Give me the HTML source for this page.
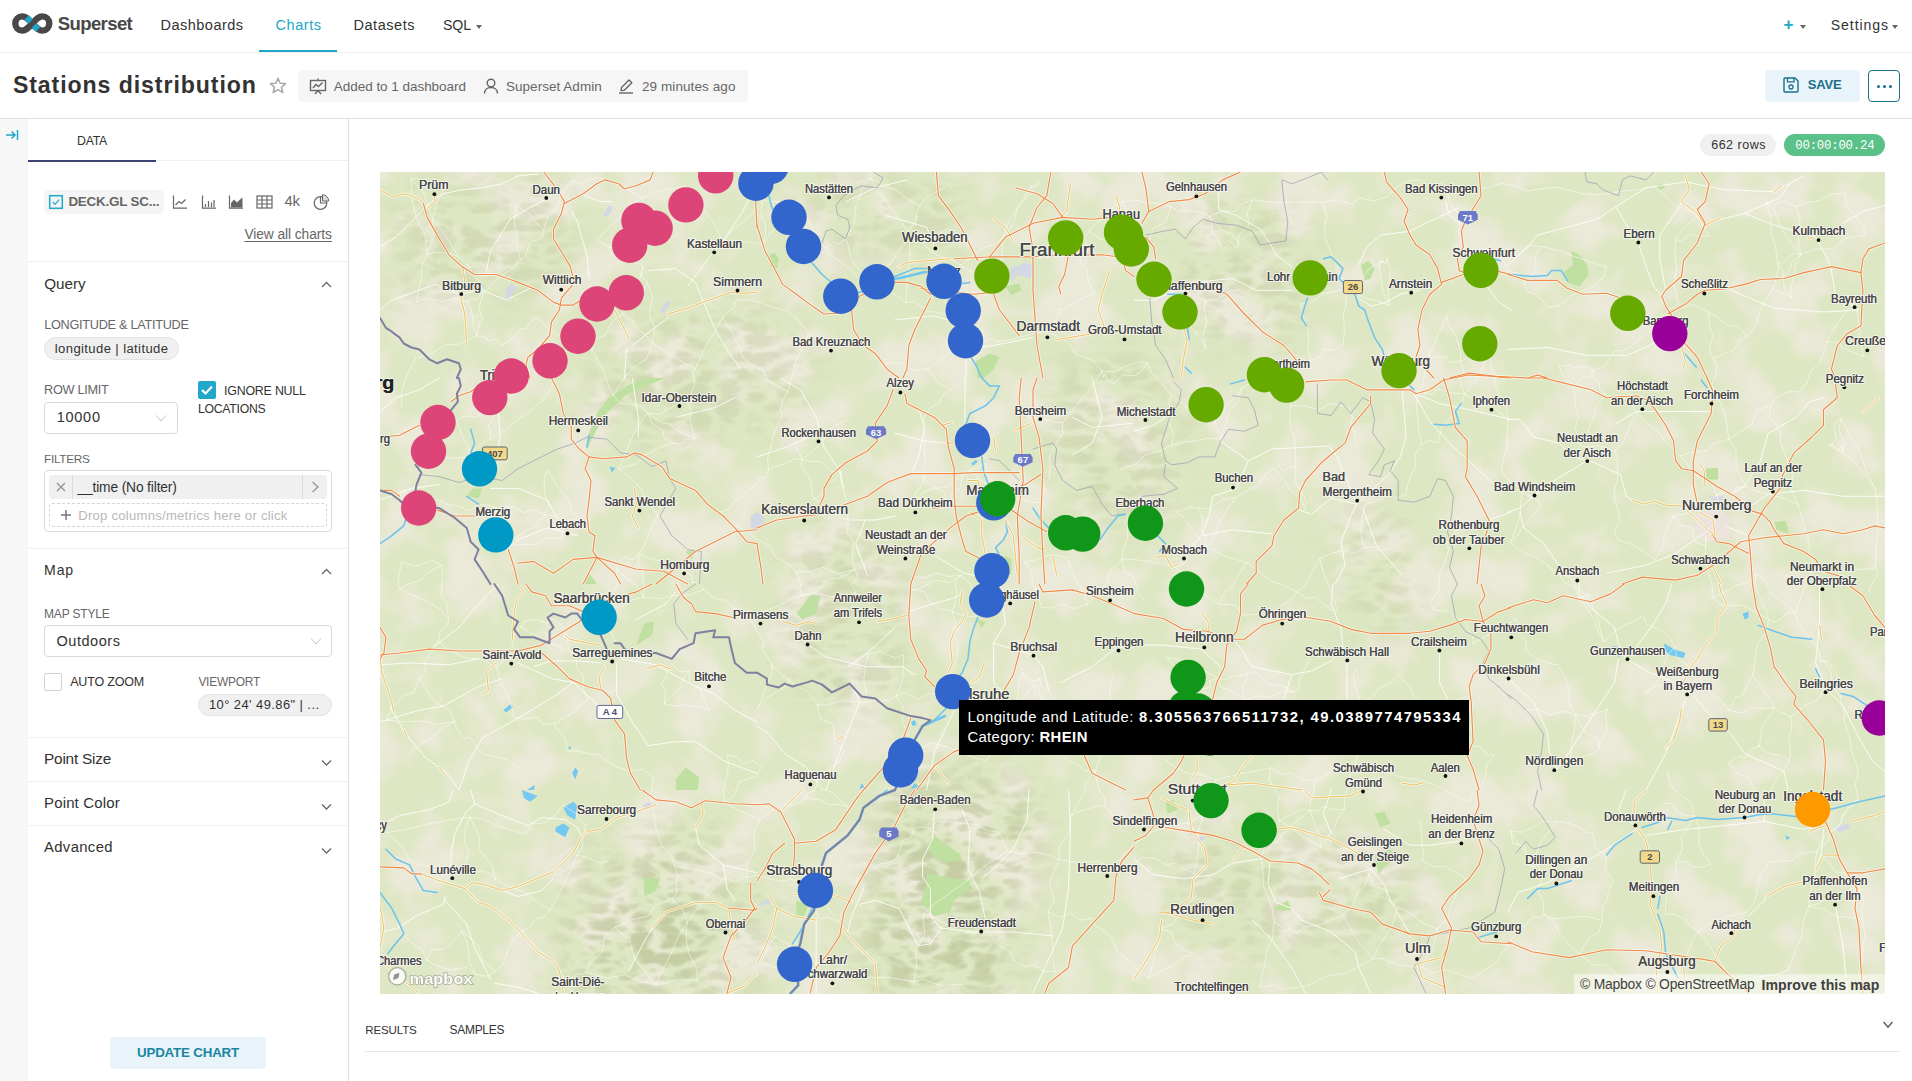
<!DOCTYPE html><html><head><meta charset="utf-8"><title>Stations distribution</title><style>
html,body{margin:0;padding:0;width:1912px;height:1081px;overflow:hidden;background:#fff;font-family:"Liberation Sans",sans-serif;}
.b{position:absolute;}
.t{position:absolute;white-space:pre;}
.caret{width:0;height:0;border-left:3.5px solid transparent;border-right:3.5px solid transparent;border-top:4px solid #666;margin-top:2px}
</style></head><body><svg class="b" style="left:0px;top:0px" width="60" height="45" viewBox="0 0 60 45">
<path d="M22.3 16.4 C18.3 16.4 15.3 19.6 15.3 23.5 C15.3 27.4 18.3 30.6 22.3 30.6 C25.5 30.6 27.9 28.4 32.3 23.5 C36.7 18.6 39.1 16.4 42.3 16.4 C46.3 16.4 49.3 19.6 49.3 23.5 C49.3 27.4 46.3 30.6 42.3 30.6 C39.1 30.6 36.7 28.4 32.3 23.5 C27.9 18.6 25.5 16.4 22.3 16.4 Z" fill="none" stroke="#484848" stroke-width="6.4"/>
<path d="M26.6 17.6 L30.6 21.6" stroke="#20a7c9" stroke-width="6.4"/>
<path d="M34 25.4 L38 29.4" stroke="#20a7c9" stroke-width="6.4"/>
</svg>
<div class="t " style="left:57.70px;top:15.00px;font-size:18.55px;line-height:18.55px;font-weight:700;color:#484848;letter-spacing:-0.155px;font-family:'Liberation Sans', sans-serif;letter-spacing:-0.6px;">Superset</div>
<div class="t " style="left:160.60px;top:17.70px;font-size:14.53px;line-height:14.53px;font-weight:400;color:#323232;letter-spacing:0.461px;font-family:'Liberation Sans', sans-serif;">Dashboards</div>
<div class="t " style="left:275.60px;top:17.70px;font-size:14.53px;line-height:14.53px;font-weight:400;color:#20a7c9;letter-spacing:0.521px;font-family:'Liberation Sans', sans-serif;">Charts</div>
<div class="t " style="left:353.50px;top:17.70px;font-size:14.53px;line-height:14.53px;font-weight:400;color:#323232;letter-spacing:0.523px;font-family:'Liberation Sans', sans-serif;">Datasets</div>
<div class="t " style="left:443.00px;top:18.06px;font-size:14.1px;line-height:14.1px;font-weight:400;color:#323232;letter-spacing:-0.107px;font-family:'Liberation Sans', sans-serif;">SQL</div>
<div class="b caret" style="left:476px;top:23px"></div>
<div class="b" style="left:259px;top:50px;width:78px;height:3px;background:#20a7c9;"></div>
<div class="b" style="left:0px;top:52px;width:1912px;height:1px;background:#f0f0f0;"></div>
<div class="t " style="left:1783.50px;top:16.11px;font-size:17px;line-height:17px;font-weight:700;color:#20a7c9;font-family:'Liberation Sans', sans-serif;">+</div>
<div class="b caret" style="left:1800px;top:23px"></div>
<div class="t " style="left:1830.80px;top:18.26px;font-size:14.1px;line-height:14.1px;font-weight:400;color:#323232;letter-spacing:0.893px;font-family:'Liberation Sans', sans-serif;">Settings</div>
<div class="b caret" style="left:1892px;top:23px"></div>
<div class="t " style="left:12.90px;top:74.24px;font-size:23.11px;line-height:23.11px;font-weight:700;color:#323232;letter-spacing:0.917px;font-family:'Liberation Sans', sans-serif;">Stations distribution</div>
<svg class="b" style="left:269px;top:77px" width="18" height="17" viewBox="0 0 18 17"><path d="M9 1.2 L11.2 6.2 L16.6 6.6 L12.5 10.2 L13.8 15.5 L9 12.7 L4.2 15.5 L5.5 10.2 L1.4 6.6 L6.8 6.2 Z" fill="none" stroke="#a8a8a8" stroke-width="1.5" stroke-linejoin="round"/></svg>
<div class="b" style="left:298px;top:70px;width:450px;height:32px;background:#f6f6f6;border-radius:4px;"></div>
<svg class="b" style="left:309px;top:78px" width="18" height="17" viewBox="0 0 18 17"><rect x="1.5" y="2.5" width="15" height="10" fill="none" stroke="#666" stroke-width="1.4"/><path d="M9 0.5 V2.5 M4 10 L7 6.5 L9.5 8.5 L13.5 4.5 M6 16 L9 12.5 L12 16" fill="none" stroke="#666" stroke-width="1.4"/></svg>
<div class="t " style="left:333.80px;top:80.07px;font-size:13.5px;line-height:13.5px;font-weight:400;color:#666666;letter-spacing:-0.034px;font-family:'Liberation Sans', sans-serif;">Added to 1 dashboard</div>
<svg class="b" style="left:483px;top:78px" width="16" height="16" viewBox="0 0 16 16"><circle cx="8" cy="5" r="3.8" fill="none" stroke="#666" stroke-width="1.4"/><path d="M1.5 15.5 C1.5 11.5 4.5 9.5 8 9.5 C11.5 9.5 14.5 11.5 14.5 15.5" fill="none" stroke="#666" stroke-width="1.4"/></svg>
<div class="t " style="left:506.00px;top:80.07px;font-size:13.5px;line-height:13.5px;font-weight:400;color:#666666;letter-spacing:0.031px;font-family:'Liberation Sans', sans-serif;">Superset Admin</div>
<svg class="b" style="left:618px;top:78px" width="17" height="16" viewBox="0 0 17 16"><path d="M3 12.5 L3.5 9.5 L11 2 L13.8 4.8 L6.3 12.3 Z" fill="none" stroke="#666" stroke-width="1.4" stroke-linejoin="round"/><path d="M1 15 H15" stroke="#666" stroke-width="1.4"/></svg>
<div class="t " style="left:642.00px;top:80.07px;font-size:13.5px;line-height:13.5px;font-weight:400;color:#666666;letter-spacing:0.084px;font-family:'Liberation Sans', sans-serif;">29 minutes ago</div>
<div class="b" style="left:1765px;top:70px;width:95px;height:32px;background:#e8f4f9;border-radius:4px;"></div>
<svg class="b" style="left:1783px;top:77px" width="16" height="16" viewBox="0 0 16 16"><path d="M1 2 Q1 1 2 1 H12 L15 4 V14 Q15 15 14 15 H2 Q1 15 1 14 Z" fill="none" stroke="#1b6f8a" stroke-width="1.4" stroke-linejoin="round"/><path d="M4.5 1 V4.8 H11 V1" fill="none" stroke="#1b6f8a" stroke-width="1.3"/><circle cx="8" cy="10" r="2" fill="none" stroke="#1b6f8a" stroke-width="1.3"/></svg>
<div class="t " style="left:1807.80px;top:79.02px;font-size:12.97px;line-height:12.97px;font-weight:700;color:#1b6f8a;letter-spacing:-0.184px;font-family:'Liberation Sans', sans-serif;">SAVE</div>
<div class="b" style="left:1868px;top:70px;width:32px;height:32px;border:1px solid #1b6f8a;border-radius:4px;box-sizing:border-box;"></div>
<div class="b" style="left:1877px;top:85px;width:3px;height:3px;background:#1b6f8a;border-radius:50%;box-shadow:6px 0 0 #1b6f8a,12px 0 0 #1b6f8a"></div>
<div class="b" style="left:0px;top:118px;width:1912px;height:1px;background:#e0e0e0;"></div>
<div class="b" style="left:0px;top:119px;width:28px;height:962px;background:#f7f7f7;"></div>
<svg class="b" style="left:5px;top:129px" width="14" height="12" viewBox="0 0 14 12"><path d="M1 6 H9.5 M6.5 2.5 L10 6 L6.5 9.5" fill="none" stroke="#20a7c9" stroke-width="1.5"/><path d="M12.5 1 V11" stroke="#20a7c9" stroke-width="1.5"/></svg>
<div class="b" style="left:348px;top:119px;width:1px;height:962px;background:#e0e0e0;"></div>
<div class="t " style="left:77.00px;top:134.78px;font-size:12.31px;line-height:12.31px;font-weight:400;color:#323232;letter-spacing:-0.234px;font-family:'Liberation Sans', sans-serif;">DATA</div>
<div class="b" style="left:28px;top:160px;width:320px;height:1px;background:#f0f0f0;"></div>
<div class="b" style="left:28px;top:160px;width:128px;height:2px;background:#3b4372;"></div>
<div class="b" style="left:44px;top:190px;width:120px;height:24px;background:#f5f5f5;border-radius:5px;"></div>
<svg class="b" style="left:48px;top:194px" width="16" height="16" viewBox="0 0 16 16"><rect x="1.7" y="1.7" width="12.6" height="12.6" fill="none" stroke="#20a7c9" stroke-width="1.5"/><path d="M4.8 8 L7 10.3 L11.2 5.6" fill="none" stroke="#20a7c9" stroke-width="1.2"/></svg>
<div class="t " style="left:68.40px;top:194.88px;font-size:13.37px;line-height:13.37px;font-weight:700;color:#666666;letter-spacing:-0.179px;font-family:'Liberation Sans', sans-serif;">DECK.GL SC...</div>
<svg class="b" style="left:172px;top:194px" width="160" height="18" viewBox="0 0 160 18">
<g fill="none" stroke="#666" stroke-width="1.2">
<path d="M1.5 1.5 V14.2 H15"/><path d="M3.5 11 L7 7.5 L9.5 9.5 L13.5 5.5"/>
<path d="M30.5 1.5 V14.2 H44"/><path d="M33.5 13 V10 M36.5 13 V7 M39.5 13 V8.5 M42 13 V6"/>
<path d="M57.5 1.5 V14.2 H71"/>
<rect x="85" y="2" width="15" height="12"/><path d="M85 6 H100 M85 10 H100 M90 2 V14 M95 2 V14"/>
<circle cx="148.5" cy="9" r="6.3"/><path d="M148.5 2.7 V9 H154.8"/>
</g>
<path d="M59 13.6 V9 L62 5.5 L65 8.5 L67.5 6 L70.5 3.5 V13.6 Z" fill="#666"/>
<path d="M150.5 0.8 A6.3 6.3 0 0 1 156.7 7 H150.5 Z" fill="#ddd" stroke="#666" stroke-width="1"/>
</svg>
<div class="t " style="left:284.40px;top:194.33px;font-size:14.97px;line-height:14.97px;font-weight:400;color:#666666;letter-spacing:-0.209px;font-family:'Liberation Sans', sans-serif;">4k</div>
<div class="t " style="left:244.40px;top:228.31px;font-size:13.81px;line-height:13.81px;font-weight:400;color:#666666;letter-spacing:-0.084px;font-family:'Liberation Sans', sans-serif;text-decoration:underline;text-underline-offset:1.5px;">View all charts</div>
<div class="b" style="left:28px;top:261px;width:320px;height:1px;background:#f0f0f0;"></div>
<div class="t " style="left:44.20px;top:275.58px;font-size:15.26px;line-height:15.26px;font-weight:400;color:#323232;letter-spacing:-0.013px;font-family:'Liberation Sans', sans-serif;">Query</div>
<svg class="b" style="left:320.5px;top:281px" width="11" height="8" viewBox="0 0 11 8"><path d="M1 6 L5.5 1.5 L10 6" fill="none" stroke="#666" stroke-width="1.3"/></svg>
<div class="t " style="left:44.20px;top:319.26px;font-size:12.69px;line-height:12.69px;font-weight:400;color:#666666;letter-spacing:-0.271px;font-family:'Liberation Sans', sans-serif;">LONGITUDE &amp; LATITUDE</div>
<div class="b" style="left:44px;top:337px;width:135px;height:23px;background:#f0f0f0;border:1px solid #e3e3e3;border-radius:12px;box-sizing:border-box;"></div>
<div class="t " style="left:54.80px;top:341.93px;font-size:13.08px;line-height:13.08px;font-weight:400;color:#323232;letter-spacing:0.382px;font-family:'Liberation Sans', sans-serif;">longitude | latitude</div>
<div class="t " style="left:44.00px;top:384.42px;font-size:12.73px;line-height:12.73px;font-weight:400;color:#666666;letter-spacing:-0.297px;font-family:'Liberation Sans', sans-serif;">ROW LIMIT</div>
<div class="b" style="left:44px;top:402px;width:134px;height:32px;border:1px solid #d9d9d9;border-radius:4px;box-sizing:border-box;"></div>
<div class="t " style="left:56.80px;top:409.70px;font-size:14.53px;line-height:14.53px;font-weight:400;color:#323232;letter-spacing:0.698px;font-family:'Liberation Sans', sans-serif;">10000</div>
<svg class="b" style="left:155px;top:414px" width="12" height="9" viewBox="0 0 12 9"><path d="M1 1.5 L6 7 L11 1.5" fill="none" stroke="#c4c4c4" stroke-width="1"/></svg>
<div class="b" style="left:198px;top:381px;width:18px;height:18px;background:#20a7c9;border-radius:2px;"></div>
<svg class="b" style="left:198px;top:381px" width="18" height="18" viewBox="0 0 18 18"><path d="M4 9 L7.5 12.5 L14 5.5" fill="none" stroke="#fff" stroke-width="2.2"/></svg>
<div class="t " style="left:224.00px;top:384.70px;font-size:12.4px;line-height:12.4px;font-weight:400;color:#323232;letter-spacing:-0.206px;font-family:'Liberation Sans', sans-serif;">IGNORE NULL</div>
<div class="t " style="left:198.00px;top:403.22px;font-size:12.26px;line-height:12.26px;font-weight:400;color:#323232;letter-spacing:-0.279px;font-family:'Liberation Sans', sans-serif;">LOCATIONS</div>
<div class="t " style="left:44.00px;top:454.31px;font-size:11.8px;line-height:11.8px;font-weight:400;color:#666666;letter-spacing:-0.274px;font-family:'Liberation Sans', sans-serif;">FILTERS</div>
<div class="b" style="left:44px;top:470px;width:288px;height:62px;border:1px solid #d9d9d9;border-radius:4px;box-sizing:border-box;"></div>
<div class="b" style="left:49px;top:475px;width:278px;height:24px;background:#f0f0f0;border-radius:3px;"></div>
<div class="b" style="left:72px;top:475px;width:1px;height:24px;background:#dcdcdc;"></div>
<div class="b" style="left:302px;top:475px;width:1px;height:24px;background:#dcdcdc;"></div>
<svg class="b" style="left:56px;top:482px" width="10" height="10" viewBox="0 0 10 10"><path d="M1 1 L9 9 M9 1 L1 9" stroke="#999" stroke-width="1.5"/></svg>
<div class="t " style="left:77.40px;top:480.51px;font-size:13.81px;line-height:13.81px;font-weight:400;color:#323232;letter-spacing:-0.144px;font-family:'Liberation Sans', sans-serif;">__time (No filter)</div>
<svg class="b" style="left:311px;top:481px" width="9" height="12" viewBox="0 0 9 12"><path d="M1.5 1 L7 6 L1.5 11" fill="none" stroke="#999" stroke-width="1.4"/></svg>
<div class="b" style="left:49px;top:503px;width:278px;height:24px;border:1px dashed #d4d4d4;border-radius:3px;box-sizing:border-box;"></div>
<svg class="b" style="left:60px;top:509px" width="12" height="12" viewBox="0 0 12 12"><path d="M6 1 V11 M1 6 H11" stroke="#777" stroke-width="1.5"/></svg>
<div class="t " style="left:78.20px;top:508.93px;font-size:13.08px;line-height:13.08px;font-weight:400;color:#b8b8b8;letter-spacing:0.260px;font-family:'Liberation Sans', sans-serif;">Drop columns/metrics here or click</div>
<div class="b" style="left:28px;top:548px;width:320px;height:1px;background:#f0f0f0;"></div>
<div class="t " style="left:44.00px;top:562.76px;font-size:14.1px;line-height:14.1px;font-weight:400;color:#323232;letter-spacing:0.885px;font-family:'Liberation Sans', sans-serif;">Map</div>
<svg class="b" style="left:320.5px;top:568px" width="11" height="8" viewBox="0 0 11 8"><path d="M1 6 L5.5 1.5 L10 6" fill="none" stroke="#666" stroke-width="1.3"/></svg>
<div class="t " style="left:44.00px;top:607.94px;font-size:12.0px;line-height:12.0px;font-weight:400;color:#666666;letter-spacing:-0.180px;font-family:'Liberation Sans', sans-serif;">MAP STYLE</div>
<div class="b" style="left:44px;top:625px;width:288px;height:32px;border:1px solid #d9d9d9;border-radius:4px;box-sizing:border-box;"></div>
<div class="t " style="left:56.50px;top:633.70px;font-size:14.53px;line-height:14.53px;font-weight:400;color:#323232;letter-spacing:0.533px;font-family:'Liberation Sans', sans-serif;">Outdoors</div>
<svg class="b" style="left:310px;top:637px" width="12" height="9" viewBox="0 0 12 9"><path d="M1 1.5 L6 7 L11 1.5" fill="none" stroke="#c4c4c4" stroke-width="1"/></svg>
<div class="b" style="left:44px;top:673px;width:18px;height:18px;border:1px solid #d0d0d0;border-radius:2px;box-sizing:border-box;"></div>
<div class="t " style="left:70.20px;top:676.42px;font-size:12.5px;line-height:12.5px;font-weight:400;color:#323232;letter-spacing:-0.171px;font-family:'Liberation Sans', sans-serif;">AUTO ZOOM</div>
<div class="t " style="left:198.40px;top:676.88px;font-size:11.95px;line-height:11.95px;font-weight:400;color:#666666;letter-spacing:-0.231px;font-family:'Liberation Sans', sans-serif;">VIEWPORT</div>
<div class="b" style="left:198px;top:694px;width:134px;height:22px;background:#f0f0f0;border:1px solid #e3e3e3;border-radius:11px;box-sizing:border-box;"></div>
<div class="t " style="left:209.00px;top:699.25px;font-size:12.94px;line-height:12.94px;font-weight:400;color:#323232;letter-spacing:0.425px;font-family:'Liberation Sans', sans-serif;">10° 24&#x27; 49.86&quot; | ...</div>
<div class="b" style="left:28px;top:737px;width:320px;height:1px;background:#f0f0f0;"></div>
<div class="t " style="left:44.00px;top:751.26px;font-size:15.41px;line-height:15.41px;font-weight:400;color:#323232;letter-spacing:-0.231px;font-family:'Liberation Sans', sans-serif;">Point Size</div>
<svg class="b" style="left:320.5px;top:759px" width="11" height="8" viewBox="0 0 11 8"><path d="M1 1.5 L5.5 6 L10 1.5" fill="none" stroke="#666" stroke-width="1.3"/></svg>
<div class="b" style="left:28px;top:781px;width:320px;height:1px;background:#f0f0f0;"></div>
<div class="t " style="left:44.00px;top:795.63px;font-size:14.97px;line-height:14.97px;font-weight:400;color:#323232;letter-spacing:0.165px;font-family:'Liberation Sans', sans-serif;">Point Color</div>
<svg class="b" style="left:320.5px;top:803px" width="11" height="8" viewBox="0 0 11 8"><path d="M1 1.5 L5.5 6 L10 1.5" fill="none" stroke="#666" stroke-width="1.3"/></svg>
<div class="b" style="left:28px;top:825px;width:320px;height:1px;background:#f0f0f0;"></div>
<div class="t " style="left:44.00px;top:839.65px;font-size:14.83px;line-height:14.83px;font-weight:400;color:#323232;letter-spacing:0.363px;font-family:'Liberation Sans', sans-serif;">Advanced</div>
<svg class="b" style="left:320.5px;top:847px" width="11" height="8" viewBox="0 0 11 8"><path d="M1 1.5 L5.5 6 L10 1.5" fill="none" stroke="#666" stroke-width="1.3"/></svg>
<div class="b" style="left:110px;top:1037px;width:156px;height:32px;background:#e8f4f9;border-radius:4px;"></div>
<div class="t " style="left:137.00px;top:1046.41px;font-size:13.34px;line-height:13.34px;font-weight:700;color:#1a85a0;letter-spacing:-0.176px;font-family:'Liberation Sans', sans-serif;">UPDATE CHART</div>
<div class="b" style="left:1700px;top:134px;width:76px;height:22px;background:#f0f0f0;border-radius:11px;"></div>
<div class="t " style="left:1711.20px;top:139.22px;font-size:12.5px;line-height:12.5px;font-weight:400;color:#323232;letter-spacing:0.512px;font-family:'Liberation Sans', sans-serif;">662 rows</div>
<div class="b" style="left:1784px;top:134px;width:101px;height:22px;background:#5ac189;border-radius:11px;"></div>
<div class="t " style="left:1795.30px;top:140.37px;font-size:12.31px;line-height:12.31px;font-weight:400;color:#ffffff;letter-spacing:-0.196px;font-family:'Liberation Mono', monospace;">00:00:00.24</div>
<div class="t " style="left:365.30px;top:1025.19px;font-size:11.59px;line-height:11.59px;font-weight:400;color:#323232;letter-spacing:-0.182px;font-family:'Liberation Sans', sans-serif;">RESULTS</div>
<div class="t " style="left:449.60px;top:1024.88px;font-size:11.95px;line-height:11.95px;font-weight:400;color:#323232;letter-spacing:-0.275px;font-family:'Liberation Sans', sans-serif;">SAMPLES</div>
<div class="b" style="left:365px;top:1051px;width:1535px;height:1px;background:#e8e8e8;"></div>
<svg class="b" style="left:1882px;top:1020px" width="12" height="10" viewBox="0 0 12 10"><path d="M1.5 2 L6 7 L10.5 2" fill="none" stroke="#666" stroke-width="1.6"/></svg>
<svg class="b" style="left:380px;top:172px" width="1505" height="822" viewBox="380 172 1505 822">
<defs><filter id="tex" x="380" y="172" width="1505" height="822" filterUnits="userSpaceOnUse" color-interpolation-filters="sRGB"><feTurbulence type="fractalNoise" baseFrequency="0.018" numOctaves="3" seed="7"/><feColorMatrix type="matrix" values="0 0 0 0 0.871  0 0 0 0 0.906  0 0 0 0 0.765  5 0 0 0 -1.7"/></filter></defs>
<rect x="380" y="172" width="1505" height="822" fill="#ebe9d8"/>
<rect x="380" y="172" width="1505" height="822" fill="#000" filter="url(#tex)"/>
<defs><filter id="mblur" x="-20%" y="-20%" width="140%" height="140%"><feGaussianBlur stdDeviation="18"/></filter><mask id="mclip" maskUnits="userSpaceOnUse" x="380" y="172" width="1505" height="822"><g fill="#fff" filter="url(#mblur)"><polygon points="557.5,961.5 577.2,932.0 606.8,912.2 632.4,894.5 646.2,872.8 671.8,857.0 687.6,819.6 695.5,829.4 687.6,864.9 695.5,888.6 715.2,908.3 715.2,947.7 719.1,993.1 616.6,993.1 577.2,979.3"/><polygon points="895.0,809.7 924.6,805.8 973.9,805.8 1013.3,790.0 1033.0,790.0 1033.0,849.2 993.6,888.6 983.8,928.0 1013.3,947.7 1013.3,993.1 875.3,993.1 865.4,947.7 893.1,900.4 895.0,849.2"/></g></mask><filter id="hs" x="380" y="172" width="1505" height="822" filterUnits="userSpaceOnUse" color-interpolation-filters="sRGB"><feTurbulence type="turbulence" baseFrequency="0.035 0.06" numOctaves="2" seed="11"/><feColorMatrix type="matrix" values="0 0 0 0 0.74  0 0 0 0 0.77  0 0 0 0 0.6  3.2 0 0 0 -0.55"/></filter></defs>
<g mask="url(#mclip)"><rect x="380" y="172" width="1505" height="822" fill="#000" filter="url(#hs)" opacity="0.6"/></g>
<defs><mask id="hclip" maskUnits="userSpaceOnUse" x="380" y="172" width="1505" height="822"><g fill="#fff" filter="url(#mblur)"><polygon points="780,540 840,520 900,560 910,700 840,720 790,680"/><polygon points="1060,360 1140,350 1190,420 1170,520 1090,520 1050,450"/><polygon points="1170,210 1280,200 1320,260 1290,340 1190,340"/><polygon points="600,330 720,300 820,330 800,420 650,450 590,420"/><polygon points="400,190 560,180 580,260 520,300 400,300"/><polygon points="800,180 960,180 970,240 820,260"/><polygon points="890,760 1000,760 1040,860 1010,994 880,994 860,880"/><polygon points="560,850 700,820 780,900 760,994 560,994"/><polygon points="1150,840 1280,820 1420,860 1420,940 1200,960"/><polygon points="1330,520 1400,500 1420,620 1360,640"/></g></mask></defs>
<g mask="url(#hclip)"><rect x="380" y="172" width="1505" height="822" fill="#000" filter="url(#hs)" opacity="0.38"/></g>
<g fill="#ebe3dc"><polygon points="1693.3,516.0 1705.2,510.1 1724.9,512.1 1730.8,520.0 1728.8,539.7 1705.2,541.7 1693.3,527.9"/></g>
<g fill="#bfe0a0"><polygon points="768.8,254.8 774.7,252.8 778.7,258.8 776.7,268.6 770.8,266.6"/><polygon points="1005.4,286.4 1019.2,283.4 1021.2,290.3 1011.4,295.2"/><polygon points="975.9,361.3 989.7,353.4 999.5,357.3 993.6,369.2 983.8,378.0 977.8,378.0"/><polygon points="1360.8,264.7 1368.6,260.7 1374.6,268.6 1370.6,278.5 1364.7,280.4"/><polygon points="1571.1,250.9 1579.0,254.8 1586.9,264.7 1588.8,274.5 1579.0,286.4 1567.2,282.4 1563.2,272.6 1573.1,264.7"/><polygon points="1655.9,185.8 1661.8,183.8 1665.7,187.8 1659.8,189.7"/><polygon points="587.0,449.0 596.9,429.3 606.8,413.5 624.5,395.7 636.3,389.8 656.0,381.9 665.9,378.0 646.2,378.0 626.5,385.9 606.8,399.7 596.9,413.5 589.0,433.2"/><polygon points="466.8,496.3 472.7,488.4 482.5,488.4 478.6,498.3"/><polygon points="685.6,551.5 695.5,549.5 691.5,559.4"/><polygon points="583.1,584.0 589.0,573.2 596.9,584.0"/><polygon points="1005.4,555.5 1011.4,559.4 1011.4,575.2 1007.4,573.2"/><polygon points="1705.2,468.7 1718.0,467.7 1718.0,479.5 1707.1,479.5"/><polygon points="1774.2,521.9 1786.0,521.0 1789.0,533.8 1776.2,529.8"/><polygon points="636.3,645.1 644.2,623.4 654.1,621.5 652.1,635.3"/><polygon points="675.8,779.2 685.6,767.4 699.4,777.2 697.5,790.0 675.8,790.0"/><polygon points="796.4,613.6 810.2,595.8 820.1,595.8 816.2,613.6 802.4,619.5"/><polygon points="975.9,619.5 985.7,621.5 981.8,627.4"/><polygon points="644.2,876.8 660.0,878.7 656.0,890.6 644.2,896.5"/><polygon points="934.5,835.4 944.3,843.2 958.1,853.1 962.1,859.0 946.3,863.0 934.5,857.0 926.6,845.2"/><polygon points="926.6,872.8 954.2,878.7 969.9,880.7 969.9,888.6 954.2,900.4 950.2,912.2 934.5,916.2 926.6,908.3 920.7,902.4 926.6,884.6"/><polygon points="796.4,900.4 808.3,904.4 804.3,916.2 796.4,916.2"/><polygon points="1374.6,813.7 1384.4,811.7 1390.3,823.5 1380.5,827.5"/><polygon points="1374.6,855.1 1390.3,849.2 1396.2,857.0 1382.4,868.9 1378.5,874.8"/><polygon points="1274.0,908.3 1287.8,900.4 1291.7,910.3 1276.0,910.3"/><polygon points="1165.5,801.8 1173.4,799.9 1177.4,809.7 1167.5,813.7"/></g>
<g fill="#d4d7e4"><polygon points="602.8,215.4 608.7,205.5 612.7,206.5 610.7,213.4 604.8,217.4"/><polygon points="506.2,290.3 511.1,283.4 516.1,287.3 510.1,298.2 505.2,301.2"/><polygon points="660.0,310.0 667.9,300.2 670.8,302.1 663.9,314.0"/><polygon points="1009.4,268.6 1025.2,262.7 1033.0,264.7 1031.1,278.5 1017.3,274.5 1011.4,282.4"/><polygon points="750.7,516.0 757.0,512.1 757.0,529.8 750.7,527.9"/><polygon points="757.0,512.1 762.9,516.0 764.9,523.9 757.0,527.9"/><polygon points="1709.1,496.3 1722.9,496.3 1722.9,500.2 1711.1,500.2"/><polygon points="642.2,805.8 650.1,801.8 654.1,804.8 646.2,808.7"/><polygon points="759.0,904.4 768.8,898.4 770.8,902.4 760.9,906.3"/><polygon points="1195.1,837.3 1205.0,837.3 1203.0,841.3 1197.1,841.3"/><polygon points="1835.3,827.5 1847.1,823.5 1851.1,827.5 1839.3,832.4"/></g>
<g fill="#75c8f0"><polygon points="609.7,466.7 615.6,467.7 611.7,472.6"/><polygon points="970.9,463.8 975.9,459.8 977.8,461.8 972.9,465.7"/><polygon points="503.2,710.2 510.1,704.3 513.1,707.2 506.2,712.2"/><polygon points="567.3,749.6 570.3,745.7 571.3,748.6"/><polygon points="572.2,773.3 575.2,767.4 578.2,771.3 575.2,779.2"/><polygon points="526.9,790.0 534.8,785.1 533.8,790.0"/><polygon points="910.8,722.0 914.7,720.1 916.7,725.0 912.8,726.0"/><polygon points="859.5,789.1 861.5,783.1 864.5,787.1"/><polygon points="910.8,789.1 914.7,783.1 919.7,787.1"/><polygon points="1663.8,643.2 1673.6,649.1 1685.5,653.0 1683.5,657.9 1669.7,655.0 1665.7,651.0"/><polygon points="1742.6,613.6 1748.6,611.6 1748.6,617.5 1744.6,619.5"/><polygon points="1612.5,646.1 1618.4,647.1 1622.4,655.0 1618.4,657.0"/><polygon points="522.0,790.0 537.7,795.9 529.9,801.8 523.9,797.9"/><polygon points="563.4,807.7 573.2,801.8 577.2,805.8 575.2,819.6 567.3,815.6"/><polygon points="555.5,827.5 563.4,823.5 569.3,827.5 565.3,837.3 555.5,831.4"/><polygon points="1785.0,835.4 1790.0,837.3 1787.0,840.3"/></g>
<g fill="none" stroke="#ffffff" stroke-width="0.9" stroke-opacity="0.55" stroke-linejoin="round" stroke-linecap="round"><polyline points="1594.0,370.2 1590.0,376.9 1585.7,376.9 1580.0,379.4 1574.1,386.9"/><polyline points="738.0,299.9 747.5,299.6 761.2,302.8 776.6,308.2 787.5,310.9"/><polyline points="1175.3,510.6 1182.5,516.9 1190.0,526.6 1199.9,539.9 1206.6,547.7"/><polyline points="1071.0,816.2 1069.2,831.0 1065.4,837.7 1059.1,847.1 1058.9,859.4"/><polyline points="878.6,365.3 890.4,362.6 901.8,363.1 912.3,370.5 927.4,368.9"/><polyline points="1795.3,206.9 1800.4,218.8 1798.0,232.2 1798.8,245.4 1800.9,254.6"/><polyline points="1247.8,672.4 1259.3,674.0 1267.1,684.3 1280.8,685.3 1294.0,692.0"/><polyline points="909.5,239.6 922.5,243.3 934.7,254.2 950.0,259.0 960.6,265.0"/><polyline points="1770.2,405.3 1756.7,410.6 1751.7,424.8 1738.0,433.3 1728.7,439.2"/><polyline points="952.3,611.3 957.1,613.8 969.6,616.7 974.6,616.3 986.3,614.4"/><polyline points="1753.7,979.9 1764.4,975.8 1775.0,974.5 1778.5,974.9 1788.4,969.8"/><polyline points="1789.5,760.1 1782.1,773.5 1777.9,776.9 1771.3,789.2 1761.9,797.9"/><polyline points="927.4,368.9 937.4,363.0 950.9,351.0 958.2,343.7 972.3,338.5"/><polyline points="1319.8,558.2 1321.8,567.7 1327.2,582.5 1333.1,595.8 1337.1,610.3"/><polyline points="1194.1,873.5 1195.5,878.4 1191.8,889.6 1197.3,894.9 1193.2,900.1"/><polyline points="1845.1,192.9 1846.8,207.1 1857.2,217.4 1863.8,227.5 1864.7,235.2"/><polyline points="1021.8,411.3 1028.9,417.1 1040.0,418.7 1054.7,421.9 1062.2,422.7"/><polyline points="467.5,301.7 471.2,310.1 472.7,316.9 473.6,326.8 476.6,335.7"/><polyline points="1061.4,754.5 1071.0,761.7 1075.2,762.9 1085.3,770.4 1095.6,771.1"/><polyline points="497.1,667.2 500.3,683.3 504.1,688.2 511.8,706.6 513.8,717.3"/><polyline points="1002.8,497.8 1014.2,498.7 1023.1,499.1 1027.8,501.8 1040.9,502.8"/><polyline points="1429.3,713.6 1437.9,721.0 1448.8,727.8 1464.7,736.3 1473.0,745.7"/><polyline points="456.3,420.6 460.3,430.4 463.0,438.0 468.0,444.9 470.0,457.9"/><polyline points="960.6,265.0 967.9,260.5 981.3,248.4 995.0,244.2 1002.7,237.8"/><polyline points="1059.0,309.6 1063.8,309.1 1074.2,302.8 1082.5,298.3 1094.3,292.9"/><polyline points="515.8,204.8 514.3,222.1 516.4,233.7 517.3,245.2 520.5,260.1"/><polyline points="1122.7,201.8 1138.0,200.4 1146.1,202.8 1160.6,203.5 1171.1,206.9"/><polyline points="1175.1,567.1 1184.2,563.8 1186.9,557.2 1195.8,550.3 1206.6,547.7"/><polyline points="585.5,824.4 584.8,828.2 582.7,842.4 582.8,847.0 576.7,855.3"/><polyline points="572.8,181.2 562.6,190.0 557.3,207.6 547.8,216.6 543.7,230.3"/><polyline points="1309.4,984.9 1328.3,975.4 1343.3,973.7 1354.0,969.1 1372.8,958.6"/><polyline points="643.2,266.8 641.4,271.0 641.4,276.0 645.9,280.5 647.4,282.8"/><polyline points="1244.5,700.5 1257.9,695.6 1268.5,697.8 1284.5,690.8 1294.0,692.0"/><polyline points="1171.1,206.9 1177.5,211.3 1190.9,210.8 1203.5,212.7 1209.3,216.6"/><polyline points="1206.6,547.7 1213.8,549.7 1223.4,555.7 1237.6,559.9 1246.8,562.8"/><polyline points="817.0,780.7 816.5,786.5 814.3,790.5 807.2,793.7 806.1,797.8"/><polyline points="1297.2,592.0 1307.2,598.5 1315.5,597.6 1330.3,609.3 1337.1,610.3"/><polyline points="1278.0,371.6 1286.1,365.8 1294.3,366.8 1302.6,367.1 1310.5,360.5"/><polyline points="923.1,914.7 924.7,934.9 915.5,951.2 916.6,964.0 913.8,981.8"/><polyline points="749.0,615.9 756.2,630.0 764.0,642.1 762.1,648.6 771.7,664.1"/><polyline points="869.0,654.0 866.2,662.4 863.7,680.4 866.4,691.2 865.5,702.3"/><polyline points="1365.1,504.5 1375.3,501.3 1387.1,496.2 1396.0,497.9 1405.9,494.5"/><polyline points="1526.4,924.0 1529.0,920.2 1535.2,916.9 1542.0,917.3 1543.9,914.6"/><polyline points="914.1,576.8 912.8,581.1 915.8,584.7 909.2,588.1 912.1,589.8"/><polyline points="1418.0,391.3 1431.5,394.7 1437.7,389.2 1452.3,392.8 1464.5,393.7"/><polyline points="1473.0,745.7 1479.1,746.5 1485.4,752.3 1485.7,754.4 1494.1,755.1"/><polyline points="903.6,654.9 903.3,662.5 903.3,675.8 900.0,687.7 895.8,696.3"/><polyline points="1556.2,822.1 1562.6,821.9 1576.6,825.8 1586.5,832.5 1592.4,833.1"/><polyline points="1008.7,721.9 999.0,734.1 995.1,737.9 992.8,751.7 985.2,760.8"/><polyline points="1510.5,542.8 1516.3,548.0 1527.7,554.0 1538.5,558.5 1547.1,565.1"/><polyline points="970.6,469.8 963.1,474.8 960.1,487.8 951.9,494.2 948.5,502.3"/><polyline points="1543.9,914.6 1554.8,919.0 1571.0,917.3 1586.7,916.2 1602.3,920.4"/><polyline points="997.8,832.0 1003.4,839.7 1002.6,845.1 1006.3,846.0 1006.6,851.5"/><polyline points="920.2,205.6 916.1,213.4 916.6,220.8 908.8,230.1 909.5,239.6"/><polyline points="1525.5,649.8 1533.5,656.7 1538.9,659.6 1553.3,664.4 1557.4,664.5"/><polyline points="1669.1,987.5 1680.9,985.5 1697.8,986.8 1713.4,982.7 1730.0,980.5"/><polyline points="961.1,575.3 955.0,581.9 957.2,591.7 955.5,602.0 952.3,611.3"/><polyline points="1579.5,445.7 1589.2,446.9 1599.6,445.7 1609.5,451.4 1615.3,450.5"/><polyline points="1490.3,187.0 1501.0,183.5 1515.1,185.8 1527.4,191.1 1541.4,188.8"/><polyline points="470.0,817.2 479.4,836.2 478.8,849.3 491.9,865.3 495.4,879.0"/><polyline points="986.2,464.0 987.2,472.7 992.4,480.8 995.1,493.3 1002.8,497.8"/><polyline points="1126.8,513.0 1127.3,521.3 1127.7,539.3 1123.3,549.3 1122.0,559.2"/><polyline points="1594.0,370.2 1604.7,366.3 1614.1,351.5 1626.2,349.6 1640.8,339.2"/><polyline points="1730.0,980.5 1732.5,980.9 1741.3,983.9 1745.6,978.2 1753.7,979.9"/><polyline points="1759.3,746.0 1765.4,752.0 1776.0,754.9 1780.5,754.8 1789.5,760.1"/><polyline points="1218.0,678.7 1209.7,680.5 1210.4,687.7 1200.4,688.6 1198.2,695.5"/><polyline points="1717.0,494.9 1724.1,492.2 1732.0,494.6 1736.7,487.4 1746.3,486.9"/><polyline points="1171.5,395.2 1169.6,404.6 1168.7,421.7 1173.9,434.3 1171.3,445.2"/><polyline points="1675.8,239.6 1680.5,241.4 1691.2,234.6 1699.0,235.9 1709.4,236.2"/><polyline points="1769.4,862.0 1781.3,860.8 1791.0,860.8 1801.0,853.5 1816.6,851.7"/><polyline points="1216.0,779.8 1212.5,790.5 1207.8,797.0 1209.1,803.1 1203.5,814.8"/><polyline points="1712.2,597.4 1722.4,605.5 1744.2,605.4 1756.9,612.9 1768.4,619.4"/><polyline points="1310.0,810.7 1313.6,821.0 1315.7,827.1 1320.1,834.3 1320.2,847.3"/><polyline points="1818.6,651.1 1820.1,661.1 1828.0,661.6 1836.7,673.9 1838.4,678.0"/><polyline points="1770.2,405.3 1777.9,396.2 1788.1,391.8 1798.1,391.6 1806.6,383.6"/><polyline points="1205.0,301.1 1204.4,309.3 1206.9,322.3 1203.3,334.3 1205.8,348.7"/><polyline points="1247.8,672.4 1245.2,682.5 1242.4,687.4 1243.3,691.9 1244.5,700.5"/><polyline points="1746.3,486.9 1758.7,491.8 1768.9,494.2 1782.6,498.0 1798.5,504.9"/><polyline points="419.7,865.5 434.0,865.8 443.3,868.1 455.9,869.7 464.8,865.9"/><polyline points="1359.8,702.4 1360.8,716.8 1357.7,733.4 1359.5,749.1 1355.0,764.6"/><polyline points="1214.9,420.7 1215.4,422.7 1216.2,427.6 1222.2,436.6 1220.4,438.9"/><polyline points="1295.9,467.2 1294.6,481.6 1300.7,490.3 1306.7,502.5 1305.0,509.1"/><polyline points="426.8,960.1 435.9,965.0 449.7,969.9 467.2,967.5 476.3,974.6"/><polyline points="774.8,936.8 788.2,943.7 796.4,957.4 801.9,966.8 812.4,973.1"/><polyline points="1319.8,558.2 1316.9,564.0 1309.2,577.5 1304.4,586.8 1297.2,592.0"/><polyline points="477.0,747.6 483.2,754.0 500.6,757.8 507.5,759.7 517.1,767.1"/><polyline points="464.8,865.9 476.4,872.2 480.1,870.9 487.7,872.4 495.4,879.0"/><polyline points="399.8,588.9 409.9,594.1 424.5,599.9 439.8,609.0 448.7,618.8"/><polyline points="456.3,420.6 444.9,431.3 442.9,441.2 429.8,443.6 422.9,456.4"/><polyline points="1465.2,619.9 1467.9,629.2 1471.4,634.5 1474.0,641.3 1473.1,643.5"/><polyline points="459.9,506.4 469.0,510.6 479.3,504.5 488.7,505.4 500.4,509.0"/><polyline points="483.4,293.4 479.0,307.6 482.3,318.3 479.5,322.6 476.6,335.7"/><polyline points="1557.4,664.5 1565.6,678.5 1569.8,691.7 1568.6,702.6 1575.3,714.4"/><polyline points="1429.0,355.0 1423.7,362.5 1425.0,370.2 1422.6,385.8 1418.0,391.3"/><polyline points="615.4,927.3 633.2,919.2 647.8,916.6 654.3,906.4 672.3,898.4"/><polyline points="1680.4,456.0 1692.9,469.5 1696.5,476.0 1711.4,482.3 1717.0,494.9"/><polyline points="1521.8,492.7 1520.9,503.2 1520.0,515.1 1516.4,527.0 1510.5,542.8"/><polyline points="643.2,266.8 639.7,279.6 635.9,289.8 625.7,300.0 622.4,313.7"/><polyline points="616.8,568.1 618.8,562.7 624.6,557.2 632.2,559.6 638.6,554.3"/><polyline points="652.5,343.0 646.4,359.1 632.8,368.1 623.5,378.9 613.3,395.2"/><polyline points="1574.1,386.9 1575.3,404.5 1578.0,417.8 1575.4,427.6 1579.5,445.7"/><polyline points="1728.7,439.2 1735.9,449.5 1736.1,466.7 1738.5,472.3 1746.3,486.9"/><polyline points="761.0,962.4 772.8,966.9 787.1,971.0 796.3,971.2 812.4,973.1"/><polyline points="1694.4,816.2 1699.3,828.0 1698.7,843.6 1703.8,855.1 1710.6,863.8"/><polyline points="870.2,177.9 861.5,190.0 855.9,206.0 853.8,225.5 846.2,238.9"/><polyline points="1777.7,263.9 1783.1,270.5 1783.1,278.7 1784.8,289.8 1792.0,297.7"/><polyline points="1446.6,189.3 1460.2,185.9 1467.3,187.6 1477.7,188.9 1490.3,187.0"/><polyline points="1773.8,707.5 1770.9,714.7 1762.7,724.1 1761.3,733.0 1759.3,746.0"/><polyline points="1559.0,365.9 1570.5,365.5 1575.7,368.0 1586.6,365.9 1594.0,370.2"/><polyline points="1858.6,884.3 1860.1,890.7 1863.9,901.1 1861.5,909.1 1863.1,919.9"/><polyline points="1002.7,237.8 1002.6,248.4 1001.3,259.9 1005.5,277.5 1003.7,288.9"/><polyline points="1795.1,613.0 1797.7,621.3 1807.2,635.8 1813.5,642.0 1818.6,651.1"/><polyline points="1673.3,516.0 1686.9,513.3 1694.5,505.7 1709.0,500.0 1717.0,494.9"/><polyline points="965.5,933.1 973.9,931.8 972.9,934.2 983.4,929.9 987.1,928.8"/><polyline points="387.1,832.7 398.5,843.3 404.8,850.0 408.5,859.3 419.7,865.5"/><polyline points="970.6,469.8 954.4,480.7 947.3,486.4 927.0,490.3 916.4,498.0"/><polyline points="457.8,256.4 468.1,265.2 474.6,275.9 479.7,282.2 483.4,293.4"/><polyline points="521.0,626.8 537.9,637.4 544.9,640.5 561.2,647.3 575.7,655.9"/><polyline points="1773.1,288.1 1776.0,290.1 1785.6,295.2 1788.3,295.5 1792.0,297.7"/><polyline points="1209.3,216.6 1211.5,223.3 1212.2,232.0 1219.9,242.1 1220.6,245.9"/><polyline points="622.4,313.7 633.3,321.5 634.3,326.6 645.2,334.4 652.5,343.0"/><polyline points="1795.3,206.9 1807.0,202.4 1820.1,200.7 1828.9,194.6 1845.1,192.9"/><polyline points="1310.0,810.7 1294.9,822.6 1287.1,829.1 1276.4,842.5 1261.1,854.9"/><polyline points="1252.6,199.8 1247.0,212.9 1249.0,225.2 1238.3,235.7 1238.7,244.3"/><polyline points="1379.0,263.5 1369.3,268.2 1362.6,277.9 1351.3,285.8 1346.4,289.2"/><polyline points="1246.8,562.8 1237.0,576.9 1232.6,585.9 1224.3,592.9 1219.2,603.9"/><polyline points="753.7,366.3 763.4,370.1 768.4,381.6 781.1,387.4 787.6,391.7"/><polyline points="415.1,498.5 429.3,503.0 437.7,499.7 447.2,504.5 459.9,506.4"/><polyline points="817.2,704.7 820.9,719.1 833.5,724.2 834.6,742.3 843.7,751.3"/><polyline points="467.5,301.7 474.2,297.6 475.1,300.9 481.1,293.7 483.4,293.4"/><polyline points="1457.4,522.0 1457.8,529.1 1454.1,533.0 1447.0,542.1 1448.5,550.1"/><polyline points="456.3,420.6 466.0,415.8 477.3,416.9 482.2,411.3 492.4,411.8"/><polyline points="1386.9,257.9 1390.7,271.8 1389.7,280.1 1388.0,291.0 1389.5,305.7"/><polyline points="1508.2,419.4 1507.1,435.6 1507.6,445.4 1504.4,454.9 1501.2,469.1"/><polyline points="1494.1,755.1 1487.3,763.1 1484.3,780.9 1472.1,793.8 1470.0,802.3"/><polyline points="664.4,703.7 676.9,706.2 683.1,705.0 700.8,707.1 709.7,710.4"/><polyline points="618.8,469.0 636.2,463.6 645.5,455.0 658.6,447.5 673.5,443.0"/><polyline points="1022.5,673.0 1027.4,681.2 1035.5,685.7 1035.0,693.4 1043.4,700.1"/><polyline points="572.8,181.2 581.5,183.3 586.6,181.2 595.8,177.8 602.3,178.9"/><polyline points="746.4,877.2 757.3,875.1 778.4,881.2 791.5,879.6 802.7,882.9"/><polyline points="703.3,589.8 716.4,599.5 724.5,600.1 739.7,612.5 749.0,615.9"/><polyline points="652.5,343.0 665.6,351.8 674.6,357.1 685.9,364.1 695.1,368.7"/><polyline points="1066.9,557.5 1073.3,573.1 1075.3,580.0 1081.6,588.5 1087.6,603.9"/><polyline points="778.2,423.0 782.2,415.8 780.4,409.2 783.1,399.8 787.6,391.7"/><polyline points="817.0,780.7 825.9,776.6 831.7,766.0 839.8,761.3 843.7,751.3"/><polyline points="1768.4,619.4 1767.4,630.8 1757.2,644.3 1754.6,663.8 1752.6,675.3"/><polyline points="1713.6,358.8 1716.2,365.0 1716.0,374.9 1711.7,383.8 1715.4,393.7"/><polyline points="722.6,241.6 734.7,240.9 745.2,241.9 751.1,242.4 763.1,244.9"/><polyline points="923.1,914.7 936.5,919.0 947.2,924.5 958.4,925.0 965.5,933.1"/><polyline points="1852.1,752.8 1856.7,764.3 1858.1,774.9 1855.1,783.8 1858.2,798.9"/><polyline points="869.0,654.0 880.5,651.3 883.9,653.7 895.5,657.9 903.6,654.9"/><polyline points="1798.5,504.9 1801.9,518.5 1807.7,537.3 1809.6,551.1 1813.4,565.1"/><polyline points="1694.4,816.2 1687.1,829.0 1681.1,837.9 1682.5,848.8 1675.7,863.2"/><polyline points="1777.7,263.9 1778.7,269.8 1777.5,272.7 1775.2,283.1 1773.1,288.1"/><polyline points="1856.6,299.1 1857.7,317.2 1859.4,324.2 1859.8,341.2 1864.1,356.6"/><polyline points="949.4,821.9 957.6,823.0 976.3,824.5 987.1,830.5 997.8,832.0"/><polyline points="914.1,576.8 923.9,578.0 936.4,573.1 948.4,576.4 961.1,575.3"/><polyline points="1841.2,418.5 1838.9,429.5 1840.3,433.6 1844.1,444.4 1842.7,451.9"/><polyline points="868.3,285.6 876.3,292.9 890.9,292.7 899.5,297.1 905.7,302.4"/><polyline points="972.3,338.5 978.3,342.5 992.7,338.6 995.7,341.7 1006.5,340.4"/><polyline points="426.6,254.7 421.2,268.4 422.3,275.7 418.1,291.4 416.6,302.0"/><polyline points="1008.7,721.9 1013.6,719.5 1024.1,711.3 1031.1,709.5 1043.4,700.1"/><polyline points="448.7,618.8 447.3,625.6 439.5,631.5 440.0,634.6 438.0,641.1"/><polyline points="970.6,469.8 974.9,468.2 975.6,468.5 983.3,463.9 986.2,464.0"/><polyline points="1858.6,884.3 1847.5,891.2 1832.0,896.2 1818.5,903.5 1809.0,906.4"/><polyline points="415.2,358.7 408.6,372.4 405.3,379.6 401.8,392.2 401.5,406.5"/><polyline points="920.2,205.6 925.2,198.3 935.2,192.4 944.1,187.7 949.9,183.9"/><polyline points="454.7,721.8 456.6,728.2 463.5,738.1 470.1,737.1 477.0,747.6"/><polyline points="1109.7,867.3 1122.6,868.3 1135.3,864.2 1141.3,857.4 1155.6,858.4"/><polyline points="1041.2,607.2 1052.9,608.1 1061.2,603.6 1073.9,608.6 1087.6,603.9"/><polyline points="500.4,509.0 499.9,518.2 499.6,525.4 500.3,535.9 505.2,547.1"/><polyline points="1006.5,340.4 1020.5,337.3 1031.6,334.0 1043.4,332.1 1052.9,334.2"/><polyline points="1117.6,951.9 1128.2,959.8 1130.5,963.9 1140.3,972.6 1148.6,978.2"/><polyline points="576.7,855.3 573.1,865.6 566.0,879.9 556.1,899.7 550.3,909.6"/><polyline points="521.0,626.8 513.2,636.0 511.9,649.4 504.3,659.4 497.1,667.2"/><polyline points="1166.5,761.0 1175.8,767.2 1187.7,773.9 1200.9,774.4 1216.0,779.8"/><polyline points="1155.6,858.4 1166.0,864.6 1176.3,863.4 1183.5,868.6 1194.1,873.5"/><polyline points="1079.1,249.4 1077.9,246.3 1087.0,244.0 1083.9,238.9 1089.4,230.9"/><polyline points="1510.9,831.3 1514.7,839.2 1521.1,846.6 1530.2,858.7 1538.5,865.7"/><polyline points="1218.0,678.7 1226.9,679.2 1233.5,676.1 1244.2,675.3 1247.8,672.4"/><polyline points="638.6,554.3 638.6,565.3 642.7,572.7 643.7,584.7 643.6,597.5"/><polyline points="1171.5,395.2 1181.2,403.0 1192.3,410.7 1204.6,418.3 1214.9,420.7"/><polyline points="687.1,922.2 685.9,937.9 689.1,954.0 697.1,968.7 696.7,980.3"/><polyline points="622.4,313.7 611.4,322.7 605.2,335.5 596.1,338.5 592.1,349.8"/><polyline points="1216.0,779.8 1230.8,776.0 1241.2,773.5 1259.3,770.4 1270.6,767.8"/><polyline points="664.3,665.2 667.2,674.4 661.3,684.4 665.6,690.9 664.4,703.7"/><polyline points="1310.0,810.7 1317.9,810.7 1323.2,806.4 1336.7,810.1 1344.5,808.7"/><polyline points="1575.3,714.4 1579.9,722.8 1585.2,732.5 1597.3,738.3 1599.8,747.8"/><polyline points="1296.7,933.5 1304.6,926.7 1319.2,924.9 1332.0,919.7 1342.5,915.4"/><polyline points="1205.0,301.1 1215.3,299.9 1220.0,297.4 1230.0,291.1 1241.2,289.4"/><polyline points="1602.3,920.4 1599.2,932.5 1589.1,937.4 1586.7,941.9 1579.3,953.9"/><polyline points="760.0,819.6 753.9,831.1 754.9,850.1 746.7,863.7 746.4,877.2"/><polyline points="691.8,575.6 692.2,582.6 696.7,582.4 702.7,588.0 703.3,589.8"/><polyline points="824.7,247.4 832.4,256.3 849.9,269.2 858.1,278.2 868.3,285.6"/><polyline points="1728.9,762.8 1736.7,772.9 1749.0,777.5 1753.6,789.4 1761.9,797.9"/><polyline points="1430.4,602.7 1435.5,610.5 1450.5,611.2 1456.6,619.0 1465.2,619.9"/><polyline points="848.4,519.9 847.4,532.9 853.4,541.6 852.2,557.8 854.7,569.4"/><polyline points="1472.1,978.2 1482.5,971.9 1485.9,969.4 1497.6,961.3 1501.7,952.9"/><polyline points="1429.3,713.6 1437.0,713.0 1452.0,704.7 1454.8,700.1 1467.3,696.5"/><polyline points="957.2,653.7 955.3,666.3 948.7,676.6 949.7,687.3 943.4,696.2"/><polyline points="1529.9,865.4 1535.5,866.5 1531.8,866.5 1534.7,864.3 1538.5,865.7"/><polyline points="1048.2,911.9 1051.2,930.7 1052.6,945.4 1053.1,958.2 1054.6,971.5"/><polyline points="1569.9,765.6 1575.9,758.1 1583.6,756.5 1592.9,753.6 1599.8,747.8"/><polyline points="1022.5,673.0 1018.4,687.2 1018.3,695.7 1014.9,712.1 1008.7,721.9"/><polyline points="1664.0,803.8 1671.8,803.1 1676.4,811.4 1684.4,815.1 1694.4,816.2"/><polyline points="1106.7,720.4 1101.2,731.4 1099.2,748.5 1099.9,756.8 1095.6,771.1"/><polyline points="1665.4,913.9 1675.7,914.4 1684.4,919.1 1693.1,928.5 1698.4,930.7"/><polyline points="870.2,177.9 885.6,186.8 895.7,189.7 910.0,201.1 920.2,205.6"/><polyline points="1178.6,712.4 1173.8,725.9 1175.9,735.8 1173.2,752.6 1166.5,761.0"/><polyline points="1261.1,854.9 1262.9,872.0 1263.8,886.3 1271.9,907.3 1274.2,921.7"/><polyline points="1773.8,707.5 1781.0,712.4 1785.7,713.7 1787.9,716.4 1791.0,716.6"/><polyline points="1274.2,921.7 1280.2,925.5 1287.7,931.3 1289.4,927.9 1296.7,933.5"/><polyline points="1856.6,299.1 1850.6,307.2 1839.1,320.5 1833.3,330.5 1826.9,341.7"/><polyline points="1315.2,780.2 1314.3,784.8 1313.2,793.5 1309.9,804.8 1310.0,810.7"/><polyline points="1841.2,418.5 1835.7,422.4 1834.2,428.3 1836.3,439.4 1830.1,445.2"/><polyline points="387.1,832.7 409.1,828.7 429.1,823.8 451.6,819.6 470.0,817.2"/><polyline points="534.4,317.6 541.5,321.1 549.5,329.7 561.6,336.0 571.5,341.8"/><polyline points="1355.4,669.3 1353.2,675.3 1355.3,684.5 1357.6,691.9 1359.8,702.4"/><polyline points="1179.4,306.4 1187.8,305.4 1196.2,306.4 1202.5,298.5 1205.0,301.1"/><polyline points="1578.7,596.7 1586.3,607.4 1594.5,619.8 1598.5,633.7 1603.8,641.2"/><polyline points="1209.3,216.6 1221.6,211.0 1234.3,211.8 1240.9,204.3 1252.6,199.8"/><polyline points="544.1,399.0 528.8,412.5 519.6,418.3 505.9,429.1 489.9,439.7"/><polyline points="1667.6,770.8 1670.6,785.3 1678.5,793.6 1691.3,802.2 1694.4,816.2"/><polyline points="1310.5,360.5 1322.3,356.6 1322.9,348.6 1336.3,350.1 1343.1,343.7"/><polyline points="1379.0,263.5 1383.9,261.5 1379.8,261.0 1386.6,263.1 1386.9,257.9"/><polyline points="1780.3,441.7 1787.0,458.7 1792.9,475.3 1791.2,488.8 1798.5,504.9"/><polyline points="1756.1,573.5 1764.5,580.1 1772.0,595.6 1785.8,603.7 1795.1,613.0"/><polyline points="1708.2,311.8 1716.0,316.1 1727.2,325.3 1737.5,326.5 1747.9,336.6"/><polyline points="923.5,418.4 924.7,432.5 924.3,446.9 925.0,460.5 922.8,473.6"/><polyline points="1830.1,445.2 1843.0,452.7 1856.1,463.9 1866.3,476.3 1875.3,488.9"/><polyline points="1524.6,283.3 1527.0,291.4 1535.5,294.4 1543.0,301.0 1547.4,307.2"/><polyline points="1766.1,202.1 1775.1,212.3 1782.6,230.7 1792.6,245.2 1800.9,254.6"/><polyline points="1838.4,678.0 1823.7,689.1 1818.0,699.7 1804.7,705.9 1791.0,716.6"/><polyline points="461.8,931.0 473.9,941.4 479.1,948.0 483.1,961.7 495.5,970.9"/><polyline points="419.1,678.7 428.3,693.0 435.4,702.2 449.1,709.7 454.7,721.8"/><polyline points="946.6,315.3 952.3,322.3 959.5,324.2 963.6,335.4 972.3,338.5"/><polyline points="1541.4,188.8 1557.3,187.1 1580.6,193.4 1599.4,194.9 1615.1,192.3"/><polyline points="1618.2,539.9 1631.4,544.4 1637.1,547.8 1642.5,551.0 1655.2,559.0"/><polyline points="1049.9,471.8 1049.4,479.4 1044.0,484.3 1044.3,491.8 1040.9,502.8"/><polyline points="1547.4,307.2 1560.6,305.0 1570.5,296.1 1585.2,289.5 1596.5,285.7"/><polyline points="1027.2,191.2 1021.7,203.3 1013.8,213.0 1008.2,222.2 1002.7,237.8"/><polyline points="520.9,931.3 529.6,940.8 544.3,954.2 555.8,963.5 563.8,978.1"/><polyline points="1728.8,710.5 1741.9,712.8 1751.0,707.9 1761.0,708.6 1773.8,707.5"/><polyline points="1680.4,456.0 1689.9,452.7 1707.3,450.5 1713.8,443.7 1728.7,439.2"/><polyline points="1102.1,371.2 1103.2,377.4 1104.8,374.0 1107.3,380.5 1114.2,383.5"/><polyline points="1615.1,192.3 1620.9,191.4 1633.5,189.9 1647.2,188.0 1653.5,186.1"/><polyline points="1768.4,619.4 1775.4,621.8 1781.5,618.4 1787.4,612.4 1795.1,613.0"/><polyline points="1199.0,507.9 1203.1,519.7 1201.1,527.5 1204.8,536.9 1206.6,547.7"/><polyline points="1713.6,358.8 1722.2,354.6 1733.5,350.2 1740.3,339.5 1747.9,336.6"/><polyline points="1309.8,659.4 1305.9,667.1 1299.3,679.3 1299.2,687.6 1294.0,692.0"/><polyline points="1777.7,263.9 1785.4,261.4 1788.2,257.0 1795.0,253.4 1800.9,254.6"/><polyline points="1274.3,468.9 1278.6,464.8 1282.7,471.3 1289.4,467.4 1295.9,467.2"/><polyline points="695.1,368.7 692.8,373.3 695.0,383.7 690.9,393.5 687.3,401.5"/><polyline points="1322.6,202.4 1327.0,217.1 1324.4,226.7 1325.5,239.5 1329.9,250.2"/><polyline points="386.9,720.2 402.7,721.8 423.5,721.1 436.8,724.6 454.7,721.8"/><polyline points="1301.0,304.0 1303.5,316.9 1308.7,332.2 1308.0,347.2 1310.5,360.5"/><polyline points="426.6,254.7 434.4,252.2 439.5,252.2 451.1,253.7 457.8,256.4"/><polyline points="1421.4,443.7 1415.0,455.3 1415.4,466.0 1407.6,484.3 1405.9,494.5"/><polyline points="415.2,358.7 432.3,352.8 445.7,344.9 458.5,344.2 476.6,335.7"/><polyline points="568.4,751.8 574.1,750.4 588.1,753.6 598.2,754.9 606.7,760.8"/><polyline points="1515.4,618.9 1518.5,623.0 1518.6,631.8 1526.7,642.9 1525.5,649.8"/><polyline points="500.4,509.0 512.0,506.5 524.3,512.9 532.0,509.7 544.8,514.3"/><polyline points="534.4,317.6 525.7,328.5 520.7,328.9 512.1,339.2 501.1,345.4"/><polyline points="1460.4,361.7 1463.8,372.3 1459.9,379.0 1461.6,387.5 1464.5,393.7"/><polyline points="1464.5,393.7 1474.2,399.8 1487.1,404.4 1496.4,409.9 1508.2,419.4"/><polyline points="1613.1,880.4 1608.0,893.2 1607.7,899.8 1602.2,907.2 1602.3,920.4"/><polyline points="1498.5,254.7 1504.8,262.8 1507.8,271.3 1518.1,273.1 1524.6,283.3"/><polyline points="1674.7,647.3 1667.2,655.9 1660.9,673.0 1655.9,684.2 1645.4,693.5"/><polyline points="638.6,554.3 653.1,559.8 664.2,561.3 678.8,568.1 691.8,575.6"/><polyline points="622.4,313.7 631.1,308.3 634.0,298.9 643.1,292.6 647.4,282.8"/><polyline points="1160.5,928.6 1170.3,931.7 1174.1,940.9 1183.1,950.2 1193.5,953.6"/><polyline points="1705.7,545.6 1705.6,561.6 1708.2,569.0 1712.3,586.8 1712.2,597.4"/><polyline points="1678.4,303.3 1669.6,309.2 1655.7,322.5 1651.7,328.8 1640.8,339.2"/><polyline points="643.5,197.9 652.9,192.1 665.6,189.8 677.7,188.1 685.3,185.6"/><polyline points="802.2,595.3 814.4,593.1 830.1,596.6 841.2,596.4 855.1,593.8"/><polyline points="864.4,977.1 876.6,977.3 889.5,977.5 899.9,979.4 913.8,981.8"/><polyline points="1831.4,830.7 1829.3,837.8 1826.8,842.5 1822.3,846.1 1816.6,851.7"/><polyline points="1699.2,215.2 1703.3,217.7 1702.0,224.9 1705.6,231.3 1709.4,236.2"/><polyline points="1816.6,851.7 1828.6,861.5 1834.9,871.8 1844.1,872.9 1858.6,884.3"/><polyline points="913.8,749.1 918.2,751.7 927.7,744.0 933.1,743.3 942.6,745.8"/><polyline points="1270.6,767.8 1269.1,780.1 1278.9,795.1 1277.4,809.0 1279.4,820.5"/><polyline points="1826.9,341.7 1822.6,355.7 1819.3,363.7 1811.2,370.7 1806.6,383.6"/><polyline points="1840.3,697.4 1844.5,713.7 1844.5,721.4 1849.9,739.1 1852.1,752.8"/><polyline points="1342.5,915.4 1348.0,923.5 1354.0,934.9 1361.2,945.0 1372.8,958.6"/><polyline points="1279.4,820.5 1293.6,829.4 1298.6,833.1 1310.7,840.7 1320.2,847.3"/><polyline points="411.2,178.7 424.7,194.7 431.2,215.8 448.8,240.3 457.8,256.4"/><polyline points="401.3,562.5 399.7,572.8 398.8,576.6 397.8,585.8 399.8,588.9"/><polyline points="461.8,931.0 466.1,940.0 468.3,949.7 469.2,962.1 476.3,974.6"/><polyline points="476.3,974.6 484.7,976.1 489.5,975.8 493.2,972.5 495.5,970.9"/><polyline points="1419.7,819.2 1421.9,833.4 1421.4,842.3 1423.6,854.2 1422.1,861.0"/><polyline points="1024.3,561.8 1034.6,560.4 1046.3,555.9 1053.2,555.1 1066.9,557.5"/><polyline points="1048.2,911.9 1060.1,917.4 1071.4,912.9 1079.4,920.3 1091.8,918.2"/><polyline points="1467.3,696.5 1468.8,704.9 1472.8,719.1 1468.3,734.8 1473.0,745.7"/><polyline points="552.0,618.6 560.5,624.5 567.3,637.1 568.6,649.7 575.7,655.9"/><polyline points="1105.4,806.8 1114.7,816.9 1129.1,823.2 1138.7,824.0 1149.8,833.0"/><polyline points="647.8,413.3 661.5,422.6 669.1,423.6 681.3,433.3 695.1,438.7"/><polyline points="555.2,723.2 555.7,727.2 565.1,738.9 566.4,745.6 568.4,751.8"/><polyline points="1538.5,865.7 1542.0,878.2 1537.5,890.0 1543.5,902.3 1543.9,914.6"/><polyline points="674.5,865.9 677.8,877.2 676.3,882.1 676.7,893.6 672.3,898.4"/><polyline points="672.3,898.4 674.2,902.1 680.3,906.7 685.8,916.1 687.1,922.2"/><polyline points="722.7,318.3 730.8,330.3 737.4,343.8 743.4,358.1 753.7,366.3"/><polyline points="727.6,755.0 728.4,766.3 727.5,774.3 722.9,790.5 724.4,801.4"/><polyline points="724.4,801.4 731.9,806.9 740.3,810.9 749.0,814.8 760.0,819.6"/><polyline points="1698.4,930.7 1707.2,942.1 1714.2,953.3 1723.7,967.0 1730.0,980.5"/><polyline points="1315.2,780.2 1328.0,774.5 1332.5,769.4 1345.6,766.3 1355.0,764.6"/><polyline points="812.4,973.1 822.2,972.3 836.3,974.6 850.5,973.3 864.4,977.1"/><polyline points="771.7,664.1 771.8,672.4 767.1,683.7 761.1,701.3 757.6,708.5"/><polyline points="1397.6,907.2 1410.2,912.8 1419.1,920.4 1425.5,924.1 1437.0,929.1"/><polyline points="856.9,878.4 867.5,872.4 878.6,864.4 889.6,862.5 897.2,857.5"/><polyline points="1791.0,716.6 1791.7,727.1 1788.9,737.2 1790.4,752.7 1789.5,760.1"/><polyline points="846.3,420.5 833.3,426.4 821.2,442.9 817.0,447.3 802.3,459.4"/><polyline points="927.4,368.9 933.9,375.2 936.7,381.4 944.1,385.7 951.2,389.5"/><polyline points="1515.4,618.9 1504.8,626.9 1497.4,630.2 1482.0,638.4 1473.1,643.5"/><polyline points="602.3,178.9 609.8,181.0 625.4,187.1 634.3,193.7 643.5,197.9"/><polyline points="895.8,696.3 903.1,706.0 902.1,720.5 907.8,734.2 913.8,749.1"/><polyline points="398.0,924.6 403.3,934.7 410.5,941.9 422.5,950.2 426.8,960.1"/><polyline points="961.1,575.3 949.6,582.7 935.9,580.0 920.6,588.0 912.1,589.8"/><polyline points="1579.3,953.9 1593.2,964.7 1606.1,965.0 1614.4,972.3 1629.6,982.7"/><polyline points="1122.0,559.2 1124.2,572.9 1133.8,576.7 1138.3,593.2 1144.9,601.8"/><polyline points="470.0,817.2 465.4,827.5 464.6,842.8 469.2,852.2 464.8,865.9"/><polyline points="1071.0,816.2 1077.6,812.1 1089.2,808.5 1099.5,805.4 1105.4,806.8"/><polyline points="1122.7,201.8 1128.4,217.8 1130.2,227.8 1139.8,241.4 1140.4,254.2"/><polyline points="1175.1,567.1 1184.3,575.8 1200.9,587.0 1205.6,595.4 1219.2,603.9"/><polyline points="1160.5,928.6 1158.6,942.1 1155.0,953.6 1152.7,964.3 1148.6,978.2"/><polyline points="1148.6,978.2 1158.6,972.4 1173.5,965.4 1181.2,957.8 1193.5,953.6"/><polyline points="905.7,302.4 914.3,301.7 928.6,311.7 935.1,311.9 946.6,315.3"/><polyline points="1369.0,873.8 1372.2,885.5 1386.9,890.3 1386.5,898.2 1397.6,907.2"/><polyline points="653.4,777.2 652.0,785.8 650.1,797.7 653.6,810.0 654.6,820.2"/><polyline points="923.5,418.4 929.6,408.4 939.2,403.0 943.3,394.8 951.2,389.5"/><polyline points="1278.0,371.6 1280.6,378.0 1286.5,391.8 1290.1,398.4 1290.8,405.3"/><polyline points="1344.5,808.7 1336.7,820.3 1334.8,827.3 1329.1,835.1 1320.2,847.3"/><polyline points="774.8,936.8 769.6,944.3 768.8,947.8 765.4,953.5 761.0,962.4"/><polyline points="1414.9,779.1 1424.8,781.3 1442.7,788.2 1453.1,794.7 1470.0,802.3"/><polyline points="1329.9,250.2 1335.7,261.8 1336.0,266.9 1342.2,278.2 1346.4,289.2"/><polyline points="1089.4,230.9 1100.7,239.1 1118.9,242.3 1130.0,247.0 1140.4,254.2"/><polyline points="1199.0,507.9 1211.0,508.9 1213.9,504.8 1223.3,499.8 1235.9,497.4"/><polyline points="647.8,413.3 651.8,423.4 663.2,430.7 664.0,437.7 673.5,443.0"/><polyline points="673.5,443.0 676.9,444.1 683.8,442.7 685.9,439.4 695.1,438.7"/><polyline points="749.0,615.9 764.5,610.9 779.5,605.4 790.4,598.9 802.2,595.3"/><polyline points="722.7,318.3 714.4,332.0 705.2,347.0 702.2,354.2 695.1,368.7"/><polyline points="1322.6,202.4 1336.6,199.6 1351.5,204.5 1359.0,198.1 1374.2,200.8"/><polyline points="1363.8,548.3 1371.4,547.0 1374.2,546.7 1380.3,550.9 1389.8,548.7"/><polyline points="802.3,459.4 801.2,465.7 810.2,479.1 811.6,488.2 813.6,499.1"/><polyline points="813.6,499.1 819.0,501.6 827.8,510.5 843.2,518.7 848.4,519.9"/><polyline points="1698.4,930.7 1692.1,941.4 1684.9,960.7 1678.8,970.3 1669.1,987.5"/><polyline points="762.8,199.5 760.8,214.7 765.3,224.2 765.5,233.0 763.1,244.9"/><polyline points="1421.4,443.7 1423.0,444.8 1428.4,440.1 1436.8,442.5 1437.6,442.3"/><polyline points="1818.6,651.1 1823.5,661.0 1831.0,671.8 1832.4,684.6 1840.3,697.4"/><polyline points="1875.3,488.9 1877.2,506.8 1878.1,531.7 1876.0,544.7 1875.6,567.9"/><polyline points="1800.9,254.6 1795.9,263.8 1794.6,275.1 1790.2,288.0 1792.0,297.7"/><polyline points="1460.4,361.7 1466.7,357.6 1471.0,361.3 1484.3,354.7 1489.3,355.2"/><polyline points="909.5,239.6 910.3,256.6 907.9,270.1 906.8,286.7 905.7,302.4"/><polyline points="422.9,456.4 421.3,467.8 417.6,478.6 414.0,488.1 415.1,498.5"/><polyline points="1674.7,647.3 1676.7,656.2 1682.8,662.6 1688.9,665.7 1696.7,672.0"/><polyline points="1122.0,559.2 1110.2,571.0 1107.5,582.8 1096.4,594.3 1087.6,603.9"/><polyline points="1605.7,394.3 1611.7,398.1 1622.4,400.7 1632.9,406.8 1637.4,414.0"/><polyline points="1059.0,309.6 1057.4,318.9 1052.6,324.3 1050.9,328.5 1052.9,334.2"/><polyline points="1052.9,334.2 1068.7,342.8 1076.4,354.4 1092.4,360.1 1102.1,371.2"/><polyline points="544.8,514.3 545.5,516.7 552.1,529.5 561.7,528.5 562.4,537.5"/><polyline points="520.5,260.1 513.0,268.7 499.5,277.0 490.7,286.1 483.4,293.4"/><polyline points="1678.4,303.3 1683.3,307.4 1692.6,304.4 1701.9,308.6 1708.2,311.8"/><polyline points="1175.3,510.6 1180.9,511.2 1190.2,506.5 1190.5,507.7 1199.0,507.9"/><polyline points="1122.7,201.8 1113.1,206.4 1110.0,215.9 1096.6,222.2 1089.4,230.9"/><polyline points="615.4,927.3 629.4,940.2 634.5,958.0 645.1,972.0 655.8,984.5"/><polyline points="1214.9,420.7 1222.5,413.0 1226.1,406.4 1238.5,394.1 1241.8,387.8"/><polyline points="647.4,282.8 652.4,297.4 649.1,314.7 655.1,328.7 652.5,343.0"/><polyline points="1270.6,767.8 1281.9,774.8 1291.3,772.4 1301.8,779.9 1315.2,780.2"/><polyline points="688.6,671.0 690.0,683.4 700.6,688.9 704.8,701.0 709.7,710.4"/><polyline points="1826.9,341.7 1839.6,342.6 1841.8,348.0 1851.9,351.8 1864.1,356.6"/><polyline points="1319.8,558.2 1331.4,553.6 1344.3,550.0 1352.0,554.1 1363.8,548.3"/><polyline points="1369.0,873.8 1364.3,886.0 1358.1,892.0 1351.8,906.5 1342.5,915.4"/><polyline points="768.6,469.9 764.6,477.9 760.2,477.7 756.7,484.6 750.3,488.7"/><polyline points="685.3,185.6 691.2,196.1 706.1,212.4 715.8,227.0 722.6,241.6"/><polyline points="401.3,562.5 414.4,566.1 419.4,565.1 432.5,560.6 441.8,565.2"/><polyline points="1348.2,407.4 1352.5,416.3 1350.8,423.4 1354.8,434.1 1356.5,446.8"/><polyline points="808.6,333.8 803.4,346.1 794.5,364.6 792.0,376.8 787.6,391.7"/><polyline points="802.7,882.9 812.5,892.8 818.6,900.9 829.0,909.5 838.9,922.3"/><polyline points="470.0,457.9 471.6,453.9 476.3,448.0 481.6,444.2 489.9,439.7"/><polyline points="1526.4,924.0 1522.4,928.3 1511.1,939.0 1507.7,946.9 1501.7,952.9"/><polyline points="1429.0,355.0 1434.5,357.6 1446.6,356.3 1449.2,362.3 1460.4,361.7"/><polyline points="846.2,238.9 850.3,254.0 854.0,263.6 862.2,272.7 868.3,285.6"/><polyline points="1501.2,469.1 1504.9,475.8 1507.7,479.4 1520.5,487.8 1521.8,492.7"/><polyline points="1521.8,492.7 1530.4,495.7 1528.4,496.0 1538.5,500.7 1540.6,506.6"/><polyline points="1673.3,516.0 1680.4,525.4 1692.3,527.7 1694.0,541.8 1705.7,545.6"/><polyline points="1466.6,250.5 1478.0,254.5 1485.1,248.7 1492.1,250.6 1498.5,254.7"/><polyline points="1574.1,386.9 1581.6,384.9 1587.6,390.9 1595.5,392.6 1605.7,394.3"/><polyline points="1091.8,918.2 1096.3,926.5 1106.6,932.2 1112.8,939.6 1117.6,951.9"/><polyline points="1039.9,678.5 1041.4,685.2 1038.0,686.7 1040.8,697.0 1043.4,700.1"/><polyline points="1698.4,930.7 1711.3,922.6 1723.6,917.6 1733.5,915.1 1746.3,912.3"/><polyline points="1863.1,919.9 1864.6,935.0 1863.4,943.7 1862.2,962.6 1857.9,975.2"/><polyline points="1800.9,254.6 1791.8,262.0 1790.8,268.1 1778.6,282.6 1773.1,288.1"/><polyline points="454.7,721.8 443.3,727.6 431.3,738.0 423.0,742.8 407.8,755.0"/><polyline points="1355.0,764.6 1350.3,775.8 1348.4,785.8 1344.4,796.4 1344.5,808.7"/><polyline points="1653.5,186.1 1663.8,194.3 1674.2,204.4 1687.8,210.4 1699.2,215.2"/><polyline points="547.1,470.5 557.3,486.7 568.6,499.3 570.9,510.3 583.8,523.0"/><polyline points="470.0,817.2 482.1,818.7 500.8,826.9 508.1,829.0 525.3,834.2"/><polyline points="515.8,204.8 526.5,212.1 530.7,215.4 534.6,221.2 543.7,230.3"/><polyline points="1398.2,674.1 1409.8,687.3 1412.4,694.2 1419.2,700.8 1429.3,713.6"/><polyline points="563.8,978.1 569.6,979.1 577.7,973.8 582.0,974.1 585.9,972.6"/><polyline points="1510.9,831.3 1512.7,843.8 1524.2,845.5 1528.6,860.2 1529.9,865.4"/><polyline points="513.8,717.3 522.7,719.2 538.1,717.2 543.4,724.7 555.2,723.2"/><polyline points="544.8,514.3 536.7,524.6 528.0,530.0 514.4,538.4 505.2,547.1"/><polyline points="1160.5,928.6 1172.1,924.7 1180.3,912.6 1187.3,904.1 1193.2,900.1"/><polyline points="687.1,922.2 676.7,939.9 672.3,951.5 664.1,966.8 655.8,984.5"/><polyline points="1252.6,199.8 1267.9,201.9 1286.4,202.6 1304.9,201.8 1322.6,202.4"/><polyline points="1575.3,714.4 1574.8,728.9 1571.6,742.8 1571.2,749.9 1569.9,765.6"/><polyline points="643.5,197.9 629.6,204.6 622.7,215.0 607.3,228.6 597.6,239.8"/><polyline points="778.2,423.0 786.1,436.0 792.3,437.7 799.7,454.2 802.3,459.4"/><polyline points="1675.7,863.2 1676.1,875.8 1669.1,888.2 1665.9,900.5 1665.4,913.9"/><polyline points="817.0,780.7 821.5,789.3 832.5,792.6 842.6,802.8 849.9,807.5"/><polyline points="1588.0,594.8 1592.7,606.6 1598.9,620.3 1600.0,629.2 1603.8,641.2"/><polyline points="688.6,671.0 685.1,675.5 680.4,687.5 669.6,697.4 664.4,703.7"/><polyline points="1642.8,615.5 1633.5,622.0 1624.3,624.7 1611.8,634.0 1603.8,641.2"/><polyline points="922.8,473.6 927.7,483.4 935.3,487.3 943.0,491.5 948.5,502.3"/><polyline points="1809.0,906.4 1804.0,919.4 1801.3,937.7 1795.3,950.8 1788.4,969.8"/><polyline points="1841.2,418.5 1852.0,439.6 1859.8,450.8 1866.1,470.9 1875.3,488.9"/><polyline points="960.7,885.5 948.8,893.5 943.6,897.7 932.2,905.4 923.1,914.7"/><polyline points="970.6,469.8 980.2,480.1 989.1,485.5 991.7,487.7 1002.8,497.8"/><polyline points="1673.3,516.0 1668.3,525.6 1664.4,536.6 1662.0,548.4 1655.2,559.0"/><polyline points="757.0,539.3 770.2,546.3 775.3,557.4 789.1,563.8 795.4,571.2"/><polyline points="1715.4,393.7 1720.0,402.2 1725.0,413.9 1727.1,427.2 1728.7,439.2"/><polyline points="1147.3,363.2 1151.8,373.3 1159.0,380.2 1162.4,384.2 1171.5,395.2"/><polyline points="1039.9,678.5 1029.7,690.3 1022.3,699.9 1019.3,711.4 1008.7,721.9"/><polyline points="1218.0,678.7 1220.7,687.2 1229.2,690.3 1237.7,694.4 1244.5,700.5"/><polyline points="1149.8,833.0 1136.4,842.4 1127.7,850.5 1120.7,859.2 1109.7,867.3"/><polyline points="912.1,589.8 924.8,591.5 929.4,601.7 938.5,608.7 952.3,611.3"/><polyline points="1246.8,562.8 1260.7,572.8 1270.4,580.8 1281.0,584.0 1297.2,592.0"/><polyline points="1290.8,405.3 1289.5,422.2 1294.2,437.8 1295.4,454.0 1295.9,467.2"/><polyline points="1800.9,254.6 1814.3,249.4 1833.4,248.4 1845.5,238.4 1864.7,235.2"/><polyline points="716.7,512.8 725.8,518.4 733.4,525.5 747.4,531.0 757.0,539.3"/><polyline points="1235.9,497.4 1225.7,511.5 1219.5,522.8 1214.2,536.7 1206.6,547.7"/><polyline points="422.9,456.4 435.5,453.6 448.3,458.2 462.1,457.4 470.0,457.9"/><polyline points="1397.6,907.2 1392.9,923.5 1389.1,931.2 1379.9,944.3 1372.8,958.6"/><polyline points="1346.4,289.2 1345.7,306.8 1343.5,313.5 1344.4,330.2 1343.1,343.7"/><polyline points="576.7,855.3 585.6,856.7 589.8,859.0 601.9,863.3 608.0,860.9"/><polyline points="521.0,626.8 524.7,621.0 537.5,619.6 547.0,623.0 552.0,618.6"/><polyline points="476.6,335.7 486.7,337.5 487.5,341.1 496.1,339.1 501.1,345.4"/><polyline points="1122.0,559.2 1132.8,559.4 1150.8,561.6 1161.8,563.7 1175.1,567.1"/><polyline points="606.7,760.8 614.5,766.4 628.8,770.8 642.7,769.4 653.4,777.2"/><polyline points="547.1,470.5 544.0,480.1 544.7,493.8 548.7,505.7 544.8,514.3"/><polyline points="544.8,514.3 555.7,516.3 565.3,521.8 574.4,519.5 583.8,523.0"/><polyline points="1437.0,929.1 1435.7,938.1 1431.8,951.0 1424.7,959.8 1422.7,967.6"/><polyline points="1489.3,355.2 1492.5,371.5 1496.4,388.8 1505.9,406.4 1508.2,419.4"/><polyline points="520.5,260.1 525.1,256.4 530.3,241.5 541.7,238.8 543.7,230.3"/><polyline points="1398.2,674.1 1391.3,681.8 1378.1,689.0 1372.3,697.4 1359.8,702.4"/><polyline points="1171.3,445.2 1185.2,442.2 1192.1,441.4 1208.1,438.4 1220.4,438.9"/><polyline points="664.3,665.2 670.0,670.2 674.2,666.5 679.4,671.8 688.6,671.0"/><polyline points="592.1,349.8 599.6,364.4 602.3,368.7 607.9,383.8 613.3,395.2"/><polyline points="613.3,395.2 619.5,403.1 632.4,404.4 641.4,405.9 647.8,413.3"/><polyline points="1614.9,499.3 1618.7,512.1 1620.1,521.0 1614.4,531.5 1618.2,539.9"/><polyline points="1448.5,550.1 1443.7,565.0 1439.7,572.4 1438.4,591.0 1430.4,602.7"/><polyline points="760.0,819.6 772.3,810.8 782.8,805.1 794.7,804.5 806.1,797.8"/><polyline points="1696.7,672.0 1703.3,682.2 1711.3,694.4 1719.4,698.4 1728.8,710.5"/><polyline points="1637.4,414.0 1646.4,423.1 1658.4,432.0 1666.9,443.7 1680.4,456.0"/><polyline points="817.2,704.7 825.4,705.1 841.5,701.1 852.2,701.4 865.5,702.3"/><polyline points="778.2,423.0 772.9,436.4 771.6,444.4 767.5,459.1 768.6,469.9"/><polyline points="768.6,469.9 775.7,466.8 782.5,464.4 795.3,458.9 802.3,459.4"/><polyline points="1756.1,573.5 1755.6,584.4 1759.6,597.2 1766.0,610.6 1768.4,619.4"/><polyline points="1166.7,657.5 1176.2,667.9 1181.0,679.0 1192.0,687.3 1198.2,695.5"/><polyline points="1708.2,311.8 1709.8,327.4 1713.0,335.0 1709.3,349.6 1713.6,358.8"/><polyline points="806.1,797.8 820.4,800.0 827.6,804.2 840.6,804.8 849.9,807.5"/><polyline points="870.2,177.9 877.9,191.1 892.7,209.7 902.9,223.3 909.5,239.6"/><polyline points="1752.6,675.3 1759.5,684.6 1765.5,694.4 1768.1,695.7 1773.8,707.5"/><polyline points="787.5,310.9 792.6,315.4 797.7,319.7 805.5,328.9 808.6,333.8"/><polyline points="913.8,981.8 923.0,979.3 940.7,985.5 949.0,985.0 962.6,984.4"/><polyline points="1766.1,202.1 1771.3,217.8 1771.1,232.3 1775.8,248.8 1777.7,263.9"/><polyline points="865.5,702.3 876.9,699.8 879.4,701.8 889.0,700.0 895.8,696.3"/><polyline points="1813.4,565.1 1808.4,579.4 1804.6,586.9 1801.0,597.6 1795.1,613.0"/><polyline points="942.6,745.8 956.7,750.2 963.8,754.1 974.2,757.5 985.2,760.8"/><polyline points="922.8,473.6 923.8,477.1 923.3,482.3 914.9,494.4 916.4,498.0"/><polyline points="916.4,498.0 926.6,498.1 932.4,501.4 937.2,503.7 948.5,502.3"/><polyline points="419.1,678.7 414.2,692.3 404.1,695.4 392.1,707.0 386.9,720.2"/><polyline points="960.7,885.5 972.5,876.1 984.3,866.1 996.6,858.5 1006.6,851.5"/><polyline points="1022.5,673.0 1027.4,677.6 1029.6,679.3 1035.0,681.0 1039.9,678.5"/><polyline points="441.8,565.2 442.3,575.3 441.3,595.9 446.2,602.4 448.7,618.8"/><polyline points="520.9,931.3 512.9,940.2 508.6,947.6 503.5,963.6 495.5,970.9"/><polyline points="1102.1,371.2 1091.0,387.0 1085.1,394.8 1073.8,409.0 1062.2,422.7"/><polyline points="1179.4,306.4 1184.5,316.1 1191.6,327.9 1200.5,338.0 1205.8,348.7"/><polyline points="1178.6,712.4 1181.0,707.3 1191.8,706.7 1190.5,703.7 1198.2,695.5"/><polyline points="1039.3,181.6 1031.5,192.7 1017.6,205.8 1013.6,223.7 1002.7,237.8"/><polyline points="607.8,612.8 609.1,624.3 608.2,629.1 612.7,635.2 615.2,643.1"/><polyline points="1120.7,469.1 1135.7,464.0 1145.4,454.6 1158.7,451.6 1171.3,445.2"/><polyline points="571.5,341.8 564.2,354.9 555.3,371.2 551.6,387.5 544.1,399.0"/><polyline points="1149.8,833.0 1161.1,828.5 1176.0,824.3 1189.0,823.2 1203.5,814.8"/><polyline points="1209.3,216.6 1217.2,225.2 1220.9,230.3 1232.9,234.5 1238.7,244.3"/><polyline points="1147.3,363.2 1140.8,372.1 1134.6,375.6 1122.2,375.0 1114.2,383.5"/><polyline points="1219.2,603.9 1234.8,605.1 1243.9,614.8 1260.2,614.1 1269.0,622.0"/><polyline points="1241.8,387.8 1237.5,403.0 1229.6,409.8 1224.5,428.3 1220.4,438.9"/><polyline points="657.6,514.7 652.6,524.7 647.9,536.4 642.7,548.1 638.6,554.3"/><polyline points="1259.7,987.2 1274.5,984.9 1280.8,989.4 1299.0,987.2 1309.4,984.9"/><polyline points="722.8,880.1 714.4,887.1 704.7,898.5 692.4,915.6 687.1,922.2"/><polyline points="687.3,401.5 691.7,411.8 689.5,416.8 693.2,432.2 695.1,438.7"/><polyline points="1379.0,263.5 1379.8,271.1 1382.5,287.5 1383.0,292.0 1389.5,305.7"/><polyline points="1269.0,622.0 1273.4,615.2 1280.3,606.5 1292.6,597.6 1297.2,592.0"/><polyline points="795.4,571.2 798.7,577.1 801.2,586.2 799.2,586.0 802.2,595.3"/><polyline points="1355.0,764.6 1367.1,771.7 1382.2,771.8 1403.9,777.7 1414.9,779.1"/><polyline points="789.7,679.4 794.5,685.3 804.6,689.7 812.2,697.1 817.2,704.7"/><polyline points="914.2,828.5 911.1,837.8 902.6,840.3 900.6,848.7 897.2,857.5"/><polyline points="960.6,265.0 973.4,273.0 982.4,276.0 994.6,282.7 1003.7,288.9"/><polyline points="1540.6,506.6 1530.3,518.6 1521.7,528.1 1517.6,535.2 1510.5,542.8"/><polyline points="854.7,569.4 858.5,576.9 851.2,584.9 856.1,591.3 855.1,593.8"/><polyline points="1510.9,831.3 1521.7,832.3 1536.4,825.4 1543.0,821.2 1556.2,822.1"/><polyline points="1489.3,355.2 1484.3,364.0 1479.1,376.5 1472.6,384.8 1464.5,393.7"/><polyline points="1605.7,394.3 1596.7,405.8 1594.1,417.4 1586.4,434.2 1579.5,445.7"/><polyline points="1629.6,982.7 1642.1,980.0 1646.1,981.9 1658.8,984.1 1669.1,987.5"/><polyline points="1058.9,859.4 1054.5,870.1 1049.7,882.4 1054.4,900.0 1048.2,911.9"/><polyline points="1575.3,714.4 1586.1,716.7 1592.6,713.4 1596.6,713.2 1607.7,709.1"/><polyline points="1541.8,246.5 1534.6,256.9 1536.4,265.4 1532.6,277.2 1524.6,283.3"/><polyline points="1675.7,863.2 1686.0,861.4 1692.9,867.0 1703.0,867.1 1710.6,863.8"/><polyline points="1696.7,672.0 1682.1,676.8 1674.3,684.9 1656.8,685.4 1645.4,693.5"/><polyline points="824.7,247.4 826.6,247.5 834.5,241.8 837.3,244.7 846.2,238.9"/><polyline points="1095.6,771.1 1096.2,779.5 1100.4,792.4 1103.9,795.3 1105.4,806.8"/><polyline points="1637.4,414.0 1631.8,420.3 1628.5,430.0 1622.0,444.7 1615.3,450.5"/><polyline points="1699.2,215.2 1695.0,218.1 1684.1,227.9 1679.6,233.1 1675.8,239.6"/><polyline points="1728.9,762.8 1739.7,755.8 1745.2,757.9 1753.0,748.4 1759.3,746.0"/><polyline points="1756.1,573.5 1746.7,582.7 1734.7,585.6 1726.7,591.4 1712.2,597.4"/><polyline points="1752.6,675.3 1746.1,686.8 1742.9,695.2 1735.1,697.8 1728.8,710.5"/><polyline points="1274.3,468.9 1285.6,481.5 1289.5,489.6 1300.8,498.0 1305.0,509.1"/><polyline points="1809.0,906.4 1824.0,909.0 1837.1,916.8 1846.3,916.8 1863.1,919.9"/><polyline points="1279.4,820.5 1278.5,825.7 1269.9,839.8 1266.8,843.7 1261.1,854.9"/><polyline points="411.2,178.7 411.4,196.8 416.4,218.2 425.9,236.7 426.6,254.7"/><polyline points="1858.2,798.9 1846.7,808.8 1838.5,827.2 1824.1,836.1 1816.6,851.7"/><polyline points="1274.2,921.7 1272.3,938.8 1266.9,951.0 1263.6,969.3 1259.7,987.2"/><polyline points="461.8,931.0 453.3,941.0 443.9,949.5 431.8,949.3 426.8,960.1"/><polyline points="1027.2,191.2 1032.5,185.1 1030.2,188.8 1037.6,183.6 1039.3,181.6"/><polyline points="1102.1,371.2 1114.8,372.2 1121.9,367.8 1139.4,361.5 1147.3,363.2"/><polyline points="441.8,565.2 428.4,572.3 420.6,580.4 406.7,584.6 399.8,588.9"/><polyline points="445.4,186.6 437.7,201.0 432.4,219.1 433.7,237.3 426.6,254.7"/><polyline points="1547.1,565.1 1554.7,573.2 1570.1,576.8 1577.7,589.7 1588.0,594.8"/><polyline points="1465.8,878.4 1456.4,893.5 1450.8,906.2 1448.1,917.9 1437.0,929.1"/><polyline points="1220.6,245.9 1223.7,249.4 1230.3,242.2 1236.9,247.1 1238.7,244.3"/><polyline points="1301.0,304.0 1314.4,301.0 1322.4,293.6 1332.2,292.2 1346.4,289.2"/><polyline points="1290.8,405.3 1306.7,406.3 1319.0,409.8 1330.2,403.7 1348.2,407.4"/><polyline points="1374.2,200.8 1387.8,196.4 1398.0,186.3 1406.5,180.9 1417.4,179.5"/><polyline points="841.4,471.8 840.6,480.5 846.1,498.9 846.0,510.3 848.4,519.9"/><polyline points="1346.4,289.2 1359.3,294.9 1365.6,298.6 1378.9,300.9 1389.5,305.7"/><polyline points="761.6,767.2 755.8,776.6 739.3,781.8 733.7,796.5 724.4,801.4"/><polyline points="794.1,201.3 802.8,215.1 808.2,220.4 814.9,232.8 824.7,247.4"/><polyline points="1525.0,711.1 1537.8,708.7 1549.0,714.8 1563.0,711.3 1575.3,714.4"/><polyline points="952.3,611.3 955.6,623.1 952.9,630.0 958.3,644.6 957.2,653.7"/><polyline points="789.7,679.4 785.5,686.5 771.1,695.3 762.0,702.4 757.6,708.5"/><polyline points="1417.4,179.5 1423.0,181.4 1430.7,186.8 1441.4,183.2 1446.6,189.3"/><polyline points="1498.5,254.7 1511.2,256.0 1517.6,252.9 1530.9,245.4 1541.8,246.5"/><polyline points="1578.7,596.7 1584.2,598.0 1584.1,594.3 1583.2,596.7 1588.0,594.8"/><polyline points="854.7,569.4 840.2,578.1 827.0,579.1 817.2,591.8 802.2,595.3"/><polyline points="1113.4,673.2 1110.7,682.8 1109.8,696.7 1111.5,705.8 1106.7,720.4"/><polyline points="1024.3,561.8 1032.0,572.8 1031.9,581.6 1038.8,596.9 1041.2,607.2"/><polyline points="1062.2,422.7 1062.9,432.6 1053.0,448.8 1049.4,456.6 1049.9,471.8"/><polyline points="1541.8,246.5 1560.9,251.3 1571.8,255.6 1593.8,262.9 1607.0,267.2"/><polyline points="495.4,879.0 511.5,887.7 523.8,891.6 540.4,904.8 550.3,909.6"/><polyline points="1203.5,814.8 1197.9,832.3 1198.7,848.1 1197.2,861.5 1194.1,873.5"/><polyline points="575.7,655.9 577.0,668.9 583.7,676.1 583.4,689.8 587.8,700.3"/><polyline points="1831.4,830.7 1841.2,823.5 1842.0,815.4 1847.6,810.7 1858.2,798.9"/><polyline points="1095.6,771.1 1085.8,782.1 1085.5,789.9 1077.4,804.8 1071.0,816.2"/><polyline points="616.8,568.1 625.9,578.0 629.8,580.7 637.4,586.2 643.6,597.5"/><polyline points="1171.1,206.9 1165.3,222.3 1152.8,228.9 1149.3,239.1 1140.4,254.2"/><polyline points="1830.1,445.2 1833.1,445.3 1838.0,451.4 1841.5,446.4 1842.7,451.9"/><polyline points="1278.0,371.6 1268.6,377.8 1262.9,379.0 1253.2,382.7 1241.8,387.8"/><polyline points="1766.1,202.1 1773.1,204.3 1783.6,201.0 1791.1,204.3 1795.3,206.9"/><polyline points="1813.4,565.1 1825.3,565.2 1842.7,570.1 1860.4,569.6 1875.6,567.9"/><polyline points="1274.3,468.9 1267.0,472.7 1258.2,485.0 1242.0,493.8 1235.9,497.4"/><polyline points="419.1,678.7 425.2,672.4 425.5,658.8 434.2,649.4 438.0,641.1"/><polyline points="1365.1,504.5 1362.2,515.9 1361.0,528.1 1361.8,541.2 1363.8,548.3"/><polyline points="525.3,834.2 532.6,823.8 544.0,823.1 554.3,815.9 563.2,805.0"/><polyline points="1418.0,391.3 1416.5,406.4 1417.5,416.3 1418.7,432.0 1421.4,443.7"/><polyline points="416.6,302.0 427.6,298.4 440.8,301.7 455.0,298.7 467.5,301.7"/><polyline points="520.9,931.3 529.9,927.3 535.9,918.8 543.9,917.4 550.3,909.6"/><polyline points="585.9,972.6 606.9,978.0 624.4,975.0 641.4,981.2 655.8,984.5"/><polyline points="438.0,641.1 449.4,650.8 465.9,657.8 479.2,658.8 497.1,667.2"/><polyline points="555.2,723.2 564.9,717.4 574.5,711.9 580.7,704.4 587.8,700.3"/><polyline points="1543.9,914.6 1556.5,924.8 1558.6,933.0 1570.0,945.3 1579.3,953.9"/><polyline points="1446.7,316.7 1448.4,324.4 1456.5,337.1 1460.6,351.6 1460.4,361.7"/><polyline points="563.2,805.0 568.0,808.6 575.5,813.3 580.7,821.1 585.5,824.4"/><polyline points="674.5,865.9 689.3,869.0 697.1,870.1 713.0,873.9 722.8,880.1"/><polyline points="505.2,547.1 517.6,544.6 537.6,544.5 544.5,538.7 562.4,537.5"/><polyline points="1607.7,709.1 1605.4,716.1 1607.2,730.1 1600.1,741.9 1599.8,747.8"/><polyline points="1464.5,393.7 1460.5,407.4 1452.4,415.2 1442.2,426.5 1437.6,442.3"/><polyline points="647.8,413.3 639.1,424.2 631.4,438.6 626.5,451.3 618.8,469.0"/><polyline points="607.8,612.8 615.3,607.7 624.7,605.5 632.0,599.7 643.6,597.5"/><polyline points="655.8,984.5 669.4,982.7 676.2,979.5 686.1,979.9 696.7,980.3"/><polyline points="571.5,341.8 572.7,345.7 585.6,344.4 588.6,347.5 592.1,349.8"/><polyline points="1592.4,833.1 1595.9,848.5 1606.6,857.3 1605.1,869.1 1613.1,880.4"/><polyline points="1547.1,565.1 1558.2,572.5 1564.4,582.7 1574.0,585.9 1578.7,596.7"/><polyline points="727.6,755.0 736.5,756.5 743.8,763.8 752.7,760.9 761.6,767.2"/><polyline points="1642.8,615.5 1647.2,624.6 1659.4,629.2 1670.2,637.6 1674.7,647.3"/><polyline points="1594.0,370.2 1593.1,376.6 1599.4,383.6 1599.5,388.3 1605.7,394.3"/><polyline points="722.8,880.1 726.2,877.9 735.4,882.2 743.8,876.8 746.4,877.2"/><polyline points="817.3,914.3 819.9,919.1 827.1,917.3 831.8,919.1 838.9,922.3"/><polyline points="643.6,597.5 662.4,598.6 670.1,595.5 687.9,595.7 703.3,589.8"/><polyline points="1615.3,450.5 1617.6,461.1 1617.6,478.7 1614.4,490.3 1614.9,499.3"/><polyline points="771.7,664.1 773.3,668.6 777.4,669.4 785.0,678.5 789.7,679.4"/><polyline points="1717.0,494.9 1718.1,504.1 1715.0,522.3 1705.2,532.2 1705.7,545.6"/><polyline points="762.8,199.5 756.1,209.3 743.2,222.2 734.7,228.2 722.6,241.6"/><polyline points="1769.4,862.0 1761.1,873.6 1758.3,883.5 1754.7,902.4 1746.3,912.3"/><polyline points="1675.8,239.6 1674.9,256.0 1676.8,267.7 1673.8,285.5 1678.4,303.3"/><polyline points="716.7,512.8 728.8,509.4 733.3,502.0 745.0,494.1 750.3,488.7"/><polyline points="795.4,571.2 810.1,572.3 823.0,567.3 838.1,573.8 854.7,569.4"/><polyline points="1770.2,405.3 1769.3,416.3 1775.9,424.0 1780.7,433.6 1780.3,441.7"/><polyline points="841.4,471.8 834.3,480.2 824.5,485.6 821.2,495.1 813.6,499.1"/><polyline points="895.8,696.3 905.0,692.7 918.2,699.3 928.6,693.5 943.4,696.2"/><polyline points="794.1,201.3 784.5,211.5 781.9,221.9 769.2,234.2 763.1,244.9"/><polyline points="1875.6,567.9 1877.9,574.4 1875.4,578.1 1868.8,589.0 1870.8,593.3"/><polyline points="1816.6,851.7 1815.0,868.4 1815.4,880.6 1809.3,894.2 1809.0,906.4"/><polyline points="909.5,239.6 900.7,247.8 889.5,265.2 874.7,274.2 868.3,285.6"/><polyline points="914.2,828.5 922.0,826.7 930.6,828.5 937.4,820.8 949.4,821.9"/><polyline points="1838.4,678.0 1836.6,680.3 1842.5,688.6 1842.4,692.8 1840.3,697.4"/><polyline points="1006.6,851.5 1020.0,853.9 1034.8,852.3 1045.6,854.0 1058.9,859.4"/><polyline points="1013.5,960.7 1026.4,966.8 1033.9,964.6 1043.3,971.3 1054.6,971.5"/><polyline points="1058.9,859.4 1074.8,862.1 1086.4,862.1 1098.7,861.5 1109.7,867.3"/><polyline points="618.8,469.0 631.0,478.2 641.0,489.0 645.7,500.3 657.6,514.7"/><polyline points="615.4,927.3 605.0,935.3 602.2,952.2 589.9,963.5 585.9,972.6"/><polyline points="492.4,411.8 493.8,415.1 488.0,428.1 490.7,429.2 489.9,439.7"/><polyline points="654.6,820.2 656.5,829.7 661.1,844.4 671.6,856.7 674.5,865.9"/><polyline points="1166.7,657.5 1182.9,660.4 1195.6,665.6 1204.0,670.1 1218.0,678.7"/><polyline points="616.8,568.1 617.3,582.8 615.9,589.2 607.3,601.6 607.8,612.8"/><polyline points="1279.4,820.5 1288.9,816.0 1295.2,812.4 1302.9,809.3 1310.0,810.7"/><polyline points="411.2,178.7 417.5,178.2 426.5,185.9 437.1,188.4 445.4,186.6"/><polyline points="1372.8,958.6 1382.1,958.6 1397.8,964.8 1409.2,966.1 1422.7,967.6"/><polyline points="802.7,882.9 805.8,894.4 807.4,897.5 812.7,904.2 817.3,914.3"/><polyline points="1446.6,189.3 1449.4,201.5 1460.5,216.9 1458.5,232.3 1466.6,250.5"/><polyline points="1422.1,861.0 1435.1,867.0 1444.4,866.0 1453.5,871.0 1465.8,878.4"/><polyline points="1559.0,365.9 1561.1,372.0 1565.1,380.2 1569.9,382.1 1574.1,386.9"/><polyline points="1422.7,967.6 1433.4,973.1 1444.9,969.4 1462.5,975.3 1472.1,978.2"/><polyline points="961.1,575.3 968.8,582.5 977.7,594.8 976.8,604.1 986.3,614.4"/><polyline points="1556.2,822.1 1550.9,829.6 1540.2,843.0 1537.2,851.4 1529.9,865.4"/><polyline points="647.8,413.3 661.1,414.1 664.1,411.2 676.1,405.2 687.3,401.5"/><polyline points="856.9,878.4 856.3,886.3 850.6,902.1 841.6,913.0 838.9,922.3"/><polyline points="1607.0,267.2 1605.1,270.0 1604.1,277.6 1598.3,280.9 1596.5,285.7"/><polyline points="1446.7,316.7 1443.1,325.5 1437.7,334.0 1435.6,342.3 1429.0,355.0"/><polyline points="597.6,239.8 607.0,246.5 621.4,250.4 628.6,256.5 643.2,266.8"/><polyline points="722.7,318.3 723.1,315.1 734.1,308.2 735.6,301.7 738.0,299.9"/><polyline points="1730.0,980.5 1745.5,974.6 1755.8,977.1 1775.9,974.8 1788.4,969.8"/><polyline points="1079.1,249.4 1080.5,261.6 1086.6,269.3 1089.2,284.9 1094.3,292.9"/><polyline points="987.1,928.8 994.1,940.4 996.6,944.2 1010.2,951.8 1013.5,960.7"/><polyline points="802.3,459.4 810.6,461.5 821.5,461.8 832.1,471.5 841.4,471.8"/><polyline points="1773.1,288.1 1765.2,301.8 1760.5,309.4 1756.0,324.4 1747.9,336.6"/><polyline points="762.8,199.5 767.5,201.3 779.8,201.9 786.9,200.6 794.1,201.3"/></g>
<g fill="none" stroke="#ffffff" stroke-width="1.0" stroke-opacity="0.85" stroke-linejoin="round" stroke-linecap="round"><polyline points="380.0,246.9 395.8,237.1 409.6,223.3 421.4,211.4 431.3,201.6 443.1,193.7 462.8,189.7 482.5,187.8 502.2,183.8 518.0,175.9 537.7,174.0"/><polyline points="380.0,310.0 391.8,300.2 413.5,292.3 435.2,284.4 458.9,294.2 482.5,290.3 506.2,300.2 529.9,288.3"/><polyline points="486.5,270.6 490.4,250.9 498.3,239.0 510.1,219.3 529.9,207.5 545.6,199.6"/><polyline points="589.0,278.5 587.0,254.8 581.1,235.1 577.2,221.3 571.3,211.4"/><polyline points="579.1,193.7 600.8,201.6 612.7,201.6"/><polyline points="648.2,270.6 675.8,268.6 695.5,282.4 705.3,306.1 715.2,329.7 727.0,349.5 740.8,369.2"/><polyline points="687.6,286.4 699.4,270.6 711.3,254.8 727.0,235.1 742.8,211.4 750.7,195.7"/><polyline points="632.4,345.5 652.1,329.7 667.9,317.9"/><polyline points="626.5,349.5 624.5,378.0"/><polyline points="845.7,201.6 875.3,187.8 906.9,179.9"/><polyline points="885.2,215.4 926.6,227.2 934.5,246.9"/><polyline points="895.0,319.9 934.5,315.9 954.2,321.9"/><polyline points="954.2,349.5 993.6,345.5 1033.0,337.6"/><polyline points="966.0,357.3 966.0,378.0"/><polyline points="1218.8,191.7 1218.8,209.5 1236.5,215.4 1260.2,229.2 1272.0,246.9 1276.0,254.8 1291.7,266.6"/><polyline points="1134.0,300.2 1153.7,300.2 1193.2,282.4 1232.6,278.5 1256.2,290.3 1291.7,290.3"/><polyline points="1358.8,298.2 1370.6,306.1 1386.4,302.1 1400.2,294.2 1419.9,290.3"/><polyline points="1358.8,264.7 1366.7,246.9 1380.5,235.1 1410.0,231.2 1429.8,221.3 1459.3,207.5"/><polyline points="1486.9,286.4 1498.8,302.1 1511.0,310.0"/><polyline points="1445.5,201.6 1449.5,215.4 1459.3,223.3"/><polyline points="1508.0,264.7 1527.7,246.9 1537.6,235.1 1567.2,227.2 1596.7,219.3 1614.5,207.5 1646.0,187.8 1685.5,181.9 1724.9,189.7 1774.2,191.7 1803.8,175.9"/><polyline points="1616.4,207.5 1624.3,221.3 1638.1,243.0 1646.0,266.6 1653.9,286.4 1661.8,296.2"/><polyline points="1681.5,203.5 1659.8,235.1 1659.8,258.8 1665.7,290.3"/><polyline points="1720.9,219.3 1744.6,213.4 1780.1,197.6 1790.0,183.8"/><polyline points="1744.6,213.4 1774.2,225.2 1815.6,237.1 1827.4,258.8 1831.4,270.6"/><polyline points="1730.8,290.3 1754.5,300.2 1774.2,308.1 1823.5,312.0 1859.0,310.0"/><polyline points="1508.0,349.5 1547.4,347.5 1586.9,355.4 1626.3,355.4 1650.0,345.5 1657.9,339.6"/><polyline points="1831.4,270.6 1835.3,294.2 1853.1,306.1"/><polyline points="1843.2,223.3 1862.9,211.4 1885.0,205.5"/><polyline points="380.0,411.5 395.8,397.7 419.4,389.8 439.2,378.0"/><polyline points="380.0,500.2 411.5,488.4 439.2,484.5"/><polyline points="498.3,411.5 500.3,437.2 494.4,460.8"/><polyline points="490.4,488.4 518.0,488.4 547.6,500.2 557.5,520.0"/><polyline points="577.2,535.7 547.6,527.9 518.0,539.7 506.2,549.5"/><polyline points="632.4,378.0 638.3,417.4 638.3,437.2"/><polyline points="675.8,417.4 715.2,407.6 734.9,397.7"/><polyline points="965.0,378.0 965.0,423.4"/><polyline points="895.0,433.2 924.6,441.1 946.3,443.1"/><polyline points="918.7,409.5 924.6,427.3 918.7,456.9 912.8,470.7"/><polyline points="757.0,456.9 786.6,447.0 812.2,435.2"/><polyline points="780.7,378.0 800.4,389.8 816.2,417.4 824.0,447.0 839.8,470.7 843.8,488.4"/><polyline points="851.6,520.0 875.3,520.0 895.0,516.0"/><polyline points="865.4,520.0 855.6,543.6 867.4,575.2"/><polyline points="934.5,555.5 964.0,573.2 993.6,579.1"/><polyline points="1092.2,378.0 1102.1,417.4 1092.2,443.1 1072.5,454.9"/><polyline points="1072.5,417.4 1092.2,427.3 1131.6,423.4"/><polyline points="1134.0,431.2 1153.7,425.3 1173.4,411.5"/><polyline points="1220.8,441.1 1248.4,460.8 1272.0,449.0 1329.2,446.0 1337.1,456.9 1346.9,480.5 1356.8,504.2 1350.9,516.0 1341.0,541.7 1345.0,565.3 1335.1,584.0"/><polyline points="1356.8,504.2 1390.3,472.6 1400.2,456.9 1406.1,437.2 1402.2,389.8"/><polyline points="1248.4,460.8 1236.5,488.4 1212.9,496.3 1208.9,516.0 1201.0,535.7 1183.3,555.5"/><polyline points="1299.6,510.1 1311.5,514.1 1331.2,498.3 1356.8,504.2"/><polyline points="1362.7,508.1 1376.5,545.6 1402.2,575.2"/><polyline points="1203.0,535.7 1232.6,529.8 1272.0,533.8"/><polyline points="1414.0,393.8 1429.8,421.4 1453.4,447.0 1473.1,464.8 1498.8,488.4"/><polyline points="1416.0,393.8 1439.6,403.6 1469.2,409.5 1511.0,419.4"/><polyline points="1488.9,520.0 1511.0,512.1"/><polyline points="1508.0,419.4 1519.8,419.4 1533.6,437.2 1559.3,443.1 1573.1,456.9 1594.8,462.8 1620.4,474.6 1626.3,496.3 1632.2,500.2"/><polyline points="1508.0,512.1 1519.8,508.1 1533.6,496.3 1557.3,478.6 1586.9,460.8"/><polyline points="1616.4,423.4 1636.2,411.5 1711.1,411.5"/><polyline points="1519.8,512.1 1523.8,527.9 1543.5,543.6 1557.3,563.3 1567.2,575.2"/><polyline points="1606.6,573.2 1646.0,565.3 1675.6,553.5 1703.2,533.8"/><polyline points="1750.5,506.2 1768.3,494.3 1803.8,490.4 1843.2,496.3 1885.0,496.3"/><polyline points="1730.8,494.3 1744.6,486.4 1760.4,460.8 1768.3,433.2 1795.9,417.4 1809.7,401.7 1823.5,397.7"/><polyline points="1724.9,525.9 1748.6,535.7"/><polyline points="380.0,722.0 419.4,710.2 443.1,706.2 478.6,686.5 502.2,678.6"/><polyline points="380.0,664.8 409.6,662.9 449.0,664.8 478.6,658.9"/><polyline points="498.3,584.0 478.6,603.7 458.9,627.4 433.2,647.1"/><polyline points="389.9,706.2 405.6,733.9 425.4,757.5 447.0,773.3 458.9,790.0"/><polyline points="533.8,666.8 551.5,660.9 577.2,660.9 600.8,662.9"/><polyline points="573.2,682.6 557.5,694.4 518.0,718.1 482.5,737.8 468.7,761.5 458.9,790.0"/><polyline points="518.0,662.9 551.5,678.6 573.2,682.6 596.9,704.3"/><polyline points="616.6,662.9 616.6,694.4 632.4,722.0 648.2,745.7 675.8,741.7 695.5,741.7 725.1,761.5 757.0,773.3"/><polyline points="620.6,658.9 656.0,664.8 695.5,686.5 715.2,694.4 734.9,710.2 757.0,722.0"/><polyline points="636.3,619.5 665.9,603.7 675.8,591.9"/><polyline points="895.0,627.4 867.4,653.0 847.7,666.8"/><polyline points="908.8,611.6 926.6,605.7 954.2,597.8 962.1,593.9"/><polyline points="757.0,726.0 768.8,733.9 784.6,753.6 806.3,767.4 816.2,781.2"/><polyline points="826.0,790.0 839.8,751.6 859.5,702.3 851.6,682.6"/><polyline points="999.5,584.0 1005.4,623.4 993.6,643.2 993.6,682.6 1005.4,694.4"/><polyline points="993.6,643.2 1013.3,649.1 1033.0,655.0 1042.9,666.8 1048.8,690.5"/><polyline points="1060.7,682.6 1092.2,666.8 1111.9,651.0 1134.0,643.2"/><polyline points="954.2,710.2 934.5,751.6 926.6,790.0"/><polyline points="808.3,645.1 826.0,657.0 849.7,662.9 867.4,666.8 902.9,666.8 914.7,674.7"/><polyline points="1246.4,658.9 1252.3,666.8 1291.7,674.7 1311.5,670.8 1331.2,660.9 1343.0,647.1 1341.0,629.4 1331.2,603.7 1333.1,584.0"/><polyline points="1291.7,674.7 1283.9,698.4"/><polyline points="1346.9,662.9 1346.9,698.4"/><polyline points="1439.6,651.0 1439.6,682.6 1447.5,698.4"/><polyline points="1134.0,645.1 1163.6,645.1 1201.0,649.1 1220.8,666.8"/><polyline points="1234.6,641.2 1244.4,653.0 1246.4,658.9"/><polyline points="1579.0,584.0 1579.0,593.9 1590.8,607.7 1614.5,627.4 1618.4,643.2 1626.3,658.9 1650.0,672.7 1685.5,686.5"/><polyline points="1618.4,658.9 1614.5,682.6 1594.8,712.2 1567.2,755.5 1555.3,771.3"/><polyline points="1693.3,694.4 1707.1,712.2 1730.8,733.9 1744.6,753.6 1784.0,771.3 1788.0,790.0"/><polyline points="1685.5,700.3 1665.7,753.6 1646.0,790.0"/><polyline points="1819.5,584.0 1819.5,623.4 1815.6,662.9 1827.4,690.5 1843.2,706.2 1859.0,737.8 1872.8,761.5 1885.0,771.3"/><polyline points="1508.0,678.6 1533.6,702.3 1547.4,731.9 1549.4,751.6 1557.3,771.3"/><polyline points="1671.7,584.0 1665.7,603.7 1653.9,623.4 1636.2,647.1"/><polyline points="380.0,825.5 399.7,815.6 429.3,809.7 449.0,801.8 453.0,790.0"/><polyline points="470.7,790.0 474.6,803.8 502.2,815.6 527.9,825.5 541.7,817.6 565.3,819.6 577.2,827.5 581.1,835.4"/><polyline points="474.6,803.8 464.8,813.7 454.9,833.4 451.0,853.1 451.0,868.9"/><polyline points="445.1,896.5 443.1,904.4 415.5,916.2 397.7,928.0 382.0,932.0"/><polyline points="445.1,900.4 466.8,924.1 474.6,947.7 490.4,979.3"/><polyline points="502.2,890.6 518.0,896.5 541.7,890.6 553.5,878.7"/><polyline points="695.5,827.5 699.4,845.2 723.1,864.9 727.0,888.6 734.9,900.4"/><polyline points="723.1,864.9 757.0,872.8"/><polyline points="628.4,971.4 644.2,941.8 652.1,928.0"/><polyline points="494.4,983.2 518.0,987.2 537.7,993.1"/><polyline points="934.5,809.7 932.5,839.3 922.6,859.0 922.6,876.8 930.5,888.6 930.5,916.2 940.4,928.0 973.9,932.0 1013.3,932.0 1052.8,935.9"/><polyline points="962.1,809.7 969.9,829.4 968.0,868.9 979.8,892.5 983.8,912.2 987.7,928.0"/><polyline points="1029.1,790.0 1027.1,819.6 1013.3,849.2 993.6,868.9 983.8,876.8"/><polyline points="1068.5,790.0 1070.5,829.4 1068.5,888.6 1062.6,928.0 1044.9,967.5 1033.0,993.1"/><polyline points="859.5,904.4 875.3,900.4 899.0,908.3 910.8,932.0 918.7,945.8 930.5,943.8 942.3,926.1"/><polyline points="863.5,888.6 851.6,916.2 847.7,932.0"/><polyline points="816.2,918.2 816.2,993.1"/><polyline points="1270.1,861.0 1268.1,884.6 1276.0,902.4 1291.7,908.3 1301.6,920.1 1331.2,932.0 1354.8,951.7 1358.8,967.5 1370.6,993.1"/><polyline points="1134.0,859.0 1153.7,874.8 1183.3,878.7 1212.9,874.8 1232.6,863.0 1260.2,859.0"/><polyline points="1252.3,920.1 1272.0,939.9 1291.7,967.5 1305.5,993.1"/><polyline points="1331.2,790.0 1323.3,813.7 1331.2,833.4"/><polyline points="1370.6,868.9 1384.4,884.6 1390.3,900.4 1410.0,933.9"/><polyline points="1384.4,829.4 1410.0,845.2 1429.8,845.2 1459.3,841.3"/><polyline points="1339.1,878.7 1370.6,868.9"/><polyline points="1508.0,912.2 1517.9,892.5 1547.4,882.7 1586.9,861.0 1606.6,849.2 1636.2,829.4"/><polyline points="1626.3,790.0 1618.4,809.7 1634.2,825.5"/><polyline points="1646.0,835.4 1685.5,829.4 1724.9,825.5 1764.3,821.5 1803.8,829.4 1823.5,823.5"/><polyline points="1764.3,821.5 1764.3,790.0"/><polyline points="1748.6,916.2 1764.3,900.4 1766.3,896.5"/><polyline points="1823.5,829.4 1821.5,853.1 1815.6,870.8"/><polyline points="1835.3,904.4 1843.2,947.7 1847.1,993.1"/></g>
<g fill="none" stroke="#8f92ad" stroke-width="0.9" stroke-opacity="0.7" stroke-linejoin="round" stroke-linecap="round"><polyline points="873.3,172.0 883.2,177.9 877.3,187.8 861.5,185.8 853.6,189.7 843.8,195.7 835.9,205.5 837.8,215.4 847.7,219.3 849.7,227.2 845.7,239.0 831.9,229.2 826.0,231.2 822.1,243.0"/><polyline points="1145.8,235.1 1163.6,231.2 1175.4,229.2 1185.3,239.0 1193.2,227.2 1203.0,219.3 1216.8,223.3 1236.5,225.2 1252.3,231.2 1260.2,245.0 1272.0,243.0 1285.8,241.0 1287.8,221.3 1283.9,201.6 1281.9,179.9 1291.7,183.8 1307.5,177.9 1321.3,172.0 1327.2,179.9"/><polyline points="1149.8,298.2 1151.7,321.9 1155.7,345.5 1165.5,359.3 1173.4,378.0"/><polyline points="1584.9,172.0 1586.9,181.9 1596.7,183.8 1602.6,189.7 1618.4,195.7 1622.4,179.9 1630.2,175.9 1646.0,179.9 1653.9,172.0"/><polyline points="419.4,474.6 439.2,476.6 458.9,482.5 478.6,476.6 502.2,480.5 518.0,468.7 537.7,458.8 557.5,449.0 575.2,443.1 587.0,437.2 606.8,439.1 620.6,452.9 636.3,454.9 652.1,466.7 665.9,460.8 669.8,478.6 675.8,488.4 660.0,516.0 671.8,535.7 687.6,549.5 701.4,551.5 699.4,584.0"/><polyline points="989.7,458.8 999.5,460.8 1011.4,472.6 1019.2,480.5"/><polyline points="1033.0,449.0 1052.8,443.1 1056.7,449.0 1054.7,464.8 1062.6,480.5 1076.4,490.4 1092.2,486.4 1102.1,504.2 1111.9,516.0 1121.8,514.1"/><polyline points="1173.4,381.9 1181.3,389.8 1179.4,401.7 1169.5,417.4 1161.6,443.1 1165.5,460.8 1171.5,464.8 1187.2,462.8 1199.1,456.9 1214.8,456.9 1220.8,441.1 1228.6,429.3 1244.4,431.2 1258.2,425.3 1254.3,409.5 1248.4,397.7 1232.6,395.7"/><polyline points="1165.5,464.8 1163.6,476.6 1177.4,488.4 1163.6,494.3 1141.9,496.3"/><polyline points="1317.4,383.9 1317.4,413.5 1331.2,415.5 1341.0,401.7 1350.9,413.5 1362.7,397.7 1370.6,401.7 1374.6,419.4 1372.6,433.2 1384.4,449.0 1378.5,460.8 1368.6,474.6 1380.5,476.6 1384.4,464.8 1394.3,460.8 1390.3,470.7 1398.2,480.5 1398.2,500.2 1414.0,502.2 1429.8,496.3 1437.7,478.6 1445.5,480.5 1453.4,496.3 1451.5,516.0 1447.5,531.8 1453.4,551.5 1449.5,567.3 1457.4,584.0"/><polyline points="695.5,584.0 681.7,593.9 673.8,603.7 675.8,623.4 687.6,639.2"/><polyline points="1457.4,584.0 1451.5,595.8 1455.4,617.5 1465.3,631.3 1481.0,639.2 1488.9,651.0 1483.0,662.9 1488.9,678.6 1500.7,688.5 1511.0,698.4"/><polyline points="1508.0,694.4 1515.9,700.3 1531.7,716.1 1543.5,733.9 1541.5,751.6 1537.6,771.3 1541.5,790.0"/><polyline points="1488.9,839.3 1498.8,849.2 1504.7,868.9 1500.7,888.6 1494.8,912.2 1469.2,928.0 1449.5,932.0 1429.8,935.9 1425.8,947.7 1414.0,967.5 1425.8,993.1"/><polyline points="1537.6,790.0 1533.6,805.8 1541.5,815.6 1545.5,821.5 1555.3,837.3 1547.4,845.2 1533.6,849.2 1525.7,841.3 1515.9,853.1"/></g>
<g fill="none" stroke="#72c5ef" stroke-width="2.6" stroke-opacity="1" stroke-linejoin="round" stroke-linecap="round"><polyline points="945.0,716.0 922.6,726.0 914.7,739.8 905.0,765.0 895.0,790.0 879.2,796.0 863.5,807.7 859.5,819.6 847.7,835.3 826.0,853.0 822.0,865.0 816.0,888.6 814.0,910.0 804.0,924.0 800.0,944.0 796.0,953.7 798.0,985.0 790.5,994.0"/><polyline points="880.0,282.0 900.0,278.0 925.0,272.0 945.0,274.0"/></g>
<g fill="none" stroke="#6cc3ee" stroke-width="1.5" stroke-opacity="1" stroke-linejoin="round" stroke-linecap="round"><polyline points="768.8,195.7 771.8,207.5 788.5,231.2 808.3,258.8 822.1,274.5 835.9,286.4 851.6,294.2 867.4,290.3 895.0,276.5 914.7,268.6 926.6,268.6 934.5,270.6"/><polyline points="962.1,283.4 969.9,282.4"/><polyline points="969.9,355.4 975.9,365.2 981.8,378.0"/><polyline points="1323.3,258.8 1331.2,256.8 1343.0,268.6 1339.1,278.5 1343.0,282.4 1354.8,294.2 1358.8,306.1 1364.7,310.0 1368.6,321.9 1374.6,337.6 1382.4,349.5 1384.4,357.3"/><polyline points="1307.5,298.2 1303.6,310.0 1301.6,317.9 1306.5,325.8"/><polyline points="1167.5,294.2 1181.3,294.2 1187.2,327.8 1189.2,339.6"/><polyline points="1485.0,256.8 1500.7,260.7"/><polyline points="1185.3,367.2 1191.2,373.1"/><polyline points="1511.9,274.5 1531.7,276.5 1547.4,275.5 1551.4,270.6 1561.2,270.6 1567.2,280.4"/><polyline points="1684.5,353.4 1696.3,367.2"/><polyline points="470.7,429.3 474.6,443.1 470.7,452.9"/><polyline points="466.8,496.3 478.6,504.2"/><polyline points="380.0,543.6 391.8,535.7 403.7,525.9 405.6,520.0"/><polyline points="589.0,435.2 587.0,447.0"/><polyline points="981.8,378.0 989.7,385.9 999.5,385.9 993.6,397.7 985.7,405.6 969.9,413.5 966.0,423.4"/><polyline points="981.8,456.9 983.8,472.6 987.7,482.5 993.6,488.4"/><polyline points="1005.4,520.0 1007.4,531.8 1003.5,539.7 995.6,547.6 999.5,555.5 997.6,575.2"/><polyline points="1033.0,508.1 1040.9,520.0 1048.8,527.9"/><polyline points="1100.1,539.7 1108.0,527.9 1117.8,516.0 1125.7,514.1"/><polyline points="1230.6,383.9 1244.4,380.0"/><polyline points="1410.0,385.9 1414.0,389.8"/><polyline points="1461.3,403.6 1455.4,411.5 1459.3,423.4 1445.5,425.3 1433.7,424.3"/><polyline points="1157.7,535.7 1165.5,543.6 1159.6,551.5"/><polyline points="1701.2,380.0 1707.1,387.9"/><polyline points="977.8,617.5 973.9,627.4 969.9,641.2 968.0,658.9 962.1,672.7 954.2,682.6 950.2,698.4 946.3,708.2 932.5,722.0 922.6,726.0"/><polyline points="1758.4,625.4 1774.2,631.3 1791.9,637.2 1811.7,639.2"/><polyline points="1815.6,668.8 1819.5,676.7"/><polyline points="1841.2,693.4 1853.1,696.4 1870.8,708.2"/><polyline points="385.9,849.2 395.8,859.0 409.6,864.9 415.5,876.8 423.4,890.6 437.2,892.5"/><polyline points="380.0,892.5 391.8,908.3 399.7,924.1 403.7,933.9 393.8,945.8 387.9,953.7"/><polyline points="887.1,790.0 875.3,799.9"/><polyline points="812.2,908.3 802.4,928.0 792.5,943.8"/><polyline points="1477.1,937.9 1496.8,932.0"/><polyline points="1642.1,827.5 1657.9,822.5 1665.7,817.6 1685.5,820.6 1697.3,817.6 1717.0,819.6 1744.6,817.6 1760.4,814.6 1772.2,813.7 1795.9,816.6 1833.3,808.7 1859.0,801.8 1885.0,795.9"/><polyline points="1606.6,855.1 1614.5,845.2 1632.2,833.4"/><polyline points="1527.7,898.4 1537.6,888.6 1547.4,888.6 1571.1,880.7"/><polyline points="1659.8,896.5 1657.9,908.3"/><polyline points="1657.9,914.2 1663.8,932.0 1665.7,953.7 1677.6,977.3"/><polyline points="1667.7,829.4 1671.7,821.5"/></g>
<g fill="none" stroke="#fbfbf5" stroke-width="2.8" stroke-opacity="0.75" stroke-linejoin="round" stroke-linecap="round"><polyline points="423.4,203.5 427.3,217.4 437.2,235.1 449.0,254.8 460.8,265.7 474.6,274.5 496.3,274.5 518.0,282.4 537.7,290.3 553.5,302.1 561.4,305.1 573.2,305.1 581.1,300.2"/><polyline points="543.7,172.0 557.5,189.7 564.4,201.6 561.4,213.4 553.5,229.2 553.5,239.0 563.4,254.8 570.3,266.6 572.2,274.5 575.2,281.4"/><polyline points="572.2,285.4 561.4,298.2 559.4,310.0 551.5,321.9 549.6,335.7 537.7,349.5 527.9,357.3 525.9,365.2 529.9,378.0"/><polyline points="564.4,203.5 583.1,193.7 596.9,183.8 604.8,179.9 618.6,183.8 624.5,188.8 636.3,185.8 650.1,179.9 653.1,172.0"/><polyline points="753.6,172.0 755.6,199.6 757.0,227.2"/><polyline points="757.0,225.2 764.9,250.9 778.7,276.5 782.6,284.4 796.4,294.2 812.2,306.1 824.0,314.0 839.8,313.0 851.6,310.0 859.5,296.2 867.4,292.3 895.0,282.4 906.9,282.4 920.7,286.4 930.5,294.2 954.2,292.3 973.9,294.2 993.6,292.3"/><polyline points="851.6,310.0 853.6,329.7 863.5,345.5 875.3,353.4 887.1,369.2 899.0,378.0"/><polyline points="930.5,298.2 922.6,314.0 914.7,329.7 908.8,345.5 906.9,369.2 902.9,378.0"/><polyline points="936.4,172.0 938.4,195.7 950.2,211.4 962.1,229.2 969.9,245.0 977.8,260.7"/><polyline points="1050.8,172.0 1046.8,195.7 1037.0,207.5 1029.1,227.2 1033.0,250.9 1033.0,290.3 1037.0,345.5 1042.9,378.0"/><polyline points="1015.3,187.8 1037.0,193.7 1052.8,203.5 1062.6,217.4"/><polyline points="989.7,256.8 1005.4,237.1 1033.0,223.3 1062.6,217.4 1092.2,219.3 1109.9,217.4"/><polyline points="954.2,258.8 993.6,256.8 1033.0,256.8 1072.5,254.8 1102.1,254.8 1134.0,258.8"/><polyline points="993.6,294.2 999.5,310.0 1013.3,327.8 1019.2,335.7"/><polyline points="1068.5,254.8 1064.6,274.5 1058.7,286.4 1060.7,294.2"/><polyline points="1121.8,256.8 1125.7,270.6 1134.0,276.5"/><polyline points="1141.9,172.0 1145.8,187.8 1148.8,211.4 1141.9,223.3"/><polyline points="1148.8,211.4 1169.5,201.6 1189.2,199.6 1205.0,193.7 1222.7,179.9 1240.5,172.0"/><polyline points="1145.8,237.1 1153.7,246.9 1155.7,258.8"/><polyline points="1212.9,288.3 1226.7,294.2 1244.4,314.0 1262.2,331.7 1283.9,345.5 1295.7,359.3 1305.5,369.2"/><polyline points="1384.4,172.0 1386.4,181.9 1400.2,197.6 1408.1,209.5 1404.1,221.3 1410.0,235.1 1416.0,245.0 1429.8,254.8 1437.7,268.6 1441.6,284.4 1429.8,294.2 1421.9,310.0 1417.9,329.7 1419.9,345.5 1416.0,357.3 1423.8,367.2 1433.7,378.0"/><polyline points="1479.1,172.0 1481.0,195.7 1465.3,221.3 1461.3,231.2 1463.3,246.9 1457.4,258.8 1459.3,270.6 1469.2,274.5 1486.9,268.6 1511.0,274.5"/><polyline points="1441.6,282.4 1463.3,274.5"/><polyline points="1449.5,378.0 1469.2,373.1 1500.7,377.1 1511.0,378.0"/><polyline points="1508.0,274.5 1527.7,280.4 1557.3,280.4 1567.2,288.3 1582.9,294.2 1606.6,293.3 1618.4,297.2"/><polyline points="1701.2,172.0 1709.1,183.8 1705.2,201.6 1697.3,209.5 1705.2,223.3 1697.3,243.0 1683.5,260.7 1681.5,276.5 1665.7,290.3 1661.8,296.2 1665.7,306.1 1671.7,315.9"/><polyline points="1667.7,314.0 1685.5,304.1 1697.3,294.2 1705.2,290.3 1722.9,289.3 1744.6,284.4 1760.4,279.5 1784.0,278.5 1803.8,272.6 1831.4,266.6 1860.9,272.6"/><polyline points="1860.9,272.6 1862.9,258.8 1868.8,248.9 1885.0,243.0"/><polyline points="1860.9,272.6 1862.9,290.3 1860.9,325.8 1847.1,333.7 1837.3,345.5 1831.4,369.2 1835.3,378.0"/><polyline points="1683.5,341.6 1697.3,357.3 1707.1,378.0"/><polyline points="1527.7,378.0 1537.6,375.1 1547.4,378.0"/><polyline points="380.0,437.2 399.7,435.2 419.4,425.3"/><polyline points="451.0,401.7 458.9,395.7 470.7,391.8 478.6,385.9"/><polyline points="551.5,378.0 559.4,393.8 563.4,413.5 571.3,427.3 571.3,439.1 579.1,449.0 589.0,456.9 585.1,468.7 591.0,480.5 589.0,500.2 587.0,516.0 589.0,531.8 594.9,535.7 592.9,551.5 596.9,557.4 614.6,573.2 620.6,584.0"/><polyline points="589.0,456.9 602.8,458.8 626.5,456.9 634.4,452.9 642.2,454.9 662.0,466.7 669.8,478.6 695.5,490.4 707.3,504.2 723.1,516.0 734.9,527.9 746.7,541.7 757.0,543.6"/><polyline points="380.0,490.4 391.8,490.4 399.7,496.3"/><polyline points="437.2,510.1 454.9,516.0 474.6,516.0"/><polyline points="508.2,549.5 514.1,567.3 518.0,584.0"/><polyline points="518.0,563.3 533.8,561.4 553.5,573.2 573.2,559.4 596.9,557.4 636.3,569.3 663.9,571.2 687.6,584.0"/><polyline points="596.9,557.4 583.1,584.0"/><polyline points="656.0,584.0 695.5,551.5 734.9,531.8 757.0,529.8"/><polyline points="893.1,389.8 887.1,405.6 875.3,423.4 877.3,441.1 867.4,451.0 845.7,462.8 831.9,474.6 824.0,488.4 824.0,496.3 820.1,504.2 816.2,514.1"/><polyline points="904.9,393.8 906.9,403.6 918.7,409.5 934.5,417.4 946.3,429.3 948.3,447.0 954.2,468.7 954.2,496.3 956.1,516.0 962.1,539.7 966.0,551.5 981.8,559.4"/><polyline points="757.0,527.9 776.7,520.0 804.3,516.0 822.1,514.1 845.7,504.2 867.4,496.3 887.1,482.5 910.8,473.6 954.2,473.6 973.9,472.6 1019.2,472.6"/><polyline points="932.5,508.1 954.2,506.2 979.8,506.2"/><polyline points="910.8,584.0 920.7,555.5 934.5,541.7 950.2,527.9 966.0,516.0 977.8,512.1"/><polyline points="1021.2,378.0 1019.2,397.7 1021.2,437.2 1023.2,480.5 1017.3,516.0 1019.2,555.5 1019.2,584.0"/><polyline points="1037.0,378.0 1033.0,389.8 1033.0,417.4 1039.0,437.2 1042.9,468.7 1040.9,516.0 1042.9,555.5 1044.9,584.0"/><polyline points="1040.9,474.6 1025.2,484.5 1013.3,488.4"/><polyline points="1011.4,510.1 1029.1,521.9 1046.8,531.8"/><polyline points="757.0,543.6 760.9,567.3 762.9,584.0"/><polyline points="1305.5,381.9 1331.2,380.0 1346.9,380.0 1366.7,389.8 1390.3,389.8 1410.0,389.8 1416.0,393.8 1429.8,389.8 1443.6,380.0"/><polyline points="1370.6,395.7 1370.6,403.6 1350.9,427.3 1345.0,443.1 1335.1,451.0 1321.3,462.8 1305.5,480.5 1299.6,492.4 1298.6,508.1 1283.9,520.0 1274.0,535.7 1272.0,545.6 1256.2,561.4 1256.2,573.2 1246.4,584.0"/><polyline points="1443.6,378.0 1449.5,397.7 1455.4,427.3 1467.2,441.1 1467.2,468.7 1465.3,476.6 1477.1,496.3 1488.9,520.0 1486.9,531.8 1481.0,547.6 1479.1,565.3 1477.1,584.0"/><polyline points="1543.5,378.0 1567.2,383.9 1590.8,389.8 1606.6,397.7 1618.4,396.7 1636.2,395.7 1646.0,399.7 1653.9,407.6 1665.7,425.3 1673.6,441.1 1675.6,460.8 1681.5,468.7 1693.3,470.7 1705.2,478.6 1717.0,486.4 1734.8,496.3 1744.6,504.2 1752.5,511.1 1762.4,514.1 1770.2,521.9 1774.2,529.8 1784.0,543.6 1803.8,551.5 1815.6,559.4 1823.5,571.2 1843.2,577.1 1851.1,584.0"/><polyline points="1707.1,378.0 1713.1,391.8 1711.1,413.5 1697.3,441.1 1693.3,460.8 1693.3,484.5 1697.3,504.2"/><polyline points="1835.3,381.9 1837.3,397.7 1823.5,409.5 1823.5,425.3 1811.7,437.2 1793.9,452.9 1790.0,460.8 1782.1,476.6 1780.1,488.4 1764.3,508.1 1748.6,535.7 1750.5,555.5 1752.5,584.0"/><polyline points="1622.4,584.0 1642.1,577.1 1675.6,580.1 1697.3,575.2 1713.1,565.3 1724.9,555.5 1740.7,541.7 1764.3,537.7 1784.0,535.7 1803.8,533.8 1823.5,529.8 1843.2,533.8 1862.9,529.8 1874.7,525.9 1885.0,527.9"/><polyline points="1713.1,535.7 1717.0,541.7 1728.8,543.6 1748.6,553.5"/><polyline points="380.0,627.4 385.9,637.2 383.9,653.0 380.0,658.9"/><polyline points="380.0,655.0 399.7,653.0 429.3,649.1 458.9,651.0 482.5,651.0 518.0,651.0 541.7,645.1 557.5,635.3 573.2,625.4 583.1,619.5"/><polyline points="525.9,584.0 531.8,591.9 545.6,595.8 551.5,605.7 569.3,605.7 583.1,611.6 598.9,615.5"/><polyline points="616.6,597.8 636.3,591.9 652.1,584.0"/><polyline points="541.7,653.0 557.5,666.8 569.3,678.6 587.0,686.5 602.8,690.5 610.7,698.4 614.6,720.1 624.5,733.9 626.5,757.5 630.4,773.3 640.3,790.0"/><polyline points="675.8,584.0 683.7,597.8 691.5,603.7 695.5,611.6 715.2,613.6 732.9,617.5"/><polyline points="910.8,584.0 908.8,615.5 910.8,639.2 918.7,658.9 926.6,670.8 924.6,676.7 934.5,686.5"/><polyline points="1035.0,601.7 1029.1,627.4 1019.2,653.0 1013.3,674.7 1001.5,694.4 993.6,702.3"/><polyline points="1039.0,584.0 1042.9,591.9 1072.5,589.9 1092.2,595.8 1111.9,603.7 1134.0,613.6"/><polyline points="910.8,718.1 902.9,739.8 885.2,765.4 863.5,790.0"/><polyline points="916.7,790.0 934.5,765.4 954.2,751.6 960.1,749.6"/><polyline points="1084.3,755.5 1092.2,773.3 1108.0,781.2 1125.7,790.0"/><polyline points="1134.0,613.6 1163.6,618.5 1183.3,629.4 1207.0,631.3 1232.6,639.2 1244.4,639.2 1262.2,625.4 1281.9,619.5 1307.5,617.5 1331.2,621.5 1350.9,629.4 1370.6,633.3 1410.0,633.3 1429.8,631.3 1449.5,625.4 1465.3,619.5 1483.0,621.5 1498.8,611.6 1511.0,607.7"/><polyline points="1248.4,584.0 1240.5,593.9 1240.5,613.6 1236.5,631.3 1226.7,645.1 1224.7,666.8 1216.8,682.6 1212.9,698.4 1199.1,722.0 1181.3,761.5 1173.4,773.3 1153.7,790.0"/><polyline points="1481.0,584.0 1485.0,595.8 1479.1,605.7 1483.0,621.5 1490.9,633.3 1490.9,649.1 1485.0,662.9 1473.1,674.7 1469.2,686.5 1471.2,702.3 1473.1,741.7 1467.2,755.5 1473.1,769.3 1479.1,790.0"/><polyline points="1508.0,607.7 1533.6,599.8 1547.4,602.7 1563.2,595.8 1590.8,601.7 1610.5,593.9 1624.3,584.0"/><polyline points="1752.5,584.0 1756.4,607.7 1764.3,627.4 1770.2,647.1 1774.2,666.8 1788.0,686.5 1795.9,696.4 1793.9,704.3 1807.7,720.1 1823.5,739.8 1825.5,761.5 1823.5,790.0"/><polyline points="1847.1,584.0 1862.9,595.8 1874.7,615.5 1885.0,627.4"/><polyline points="380.0,866.9 403.7,867.9 411.5,873.8 421.4,873.8"/><polyline points="642.2,790.0 656.0,799.9 675.8,801.8 691.5,807.7 705.3,800.8 734.9,803.8 757.0,804.8"/><polyline points="729.0,908.3 754.6,910.3 757.0,908.3"/><polyline points="750.7,882.7 750.7,900.4 754.6,908.3 742.8,924.1 731.0,935.9 723.1,957.6 731.0,977.3 727.0,993.1"/><polyline points="757.0,804.8 768.8,803.8 780.7,811.7 794.5,839.3 794.5,855.1 792.5,874.8"/><polyline points="794.5,843.2 816.2,841.3 835.9,829.4 855.6,799.9 863.5,790.0"/><polyline points="784.6,843.2 772.8,853.1 764.9,868.9 757.0,880.7"/><polyline points="914.7,790.0 906.9,801.8 895.0,825.5 875.3,853.1 855.6,888.6 843.8,912.2 839.8,935.9 828.0,953.7 816.2,967.5 810.2,993.1"/><polyline points="1134.0,847.2 1121.8,861.0 1115.9,876.8 1113.9,900.4 1092.2,924.1 1072.5,945.8 1068.5,967.5 1048.8,983.2 1044.9,993.1"/><polyline points="1134.0,799.9 1147.8,797.9 1153.7,790.0"/><polyline points="1147.8,797.9 1151.7,809.7 1155.7,823.5 1145.8,835.4 1134.0,841.3"/><polyline points="1165.5,827.5 1189.2,831.4 1212.9,835.4 1232.6,841.3 1252.3,851.1 1270.1,861.0 1297.7,863.0 1311.5,868.9 1321.3,876.8 1329.2,884.6"/><polyline points="1319.3,892.5 1323.3,900.4 1350.9,908.3 1370.6,912.2 1382.4,924.1 1410.0,933.9 1429.8,935.9 1449.5,930.0 1473.1,932.0 1481.0,941.8 1511.0,943.8"/><polyline points="1323.3,896.5 1330.2,889.6"/><polyline points="1477.1,790.0 1479.1,805.8 1473.1,819.6 1479.1,839.3 1483.0,851.1 1479.1,864.9 1469.2,878.7 1449.5,896.5 1441.6,908.3 1451.5,928.0 1447.5,947.7 1441.6,967.5 1445.5,993.1"/><polyline points="1508.0,941.8 1531.7,951.7 1569.1,957.6 1606.6,949.7 1646.0,950.7 1665.7,953.7 1705.2,959.6 1715.0,961.5 1728.8,975.3 1748.6,993.1"/><polyline points="1825.5,821.5 1833.3,839.3 1839.3,859.0 1847.1,872.8 1857.0,888.6 1855.0,908.3 1859.0,928.0 1860.9,967.5 1862.9,993.1"/><polyline points="1847.1,872.8 1862.9,872.8 1885.0,868.9"/><polyline points="1443.5,380.0 1468.0,375.0 1510.0,377.0 1527.0,378.0 1545.0,378.0"/><polyline points="380.0,189.7 391.8,196.6 405.6,193.7 419.4,199.6 423.4,203.5"/><polyline points="434.2,195.7 435.2,201.6 427.3,208.5"/><polyline points="462.8,266.6 464.8,282.4 460.8,298.2 464.8,314.0 466.8,345.5"/><polyline points="614.6,310.0 622.5,325.8 629.4,339.6"/><polyline points="667.9,314.0 687.6,308.1 703.4,302.1 731.0,292.3 742.8,293.3 757.0,292.3"/><polyline points="899.0,266.6 906.9,262.7 926.6,260.7 950.2,258.8"/><polyline points="993.6,219.3 1005.4,227.2 1013.3,241.0"/><polyline points="1070.5,183.8 1066.6,211.4 1060.7,217.4"/><polyline points="1115.9,195.7 1119.8,207.5 1117.8,221.3"/><polyline points="1109.9,270.6 1102.1,294.2 1098.1,310.0 1104.0,325.8"/><polyline points="1056.7,339.6 1080.4,335.7 1092.2,333.7"/><polyline points="918.7,288.3 934.5,290.3 946.3,288.3"/><polyline points="1183.3,325.8 1187.2,339.6 1183.3,359.3 1181.3,378.0"/><polyline points="1685.5,175.9 1689.4,189.7 1681.5,201.6 1697.3,213.4 1705.2,225.2 1720.9,217.4"/><polyline points="1774.2,191.7 1782.1,185.8"/><polyline points="1807.7,239.0 1813.6,237.1"/><polyline points="1681.5,345.5 1685.5,361.3 1682.5,369.2"/><polyline points="634.4,488.4 636.3,504.2 632.4,516.0 638.3,527.9"/><polyline points="942.3,425.3 952.2,422.4"/><polyline points="946.3,443.1 954.2,443.1"/><polyline points="968.0,480.5 977.8,480.5 981.8,496.3"/><polyline points="969.9,512.1 981.8,520.0 981.8,535.7 985.7,555.5"/><polyline points="1013.3,431.2 1031.1,423.4"/><polyline points="993.6,437.2 995.6,451.0"/><polyline points="1005.4,520.0 1013.3,535.7 1017.3,575.2"/><polyline points="1023.2,537.7 1037.0,547.6 1044.9,549.5"/><polyline points="1052.8,555.5 1056.7,575.2"/><polyline points="1155.7,557.4 1165.5,555.5 1171.5,567.3 1179.4,563.3"/><polyline points="1632.2,500.2 1644.1,504.2 1653.9,501.2 1665.7,505.2 1681.5,506.2 1693.3,516.0 1705.2,527.9 1713.1,533.8 1707.1,539.7"/><polyline points="1699.3,462.8 1704.2,470.7 1705.2,486.4"/><polyline points="1699.3,512.1 1713.1,520.0 1715.0,535.7"/><polyline points="1713.1,567.3 1720.9,584.0"/><polyline points="1862.9,411.5 1878.7,397.7"/><polyline points="518.0,584.0 523.9,591.9 516.1,601.7 514.1,613.6 512.1,641.2"/><polyline points="565.3,635.3 569.3,639.2 589.0,643.2 600.8,645.1"/><polyline points="380.0,658.9 382.0,672.7 391.8,702.3 393.8,712.2"/><polyline points="496.3,662.9 486.5,670.8 488.4,690.5 482.5,694.4"/><polyline points="604.8,666.8 598.9,676.7 600.8,688.5"/><polyline points="646.2,668.8 660.0,664.8 669.8,668.8 673.8,666.8"/><polyline points="403.7,729.9 407.6,737.8"/><polyline points="439.2,767.4 445.1,775.3"/><polyline points="962.1,591.9 960.1,603.7 966.0,613.6 962.1,621.5 954.2,631.3 950.2,643.2 952.2,662.9 948.3,672.7"/><polyline points="983.8,662.9 979.8,676.7 971.9,682.6"/><polyline points="877.3,621.5 895.0,618.5 906.9,615.5"/><polyline points="782.6,621.5 796.4,625.4 808.3,621.5 816.2,623.4"/><polyline points="936.4,767.4 942.3,775.3 948.3,783.1"/><polyline points="837.8,739.8 843.8,735.8"/><polyline points="1201.0,611.6 1208.9,623.4 1208.9,631.3"/><polyline points="1197.1,757.5 1197.1,771.3 1191.2,779.2"/><polyline points="1252.3,755.5 1242.4,767.4 1234.6,781.2 1224.7,785.1 1252.3,783.1 1301.6,790.0"/><polyline points="1402.2,783.1 1414.0,785.1 1425.8,782.2"/><polyline points="1719.0,584.0 1720.9,591.9 1726.9,603.7 1717.0,619.5 1717.0,631.3 1705.2,645.1 1697.3,658.9 1689.4,668.8 1683.5,682.6"/><polyline points="1681.5,708.2 1679.5,722.0 1673.6,739.8 1665.7,747.7"/><polyline points="1819.5,625.4 1821.5,639.2"/><polyline points="421.4,873.8 439.2,880.7 464.8,888.6 472.7,882.7 484.5,884.6 502.2,890.6 518.0,886.6 553.5,871.8 573.2,853.1 581.1,837.3 587.0,831.4 600.8,829.4 616.6,817.6 636.3,811.7 656.0,804.8"/><polyline points="464.8,888.6 478.6,902.4 490.4,906.3 506.2,918.2 522.0,933.9 537.7,951.7 553.5,961.5 559.4,971.4 563.4,993.1"/><polyline points="380.0,906.3 383.9,928.0 380.0,947.7"/><polyline points="652.1,928.0 665.9,912.2 695.5,902.4 715.2,902.4 729.0,908.3 731.0,928.0 734.9,939.9"/><polyline points="701.4,803.8 703.4,813.7 695.5,827.5"/><polyline points="757.0,973.4 742.8,987.2 727.0,993.1"/><polyline points="383.9,963.5 399.7,977.3 419.4,993.1"/><polyline points="782.6,809.7 796.4,795.9 802.4,790.0"/><polyline points="794.5,894.5 816.2,892.5 831.9,894.5 851.6,902.4"/><polyline points="768.8,894.5 776.7,908.3 792.5,916.2 816.2,920.1"/><polyline points="776.7,908.3 772.8,928.0 764.9,947.7 757.0,963.5"/><polyline points="843.8,928.0 851.6,939.9 875.3,963.5 877.3,993.1"/><polyline points="1161.6,797.9 1177.4,805.8 1187.2,809.7"/><polyline points="1272.0,829.4 1291.7,827.5 1311.5,833.4 1331.2,839.3 1346.9,847.2 1360.8,855.1"/><polyline points="1189.2,811.7 1191.2,829.4 1205.0,849.2 1207.0,864.9 1193.2,878.7 1191.2,898.4 1169.5,912.2 1159.6,912.2"/><polyline points="1163.6,912.2 1193.2,920.1 1212.9,924.1"/><polyline points="1244.4,845.2 1234.6,859.0"/><polyline points="1161.6,920.1 1159.6,937.9 1145.8,961.5 1134.0,979.3"/><polyline points="1303.6,790.0 1311.5,797.9 1350.9,795.9 1362.7,790.0"/><polyline points="1402.2,926.1 1410.0,935.9"/><polyline points="1417.9,963.5 1441.6,957.6 1447.5,947.7"/><polyline points="1417.9,963.5 1421.9,977.3 1445.5,987.2"/><polyline points="1646.0,790.0 1634.2,801.8 1634.2,813.7"/><polyline points="1636.2,825.5 1646.0,841.3 1650.0,859.0 1651.9,888.6 1650.0,904.4 1659.8,928.0 1661.8,947.7 1655.9,967.5 1657.9,993.1"/><polyline points="1766.3,896.5 1784.0,886.6 1803.8,881.7"/><polyline points="1815.6,870.8 1823.5,855.1 1837.3,855.1"/><polyline points="1715.0,961.5 1720.9,945.8 1732.8,937.9 1734.8,930.0"/><polyline points="1851.1,821.5 1874.7,815.6 1885.0,811.7"/><polyline points="1809.7,831.4 1825.5,825.5"/><polyline points="1683.5,965.5 1685.5,987.2"/></g>
<g fill="none" stroke="#efc25e" stroke-width="1.0" stroke-opacity="1" stroke-linejoin="round" stroke-linecap="round"><polyline points="380.0,189.7 391.8,196.6 405.6,193.7 419.4,199.6 423.4,203.5"/><polyline points="434.2,195.7 435.2,201.6 427.3,208.5"/><polyline points="462.8,266.6 464.8,282.4 460.8,298.2 464.8,314.0 466.8,345.5"/><polyline points="614.6,310.0 622.5,325.8 629.4,339.6"/><polyline points="667.9,314.0 687.6,308.1 703.4,302.1 731.0,292.3 742.8,293.3 757.0,292.3"/><polyline points="899.0,266.6 906.9,262.7 926.6,260.7 950.2,258.8"/><polyline points="993.6,219.3 1005.4,227.2 1013.3,241.0"/><polyline points="1070.5,183.8 1066.6,211.4 1060.7,217.4"/><polyline points="1115.9,195.7 1119.8,207.5 1117.8,221.3"/><polyline points="1109.9,270.6 1102.1,294.2 1098.1,310.0 1104.0,325.8"/><polyline points="1056.7,339.6 1080.4,335.7 1092.2,333.7"/><polyline points="918.7,288.3 934.5,290.3 946.3,288.3"/><polyline points="1183.3,325.8 1187.2,339.6 1183.3,359.3 1181.3,378.0"/><polyline points="1685.5,175.9 1689.4,189.7 1681.5,201.6 1697.3,213.4 1705.2,225.2 1720.9,217.4"/><polyline points="1774.2,191.7 1782.1,185.8"/><polyline points="1807.7,239.0 1813.6,237.1"/><polyline points="1681.5,345.5 1685.5,361.3 1682.5,369.2"/><polyline points="634.4,488.4 636.3,504.2 632.4,516.0 638.3,527.9"/><polyline points="942.3,425.3 952.2,422.4"/><polyline points="946.3,443.1 954.2,443.1"/><polyline points="968.0,480.5 977.8,480.5 981.8,496.3"/><polyline points="969.9,512.1 981.8,520.0 981.8,535.7 985.7,555.5"/><polyline points="1013.3,431.2 1031.1,423.4"/><polyline points="993.6,437.2 995.6,451.0"/><polyline points="1005.4,520.0 1013.3,535.7 1017.3,575.2"/><polyline points="1023.2,537.7 1037.0,547.6 1044.9,549.5"/><polyline points="1052.8,555.5 1056.7,575.2"/><polyline points="1155.7,557.4 1165.5,555.5 1171.5,567.3 1179.4,563.3"/><polyline points="1632.2,500.2 1644.1,504.2 1653.9,501.2 1665.7,505.2 1681.5,506.2 1693.3,516.0 1705.2,527.9 1713.1,533.8 1707.1,539.7"/><polyline points="1699.3,462.8 1704.2,470.7 1705.2,486.4"/><polyline points="1699.3,512.1 1713.1,520.0 1715.0,535.7"/><polyline points="1713.1,567.3 1720.9,584.0"/><polyline points="1862.9,411.5 1878.7,397.7"/><polyline points="518.0,584.0 523.9,591.9 516.1,601.7 514.1,613.6 512.1,641.2"/><polyline points="565.3,635.3 569.3,639.2 589.0,643.2 600.8,645.1"/><polyline points="380.0,658.9 382.0,672.7 391.8,702.3 393.8,712.2"/><polyline points="496.3,662.9 486.5,670.8 488.4,690.5 482.5,694.4"/><polyline points="604.8,666.8 598.9,676.7 600.8,688.5"/><polyline points="646.2,668.8 660.0,664.8 669.8,668.8 673.8,666.8"/><polyline points="403.7,729.9 407.6,737.8"/><polyline points="439.2,767.4 445.1,775.3"/><polyline points="962.1,591.9 960.1,603.7 966.0,613.6 962.1,621.5 954.2,631.3 950.2,643.2 952.2,662.9 948.3,672.7"/><polyline points="983.8,662.9 979.8,676.7 971.9,682.6"/><polyline points="877.3,621.5 895.0,618.5 906.9,615.5"/><polyline points="782.6,621.5 796.4,625.4 808.3,621.5 816.2,623.4"/><polyline points="936.4,767.4 942.3,775.3 948.3,783.1"/><polyline points="837.8,739.8 843.8,735.8"/><polyline points="1201.0,611.6 1208.9,623.4 1208.9,631.3"/><polyline points="1197.1,757.5 1197.1,771.3 1191.2,779.2"/><polyline points="1252.3,755.5 1242.4,767.4 1234.6,781.2 1224.7,785.1 1252.3,783.1 1301.6,790.0"/><polyline points="1402.2,783.1 1414.0,785.1 1425.8,782.2"/><polyline points="1719.0,584.0 1720.9,591.9 1726.9,603.7 1717.0,619.5 1717.0,631.3 1705.2,645.1 1697.3,658.9 1689.4,668.8 1683.5,682.6"/><polyline points="1681.5,708.2 1679.5,722.0 1673.6,739.8 1665.7,747.7"/><polyline points="1819.5,625.4 1821.5,639.2"/><polyline points="421.4,873.8 439.2,880.7 464.8,888.6 472.7,882.7 484.5,884.6 502.2,890.6 518.0,886.6 553.5,871.8 573.2,853.1 581.1,837.3 587.0,831.4 600.8,829.4 616.6,817.6 636.3,811.7 656.0,804.8"/><polyline points="464.8,888.6 478.6,902.4 490.4,906.3 506.2,918.2 522.0,933.9 537.7,951.7 553.5,961.5 559.4,971.4 563.4,993.1"/><polyline points="380.0,906.3 383.9,928.0 380.0,947.7"/><polyline points="652.1,928.0 665.9,912.2 695.5,902.4 715.2,902.4 729.0,908.3 731.0,928.0 734.9,939.9"/><polyline points="701.4,803.8 703.4,813.7 695.5,827.5"/><polyline points="757.0,973.4 742.8,987.2 727.0,993.1"/><polyline points="383.9,963.5 399.7,977.3 419.4,993.1"/><polyline points="782.6,809.7 796.4,795.9 802.4,790.0"/><polyline points="794.5,894.5 816.2,892.5 831.9,894.5 851.6,902.4"/><polyline points="768.8,894.5 776.7,908.3 792.5,916.2 816.2,920.1"/><polyline points="776.7,908.3 772.8,928.0 764.9,947.7 757.0,963.5"/><polyline points="843.8,928.0 851.6,939.9 875.3,963.5 877.3,993.1"/><polyline points="1161.6,797.9 1177.4,805.8 1187.2,809.7"/><polyline points="1272.0,829.4 1291.7,827.5 1311.5,833.4 1331.2,839.3 1346.9,847.2 1360.8,855.1"/><polyline points="1189.2,811.7 1191.2,829.4 1205.0,849.2 1207.0,864.9 1193.2,878.7 1191.2,898.4 1169.5,912.2 1159.6,912.2"/><polyline points="1163.6,912.2 1193.2,920.1 1212.9,924.1"/><polyline points="1244.4,845.2 1234.6,859.0"/><polyline points="1161.6,920.1 1159.6,937.9 1145.8,961.5 1134.0,979.3"/><polyline points="1303.6,790.0 1311.5,797.9 1350.9,795.9 1362.7,790.0"/><polyline points="1402.2,926.1 1410.0,935.9"/><polyline points="1417.9,963.5 1441.6,957.6 1447.5,947.7"/><polyline points="1417.9,963.5 1421.9,977.3 1445.5,987.2"/><polyline points="1646.0,790.0 1634.2,801.8 1634.2,813.7"/><polyline points="1636.2,825.5 1646.0,841.3 1650.0,859.0 1651.9,888.6 1650.0,904.4 1659.8,928.0 1661.8,947.7 1655.9,967.5 1657.9,993.1"/><polyline points="1766.3,896.5 1784.0,886.6 1803.8,881.7"/><polyline points="1815.6,870.8 1823.5,855.1 1837.3,855.1"/><polyline points="1715.0,961.5 1720.9,945.8 1732.8,937.9 1734.8,930.0"/><polyline points="1851.1,821.5 1874.7,815.6 1885.0,811.7"/><polyline points="1809.7,831.4 1825.5,825.5"/><polyline points="1683.5,965.5 1685.5,987.2"/></g>
<g fill="none" stroke="#f08a45" stroke-width="1.15" stroke-opacity="1" stroke-linejoin="round" stroke-linecap="round"><polyline points="423.4,203.5 427.3,217.4 437.2,235.1 449.0,254.8 460.8,265.7 474.6,274.5 496.3,274.5 518.0,282.4 537.7,290.3 553.5,302.1 561.4,305.1 573.2,305.1 581.1,300.2"/><polyline points="543.7,172.0 557.5,189.7 564.4,201.6 561.4,213.4 553.5,229.2 553.5,239.0 563.4,254.8 570.3,266.6 572.2,274.5 575.2,281.4"/><polyline points="572.2,285.4 561.4,298.2 559.4,310.0 551.5,321.9 549.6,335.7 537.7,349.5 527.9,357.3 525.9,365.2 529.9,378.0"/><polyline points="564.4,203.5 583.1,193.7 596.9,183.8 604.8,179.9 618.6,183.8 624.5,188.8 636.3,185.8 650.1,179.9 653.1,172.0"/><polyline points="753.6,172.0 755.6,199.6 757.0,227.2"/><polyline points="757.0,225.2 764.9,250.9 778.7,276.5 782.6,284.4 796.4,294.2 812.2,306.1 824.0,314.0 839.8,313.0 851.6,310.0 859.5,296.2 867.4,292.3 895.0,282.4 906.9,282.4 920.7,286.4 930.5,294.2 954.2,292.3 973.9,294.2 993.6,292.3"/><polyline points="851.6,310.0 853.6,329.7 863.5,345.5 875.3,353.4 887.1,369.2 899.0,378.0"/><polyline points="930.5,298.2 922.6,314.0 914.7,329.7 908.8,345.5 906.9,369.2 902.9,378.0"/><polyline points="936.4,172.0 938.4,195.7 950.2,211.4 962.1,229.2 969.9,245.0 977.8,260.7"/><polyline points="1050.8,172.0 1046.8,195.7 1037.0,207.5 1029.1,227.2 1033.0,250.9 1033.0,290.3 1037.0,345.5 1042.9,378.0"/><polyline points="1015.3,187.8 1037.0,193.7 1052.8,203.5 1062.6,217.4"/><polyline points="989.7,256.8 1005.4,237.1 1033.0,223.3 1062.6,217.4 1092.2,219.3 1109.9,217.4"/><polyline points="954.2,258.8 993.6,256.8 1033.0,256.8 1072.5,254.8 1102.1,254.8 1134.0,258.8"/><polyline points="993.6,294.2 999.5,310.0 1013.3,327.8 1019.2,335.7"/><polyline points="1068.5,254.8 1064.6,274.5 1058.7,286.4 1060.7,294.2"/><polyline points="1121.8,256.8 1125.7,270.6 1134.0,276.5"/><polyline points="1141.9,172.0 1145.8,187.8 1148.8,211.4 1141.9,223.3"/><polyline points="1148.8,211.4 1169.5,201.6 1189.2,199.6 1205.0,193.7 1222.7,179.9 1240.5,172.0"/><polyline points="1145.8,237.1 1153.7,246.9 1155.7,258.8"/><polyline points="1212.9,288.3 1226.7,294.2 1244.4,314.0 1262.2,331.7 1283.9,345.5 1295.7,359.3 1305.5,369.2"/><polyline points="1384.4,172.0 1386.4,181.9 1400.2,197.6 1408.1,209.5 1404.1,221.3 1410.0,235.1 1416.0,245.0 1429.8,254.8 1437.7,268.6 1441.6,284.4 1429.8,294.2 1421.9,310.0 1417.9,329.7 1419.9,345.5 1416.0,357.3 1423.8,367.2 1433.7,378.0"/><polyline points="1479.1,172.0 1481.0,195.7 1465.3,221.3 1461.3,231.2 1463.3,246.9 1457.4,258.8 1459.3,270.6 1469.2,274.5 1486.9,268.6 1511.0,274.5"/><polyline points="1441.6,282.4 1463.3,274.5"/><polyline points="1449.5,378.0 1469.2,373.1 1500.7,377.1 1511.0,378.0"/><polyline points="1508.0,274.5 1527.7,280.4 1557.3,280.4 1567.2,288.3 1582.9,294.2 1606.6,293.3 1618.4,297.2"/><polyline points="1701.2,172.0 1709.1,183.8 1705.2,201.6 1697.3,209.5 1705.2,223.3 1697.3,243.0 1683.5,260.7 1681.5,276.5 1665.7,290.3 1661.8,296.2 1665.7,306.1 1671.7,315.9"/><polyline points="1667.7,314.0 1685.5,304.1 1697.3,294.2 1705.2,290.3 1722.9,289.3 1744.6,284.4 1760.4,279.5 1784.0,278.5 1803.8,272.6 1831.4,266.6 1860.9,272.6"/><polyline points="1860.9,272.6 1862.9,258.8 1868.8,248.9 1885.0,243.0"/><polyline points="1860.9,272.6 1862.9,290.3 1860.9,325.8 1847.1,333.7 1837.3,345.5 1831.4,369.2 1835.3,378.0"/><polyline points="1683.5,341.6 1697.3,357.3 1707.1,378.0"/><polyline points="1527.7,378.0 1537.6,375.1 1547.4,378.0"/><polyline points="380.0,437.2 399.7,435.2 419.4,425.3"/><polyline points="451.0,401.7 458.9,395.7 470.7,391.8 478.6,385.9"/><polyline points="551.5,378.0 559.4,393.8 563.4,413.5 571.3,427.3 571.3,439.1 579.1,449.0 589.0,456.9 585.1,468.7 591.0,480.5 589.0,500.2 587.0,516.0 589.0,531.8 594.9,535.7 592.9,551.5 596.9,557.4 614.6,573.2 620.6,584.0"/><polyline points="589.0,456.9 602.8,458.8 626.5,456.9 634.4,452.9 642.2,454.9 662.0,466.7 669.8,478.6 695.5,490.4 707.3,504.2 723.1,516.0 734.9,527.9 746.7,541.7 757.0,543.6"/><polyline points="380.0,490.4 391.8,490.4 399.7,496.3"/><polyline points="437.2,510.1 454.9,516.0 474.6,516.0"/><polyline points="508.2,549.5 514.1,567.3 518.0,584.0"/><polyline points="518.0,563.3 533.8,561.4 553.5,573.2 573.2,559.4 596.9,557.4 636.3,569.3 663.9,571.2 687.6,584.0"/><polyline points="596.9,557.4 583.1,584.0"/><polyline points="656.0,584.0 695.5,551.5 734.9,531.8 757.0,529.8"/><polyline points="893.1,389.8 887.1,405.6 875.3,423.4 877.3,441.1 867.4,451.0 845.7,462.8 831.9,474.6 824.0,488.4 824.0,496.3 820.1,504.2 816.2,514.1"/><polyline points="904.9,393.8 906.9,403.6 918.7,409.5 934.5,417.4 946.3,429.3 948.3,447.0 954.2,468.7 954.2,496.3 956.1,516.0 962.1,539.7 966.0,551.5 981.8,559.4"/><polyline points="757.0,527.9 776.7,520.0 804.3,516.0 822.1,514.1 845.7,504.2 867.4,496.3 887.1,482.5 910.8,473.6 954.2,473.6 973.9,472.6 1019.2,472.6"/><polyline points="932.5,508.1 954.2,506.2 979.8,506.2"/><polyline points="910.8,584.0 920.7,555.5 934.5,541.7 950.2,527.9 966.0,516.0 977.8,512.1"/><polyline points="1021.2,378.0 1019.2,397.7 1021.2,437.2 1023.2,480.5 1017.3,516.0 1019.2,555.5 1019.2,584.0"/><polyline points="1037.0,378.0 1033.0,389.8 1033.0,417.4 1039.0,437.2 1042.9,468.7 1040.9,516.0 1042.9,555.5 1044.9,584.0"/><polyline points="1040.9,474.6 1025.2,484.5 1013.3,488.4"/><polyline points="1011.4,510.1 1029.1,521.9 1046.8,531.8"/><polyline points="757.0,543.6 760.9,567.3 762.9,584.0"/><polyline points="1305.5,381.9 1331.2,380.0 1346.9,380.0 1366.7,389.8 1390.3,389.8 1410.0,389.8 1416.0,393.8 1429.8,389.8 1443.6,380.0"/><polyline points="1370.6,395.7 1370.6,403.6 1350.9,427.3 1345.0,443.1 1335.1,451.0 1321.3,462.8 1305.5,480.5 1299.6,492.4 1298.6,508.1 1283.9,520.0 1274.0,535.7 1272.0,545.6 1256.2,561.4 1256.2,573.2 1246.4,584.0"/><polyline points="1443.6,378.0 1449.5,397.7 1455.4,427.3 1467.2,441.1 1467.2,468.7 1465.3,476.6 1477.1,496.3 1488.9,520.0 1486.9,531.8 1481.0,547.6 1479.1,565.3 1477.1,584.0"/><polyline points="1543.5,378.0 1567.2,383.9 1590.8,389.8 1606.6,397.7 1618.4,396.7 1636.2,395.7 1646.0,399.7 1653.9,407.6 1665.7,425.3 1673.6,441.1 1675.6,460.8 1681.5,468.7 1693.3,470.7 1705.2,478.6 1717.0,486.4 1734.8,496.3 1744.6,504.2 1752.5,511.1 1762.4,514.1 1770.2,521.9 1774.2,529.8 1784.0,543.6 1803.8,551.5 1815.6,559.4 1823.5,571.2 1843.2,577.1 1851.1,584.0"/><polyline points="1707.1,378.0 1713.1,391.8 1711.1,413.5 1697.3,441.1 1693.3,460.8 1693.3,484.5 1697.3,504.2"/><polyline points="1835.3,381.9 1837.3,397.7 1823.5,409.5 1823.5,425.3 1811.7,437.2 1793.9,452.9 1790.0,460.8 1782.1,476.6 1780.1,488.4 1764.3,508.1 1748.6,535.7 1750.5,555.5 1752.5,584.0"/><polyline points="1622.4,584.0 1642.1,577.1 1675.6,580.1 1697.3,575.2 1713.1,565.3 1724.9,555.5 1740.7,541.7 1764.3,537.7 1784.0,535.7 1803.8,533.8 1823.5,529.8 1843.2,533.8 1862.9,529.8 1874.7,525.9 1885.0,527.9"/><polyline points="1713.1,535.7 1717.0,541.7 1728.8,543.6 1748.6,553.5"/><polyline points="380.0,627.4 385.9,637.2 383.9,653.0 380.0,658.9"/><polyline points="380.0,655.0 399.7,653.0 429.3,649.1 458.9,651.0 482.5,651.0 518.0,651.0 541.7,645.1 557.5,635.3 573.2,625.4 583.1,619.5"/><polyline points="525.9,584.0 531.8,591.9 545.6,595.8 551.5,605.7 569.3,605.7 583.1,611.6 598.9,615.5"/><polyline points="616.6,597.8 636.3,591.9 652.1,584.0"/><polyline points="541.7,653.0 557.5,666.8 569.3,678.6 587.0,686.5 602.8,690.5 610.7,698.4 614.6,720.1 624.5,733.9 626.5,757.5 630.4,773.3 640.3,790.0"/><polyline points="675.8,584.0 683.7,597.8 691.5,603.7 695.5,611.6 715.2,613.6 732.9,617.5"/><polyline points="910.8,584.0 908.8,615.5 910.8,639.2 918.7,658.9 926.6,670.8 924.6,676.7 934.5,686.5"/><polyline points="1035.0,601.7 1029.1,627.4 1019.2,653.0 1013.3,674.7 1001.5,694.4 993.6,702.3"/><polyline points="1039.0,584.0 1042.9,591.9 1072.5,589.9 1092.2,595.8 1111.9,603.7 1134.0,613.6"/><polyline points="910.8,718.1 902.9,739.8 885.2,765.4 863.5,790.0"/><polyline points="916.7,790.0 934.5,765.4 954.2,751.6 960.1,749.6"/><polyline points="1084.3,755.5 1092.2,773.3 1108.0,781.2 1125.7,790.0"/><polyline points="1134.0,613.6 1163.6,618.5 1183.3,629.4 1207.0,631.3 1232.6,639.2 1244.4,639.2 1262.2,625.4 1281.9,619.5 1307.5,617.5 1331.2,621.5 1350.9,629.4 1370.6,633.3 1410.0,633.3 1429.8,631.3 1449.5,625.4 1465.3,619.5 1483.0,621.5 1498.8,611.6 1511.0,607.7"/><polyline points="1248.4,584.0 1240.5,593.9 1240.5,613.6 1236.5,631.3 1226.7,645.1 1224.7,666.8 1216.8,682.6 1212.9,698.4 1199.1,722.0 1181.3,761.5 1173.4,773.3 1153.7,790.0"/><polyline points="1481.0,584.0 1485.0,595.8 1479.1,605.7 1483.0,621.5 1490.9,633.3 1490.9,649.1 1485.0,662.9 1473.1,674.7 1469.2,686.5 1471.2,702.3 1473.1,741.7 1467.2,755.5 1473.1,769.3 1479.1,790.0"/><polyline points="1508.0,607.7 1533.6,599.8 1547.4,602.7 1563.2,595.8 1590.8,601.7 1610.5,593.9 1624.3,584.0"/><polyline points="1752.5,584.0 1756.4,607.7 1764.3,627.4 1770.2,647.1 1774.2,666.8 1788.0,686.5 1795.9,696.4 1793.9,704.3 1807.7,720.1 1823.5,739.8 1825.5,761.5 1823.5,790.0"/><polyline points="1847.1,584.0 1862.9,595.8 1874.7,615.5 1885.0,627.4"/><polyline points="380.0,866.9 403.7,867.9 411.5,873.8 421.4,873.8"/><polyline points="642.2,790.0 656.0,799.9 675.8,801.8 691.5,807.7 705.3,800.8 734.9,803.8 757.0,804.8"/><polyline points="729.0,908.3 754.6,910.3 757.0,908.3"/><polyline points="750.7,882.7 750.7,900.4 754.6,908.3 742.8,924.1 731.0,935.9 723.1,957.6 731.0,977.3 727.0,993.1"/><polyline points="757.0,804.8 768.8,803.8 780.7,811.7 794.5,839.3 794.5,855.1 792.5,874.8"/><polyline points="794.5,843.2 816.2,841.3 835.9,829.4 855.6,799.9 863.5,790.0"/><polyline points="784.6,843.2 772.8,853.1 764.9,868.9 757.0,880.7"/><polyline points="914.7,790.0 906.9,801.8 895.0,825.5 875.3,853.1 855.6,888.6 843.8,912.2 839.8,935.9 828.0,953.7 816.2,967.5 810.2,993.1"/><polyline points="1134.0,847.2 1121.8,861.0 1115.9,876.8 1113.9,900.4 1092.2,924.1 1072.5,945.8 1068.5,967.5 1048.8,983.2 1044.9,993.1"/><polyline points="1134.0,799.9 1147.8,797.9 1153.7,790.0"/><polyline points="1147.8,797.9 1151.7,809.7 1155.7,823.5 1145.8,835.4 1134.0,841.3"/><polyline points="1165.5,827.5 1189.2,831.4 1212.9,835.4 1232.6,841.3 1252.3,851.1 1270.1,861.0 1297.7,863.0 1311.5,868.9 1321.3,876.8 1329.2,884.6"/><polyline points="1319.3,892.5 1323.3,900.4 1350.9,908.3 1370.6,912.2 1382.4,924.1 1410.0,933.9 1429.8,935.9 1449.5,930.0 1473.1,932.0 1481.0,941.8 1511.0,943.8"/><polyline points="1323.3,896.5 1330.2,889.6"/><polyline points="1477.1,790.0 1479.1,805.8 1473.1,819.6 1479.1,839.3 1483.0,851.1 1479.1,864.9 1469.2,878.7 1449.5,896.5 1441.6,908.3 1451.5,928.0 1447.5,947.7 1441.6,967.5 1445.5,993.1"/><polyline points="1508.0,941.8 1531.7,951.7 1569.1,957.6 1606.6,949.7 1646.0,950.7 1665.7,953.7 1705.2,959.6 1715.0,961.5 1728.8,975.3 1748.6,993.1"/><polyline points="1825.5,821.5 1833.3,839.3 1839.3,859.0 1847.1,872.8 1857.0,888.6 1855.0,908.3 1859.0,928.0 1860.9,967.5 1862.9,993.1"/><polyline points="1847.1,872.8 1862.9,872.8 1885.0,868.9"/><polyline points="1443.5,380.0 1468.0,375.0 1510.0,377.0 1527.0,378.0 1545.0,378.0"/></g>
<g fill="none" stroke="#7d809e" stroke-width="2.0" stroke-opacity="1" stroke-linejoin="round" stroke-linecap="round"><polyline points="380.0,317.9 385.9,327.8 391.8,331.7 399.7,337.6 403.7,343.5 411.5,347.5 419.4,349.5 429.3,359.3 437.2,363.3 447.0,359.3 458.9,363.3 460.8,369.2 456.9,378.0"/><polyline points="458.9,378.0 460.8,385.9 456.9,393.8 457.9,401.7 453.0,407.6 447.0,415.5"/><polyline points="415.5,464.8 421.4,472.6 416.5,484.5 415.5,490.4"/><polyline points="380.0,490.4 391.8,494.3 399.7,500.2 405.6,506.2 439.2,508.1 454.9,518.0 466.8,527.9 470.7,541.7 478.6,549.5 474.6,559.4 482.5,571.2 490.4,584.0"/><polyline points="494.4,584.0 502.2,595.8 508.2,615.5 518.0,621.5 514.1,629.4 520.0,637.2 533.8,637.2 549.6,643.2 549.6,631.3 553.5,627.4 547.6,617.5 553.5,613.6 565.3,617.5 571.3,613.6 577.2,613.6 583.1,621.5 600.8,635.3 606.8,649.1 612.7,655.0"/><polyline points="614.6,643.2 620.6,643.2 624.5,649.1 636.3,653.0 656.0,653.0 671.8,658.9 679.7,649.1 693.5,643.2 695.5,633.3 715.2,630.3 713.2,637.2 729.0,637.2 731.0,647.1 734.9,662.9 746.7,672.7 757.0,672.7"/><polyline points="757.0,672.7 766.9,678.6 766.9,684.6 778.7,687.5 784.6,683.6 792.5,686.5 806.3,682.6 812.2,680.6 822.1,684.6 831.9,692.4 849.7,683.6 861.5,696.4 875.3,698.4 887.1,708.2 910.8,716.1 922.6,718.1 930.5,720.1 922.6,726.0 914.7,739.8 895.0,790.0"/><polyline points="895.0,790.0 879.2,795.9 863.5,807.7 859.5,819.6 847.7,835.4 826.0,853.1 822.1,864.9 816.2,888.6 814.2,910.3 804.3,924.1 800.4,943.8 796.4,953.7 798.4,985.2 790.5,993.1"/></g>
<g fill="#111"><circle cx="434.4" cy="194.2" r="1.9"/><circle cx="546.3" cy="198" r="1.9"/><circle cx="829" cy="197.4" r="1.9"/><circle cx="714.2" cy="252.3" r="1.9"/><circle cx="461.3" cy="294.1" r="1.9"/><circle cx="561.2" cy="289.7" r="1.9"/><circle cx="737.5" cy="290.5" r="1.9"/><circle cx="831" cy="350.6" r="1.9"/><circle cx="679.4" cy="406" r="1.9"/><circle cx="578.2" cy="430.4" r="1.9"/><circle cx="818.5" cy="441.4" r="1.9"/><circle cx="1196.4" cy="196.3" r="1.9"/><circle cx="935.4" cy="248.4" r="1.9"/><circle cx="1185.4" cy="293.6" r="1.9"/><circle cx="1047.4" cy="337.3" r="1.9"/><circle cx="1124.5" cy="339.4" r="1.9"/><circle cx="900.4" cy="392.5" r="1.9"/><circle cx="1040.3" cy="419.1" r="1.9"/><circle cx="1145.4" cy="420" r="1.9"/><circle cx="1441.3" cy="197.6" r="1.9"/><circle cx="1638.3" cy="242.5" r="1.9"/><circle cx="1818.5" cy="240.1" r="1.9"/><circle cx="1411.2" cy="292.7" r="1.9"/><circle cx="1704.4" cy="293.5" r="1.9"/><circle cx="1854.6" cy="307.2" r="1.9"/><circle cx="1867.3" cy="350.3" r="1.9"/><circle cx="1844.3" cy="387.3" r="1.9"/><circle cx="1642.3" cy="409.2" r="1.9"/><circle cx="1711.5" cy="403.6" r="1.9"/><circle cx="1491.5" cy="409.7" r="1.9"/><circle cx="1587.3" cy="461.1" r="1.9"/><circle cx="639.4" cy="510.6" r="1.9"/><circle cx="567.5" cy="533.4" r="1.9"/><circle cx="804.2" cy="520.5" r="1.9"/><circle cx="684.1" cy="573.4" r="1.9"/><circle cx="760.5" cy="623.6" r="1.9"/><circle cx="859" cy="622.3" r="1.9"/><circle cx="511.3" cy="663.6" r="1.9"/><circle cx="612.2" cy="661.5" r="1.9"/><circle cx="807.6" cy="644.5" r="1.9"/><circle cx="709" cy="686.3" r="1.9"/><circle cx="905.4" cy="558.5" r="1.9"/><circle cx="915.3" cy="512.4" r="1.9"/><circle cx="1233" cy="487.6" r="1.9"/><circle cx="1357.2" cy="500.7" r="1.9"/><circle cx="1184" cy="558.5" r="1.9"/><circle cx="1010.2" cy="603.4" r="1.9"/><circle cx="1110.1" cy="600.3" r="1.9"/><circle cx="1282.2" cy="623.6" r="1.9"/><circle cx="1033.5" cy="655.7" r="1.9"/><circle cx="1118.5" cy="650.5" r="1.9"/><circle cx="1204.3" cy="647.4" r="1.9"/><circle cx="1347.3" cy="660.4" r="1.9"/><circle cx="1534.5" cy="495.5" r="1.9"/><circle cx="1772.8" cy="491.5" r="1.9"/><circle cx="1716.2" cy="516.6" r="1.9"/><circle cx="1469.3" cy="548.3" r="1.9"/><circle cx="1700.4" cy="568.6" r="1.9"/><circle cx="1577.3" cy="580.5" r="1.9"/><circle cx="1822.4" cy="589.2" r="1.9"/><circle cx="1511.3" cy="637.3" r="1.9"/><circle cx="1439.4" cy="650.5" r="1.9"/><circle cx="1627.5" cy="659.2" r="1.9"/><circle cx="1508.6" cy="678.5" r="1.9"/><circle cx="1687.2" cy="694.4" r="1.9"/><circle cx="1825.6" cy="692.2" r="1.9"/><circle cx="810.4" cy="784.4" r="1.9"/><circle cx="606.5" cy="819" r="1.9"/><circle cx="452.3" cy="878.2" r="1.9"/><circle cx="799" cy="882" r="1.9"/><circle cx="725.5" cy="932.5" r="1.9"/><circle cx="832.4" cy="983.3" r="1.9"/><circle cx="935.2" cy="809.3" r="1.9"/><circle cx="1192.7" cy="800.6" r="1.9"/><circle cx="1144" cy="829.5" r="1.9"/><circle cx="1363" cy="791.5" r="1.9"/><circle cx="1107.3" cy="876" r="1.9"/><circle cx="1374" cy="865" r="1.9"/><circle cx="1202.6" cy="920.2" r="1.9"/><circle cx="981.2" cy="931.5" r="1.9"/><circle cx="1554.3" cy="770.2" r="1.9"/><circle cx="1445.5" cy="776" r="1.9"/><circle cx="1744.5" cy="817.5" r="1.9"/><circle cx="1461.4" cy="843.4" r="1.9"/><circle cx="1635.4" cy="825.4" r="1.9"/><circle cx="1556.4" cy="883.5" r="1.9"/><circle cx="1653.4" cy="896.2" r="1.9"/><circle cx="1835.1" cy="904.7" r="1.9"/><circle cx="1496.2" cy="936.4" r="1.9"/><circle cx="1731.3" cy="933.2" r="1.9"/><circle cx="1417" cy="959" r="1.9"/><circle cx="1667.4" cy="972" r="1.9"/></g>
<g font-family="Liberation Sans, sans-serif" fill="#484848" stroke="#f4f4ee" stroke-width="2.2" stroke-linejoin="round" paint-order="stroke">
<text x="419" y="189.2" font-size="12.2" textLength="29.5" lengthAdjust="spacingAndGlyphs">Prüm</text>
<text x="419" y="189.2" font-size="12.2" textLength="29.5" lengthAdjust="spacingAndGlyphs" stroke="#484848" stroke-width="0.12">Prüm</text>
<text x="532.5" y="194.0" font-size="12.2" textLength="27.5" lengthAdjust="spacingAndGlyphs">Daun</text>
<text x="532.5" y="194.0" font-size="12.2" textLength="27.5" lengthAdjust="spacingAndGlyphs" stroke="#484848" stroke-width="0.12">Daun</text>
<text x="805" y="193.2" font-size="12.2" textLength="48.0" lengthAdjust="spacingAndGlyphs">Nastätten</text>
<text x="805" y="193.2" font-size="12.2" textLength="48.0" lengthAdjust="spacingAndGlyphs" stroke="#484848" stroke-width="0.12">Nastätten</text>
<text x="687" y="247.6" font-size="12.2" textLength="55.0" lengthAdjust="spacingAndGlyphs">Kastellaun</text>
<text x="687" y="247.6" font-size="12.2" textLength="55.0" lengthAdjust="spacingAndGlyphs" stroke="#484848" stroke-width="0.12">Kastellaun</text>
<text x="442" y="290.0" font-size="12.2" textLength="39.0" lengthAdjust="spacingAndGlyphs">Bitburg</text>
<text x="442" y="290.0" font-size="12.2" textLength="39.0" lengthAdjust="spacingAndGlyphs" stroke="#484848" stroke-width="0.12">Bitburg</text>
<text x="542.7" y="284.2" font-size="12.2" textLength="38.7" lengthAdjust="spacingAndGlyphs">Wittlich</text>
<text x="542.7" y="284.2" font-size="12.2" textLength="38.7" lengthAdjust="spacingAndGlyphs" stroke="#484848" stroke-width="0.12">Wittlich</text>
<text x="713" y="285.5" font-size="12.2" textLength="49.0" lengthAdjust="spacingAndGlyphs">Simmern</text>
<text x="713" y="285.5" font-size="12.2" textLength="49.0" lengthAdjust="spacingAndGlyphs" stroke="#484848" stroke-width="0.12">Simmern</text>
<text x="792.4" y="345.7" font-size="12.2" textLength="77.9" lengthAdjust="spacingAndGlyphs">Bad Kreuznach</text>
<text x="792.4" y="345.7" font-size="12.2" textLength="77.9" lengthAdjust="spacingAndGlyphs" stroke="#484848" stroke-width="0.12">Bad Kreuznach</text>
<text x="641.5" y="401.6" font-size="12.2" textLength="75.1" lengthAdjust="spacingAndGlyphs">Idar-Oberstein</text>
<text x="641.5" y="401.6" font-size="12.2" textLength="75.1" lengthAdjust="spacingAndGlyphs" stroke="#484848" stroke-width="0.12">Idar-Oberstein</text>
<text x="548.7" y="425.4" font-size="12.2" textLength="59.3" lengthAdjust="spacingAndGlyphs">Hermeskeil</text>
<text x="548.7" y="425.4" font-size="12.2" textLength="59.3" lengthAdjust="spacingAndGlyphs" stroke="#484848" stroke-width="0.12">Hermeskeil</text>
<text x="781.4" y="436.9" font-size="12.2" textLength="74.6" lengthAdjust="spacingAndGlyphs">Rockenhausen</text>
<text x="781.4" y="436.9" font-size="12.2" textLength="74.6" lengthAdjust="spacingAndGlyphs" stroke="#484848" stroke-width="0.12">Rockenhausen</text>
<text x="480" y="379.5" font-size="14" textLength="26.0" lengthAdjust="spacingAndGlyphs">Trier</text>
<text x="480" y="379.5" font-size="14" textLength="26.0" lengthAdjust="spacingAndGlyphs" stroke="#484848" stroke-width="0.12">Trier</text>
<text x="1166" y="191.4" font-size="12.2" textLength="61.0" lengthAdjust="spacingAndGlyphs">Gelnhausen</text>
<text x="1166" y="191.4" font-size="12.2" textLength="61.0" lengthAdjust="spacingAndGlyphs" stroke="#484848" stroke-width="0.12">Gelnhausen</text>
<text x="1102.5" y="219.4" font-size="14" textLength="37.5" lengthAdjust="spacingAndGlyphs">Hanau</text>
<text x="1102.5" y="219.4" font-size="14" textLength="37.5" lengthAdjust="spacingAndGlyphs" stroke="#484848" stroke-width="0.12">Hanau</text>
<text x="902" y="242.2" font-size="14" textLength="65.6" lengthAdjust="spacingAndGlyphs">Wiesbaden</text>
<text x="902" y="242.2" font-size="14" textLength="65.6" lengthAdjust="spacingAndGlyphs" stroke="#484848" stroke-width="0.12">Wiesbaden</text>
<text x="1019.4" y="255.7" font-size="17.5" textLength="75.0" lengthAdjust="spacingAndGlyphs">Frankfurt</text>
<text x="1019.4" y="255.7" font-size="17.5" textLength="75.0" lengthAdjust="spacingAndGlyphs" stroke="#484848" stroke-width="0.12">Frankfurt</text>
<text x="927" y="275.8" font-size="14" textLength="34.0" lengthAdjust="spacingAndGlyphs">Mainz</text>
<text x="927" y="275.8" font-size="14" textLength="34.0" lengthAdjust="spacingAndGlyphs" stroke="#484848" stroke-width="0.12">Mainz</text>
<text x="1143.5" y="290.0" font-size="12.2" textLength="79.1" lengthAdjust="spacingAndGlyphs">Aschaffenburg</text>
<text x="1143.5" y="290.0" font-size="12.2" textLength="79.1" lengthAdjust="spacingAndGlyphs" stroke="#484848" stroke-width="0.12">Aschaffenburg</text>
<text x="1267" y="280.8" font-size="12.2" textLength="70.6" lengthAdjust="spacingAndGlyphs">Lohr am Main</text>
<text x="1267" y="280.8" font-size="12.2" textLength="70.6" lengthAdjust="spacingAndGlyphs" stroke="#484848" stroke-width="0.12">Lohr am Main</text>
<text x="1016.5" y="331.1" font-size="14" textLength="63.5" lengthAdjust="spacingAndGlyphs">Darmstadt</text>
<text x="1016.5" y="331.1" font-size="14" textLength="63.5" lengthAdjust="spacingAndGlyphs" stroke="#484848" stroke-width="0.12">Darmstadt</text>
<text x="1088" y="334.4" font-size="12.2" textLength="73.6" lengthAdjust="spacingAndGlyphs">Groß-Umstadt</text>
<text x="1088" y="334.4" font-size="12.2" textLength="73.6" lengthAdjust="spacingAndGlyphs" stroke="#484848" stroke-width="0.12">Groß-Umstadt</text>
<text x="886.5" y="386.7" font-size="12.2" textLength="27.5" lengthAdjust="spacingAndGlyphs">Alzey</text>
<text x="886.5" y="386.7" font-size="12.2" textLength="27.5" lengthAdjust="spacingAndGlyphs" stroke="#484848" stroke-width="0.12">Alzey</text>
<text x="1262" y="367.9" font-size="12.2" textLength="48.0" lengthAdjust="spacingAndGlyphs">Wertheim</text>
<text x="1262" y="367.9" font-size="12.2" textLength="48.0" lengthAdjust="spacingAndGlyphs" stroke="#484848" stroke-width="0.12">Wertheim</text>
<text x="1014.7" y="414.7" font-size="12.2" textLength="51.5" lengthAdjust="spacingAndGlyphs">Bensheim</text>
<text x="1014.7" y="414.7" font-size="12.2" textLength="51.5" lengthAdjust="spacingAndGlyphs" stroke="#484848" stroke-width="0.12">Bensheim</text>
<text x="1116.7" y="415.5" font-size="12.2" textLength="58.8" lengthAdjust="spacingAndGlyphs">Michelstadt</text>
<text x="1116.7" y="415.5" font-size="12.2" textLength="58.8" lengthAdjust="spacingAndGlyphs" stroke="#484848" stroke-width="0.12">Michelstadt</text>
<text x="1371.6" y="366.4" font-size="14" textLength="58.4" lengthAdjust="spacingAndGlyphs">Würzburg</text>
<text x="1371.6" y="366.4" font-size="14" textLength="58.4" lengthAdjust="spacingAndGlyphs" stroke="#484848" stroke-width="0.12">Würzburg</text>
<text x="1405" y="192.6" font-size="12.2" textLength="72.7" lengthAdjust="spacingAndGlyphs">Bad Kissingen</text>
<text x="1405" y="192.6" font-size="12.2" textLength="72.7" lengthAdjust="spacingAndGlyphs" stroke="#484848" stroke-width="0.12">Bad Kissingen</text>
<text x="1623.5" y="238.2" font-size="12.2" textLength="31.2" lengthAdjust="spacingAndGlyphs">Ebern</text>
<text x="1623.5" y="238.2" font-size="12.2" textLength="31.2" lengthAdjust="spacingAndGlyphs" stroke="#484848" stroke-width="0.12">Ebern</text>
<text x="1792.6" y="234.8" font-size="12.2" textLength="52.8" lengthAdjust="spacingAndGlyphs">Kulmbach</text>
<text x="1792.6" y="234.8" font-size="12.2" textLength="52.8" lengthAdjust="spacingAndGlyphs" stroke="#484848" stroke-width="0.12">Kulmbach</text>
<text x="1452.6" y="256.8" font-size="12.2" textLength="62.4" lengthAdjust="spacingAndGlyphs">Schweinfurt</text>
<text x="1452.6" y="256.8" font-size="12.2" textLength="62.4" lengthAdjust="spacingAndGlyphs" stroke="#484848" stroke-width="0.12">Schweinfurt</text>
<text x="1389" y="287.7" font-size="12.2" textLength="43.3" lengthAdjust="spacingAndGlyphs">Arnstein</text>
<text x="1389" y="287.7" font-size="12.2" textLength="43.3" lengthAdjust="spacingAndGlyphs" stroke="#484848" stroke-width="0.12">Arnstein</text>
<text x="1681" y="287.9" font-size="12.2" textLength="47.0" lengthAdjust="spacingAndGlyphs">Scheßlitz</text>
<text x="1681" y="287.9" font-size="12.2" textLength="47.0" lengthAdjust="spacingAndGlyphs" stroke="#484848" stroke-width="0.12">Scheßlitz</text>
<text x="1831" y="303.0" font-size="12.2" textLength="46.0" lengthAdjust="spacingAndGlyphs">Bayreuth</text>
<text x="1831" y="303.0" font-size="12.2" textLength="46.0" lengthAdjust="spacingAndGlyphs" stroke="#484848" stroke-width="0.12">Bayreuth</text>
<text x="1642.8" y="324.6" font-size="12.2" textLength="45.7" lengthAdjust="spacingAndGlyphs">Bamberg</text>
<text x="1642.8" y="324.6" font-size="12.2" textLength="45.7" lengthAdjust="spacingAndGlyphs" stroke="#484848" stroke-width="0.12">Bamberg</text>
<text x="1845" y="345.2" font-size="12.2" textLength="48.0" lengthAdjust="spacingAndGlyphs">Creußen</text>
<text x="1845" y="345.2" font-size="12.2" textLength="48.0" lengthAdjust="spacingAndGlyphs" stroke="#484848" stroke-width="0.12">Creußen</text>
<text x="1825.8" y="382.7" font-size="12.2" textLength="38.2" lengthAdjust="spacingAndGlyphs">Pegnitz</text>
<text x="1825.8" y="382.7" font-size="12.2" textLength="38.2" lengthAdjust="spacingAndGlyphs" stroke="#484848" stroke-width="0.12">Pegnitz</text>
<text x="1617" y="390.2" font-size="12.2" textLength="51.0" lengthAdjust="spacingAndGlyphs">Höchstadt</text>
<text x="1617" y="390.2" font-size="12.2" textLength="51.0" lengthAdjust="spacingAndGlyphs" stroke="#484848" stroke-width="0.12">Höchstadt</text>
<text x="1611" y="404.7" font-size="12.2" textLength="62.0" lengthAdjust="spacingAndGlyphs">an der Aisch</text>
<text x="1611" y="404.7" font-size="12.2" textLength="62.0" lengthAdjust="spacingAndGlyphs" stroke="#484848" stroke-width="0.12">an der Aisch</text>
<text x="1684" y="398.9" font-size="12.2" textLength="55.0" lengthAdjust="spacingAndGlyphs">Forchheim</text>
<text x="1684" y="398.9" font-size="12.2" textLength="55.0" lengthAdjust="spacingAndGlyphs" stroke="#484848" stroke-width="0.12">Forchheim</text>
<text x="1472.4" y="405.2" font-size="12.2" textLength="37.6" lengthAdjust="spacingAndGlyphs">Iphofen</text>
<text x="1472.4" y="405.2" font-size="12.2" textLength="37.6" lengthAdjust="spacingAndGlyphs" stroke="#484848" stroke-width="0.12">Iphofen</text>
<text x="1557" y="442.4" font-size="12.2" textLength="60.7" lengthAdjust="spacingAndGlyphs">Neustadt an</text>
<text x="1557" y="442.4" font-size="12.2" textLength="60.7" lengthAdjust="spacingAndGlyphs" stroke="#484848" stroke-width="0.12">Neustadt an</text>
<text x="1563.6" y="456.9" font-size="12.2" textLength="47.4" lengthAdjust="spacingAndGlyphs">der Aisch</text>
<text x="1563.6" y="456.9" font-size="12.2" textLength="47.4" lengthAdjust="spacingAndGlyphs" stroke="#484848" stroke-width="0.12">der Aisch</text>
<text x="604.4" y="506.2" font-size="12.2" textLength="70.6" lengthAdjust="spacingAndGlyphs">Sankt Wendel</text>
<text x="604.4" y="506.2" font-size="12.2" textLength="70.6" lengthAdjust="spacingAndGlyphs" stroke="#484848" stroke-width="0.12">Sankt Wendel</text>
<text x="475.4" y="516.2" font-size="12.2" textLength="34.8" lengthAdjust="spacingAndGlyphs">Merzig</text>
<text x="475.4" y="516.2" font-size="12.2" textLength="34.8" lengthAdjust="spacingAndGlyphs" stroke="#484848" stroke-width="0.12">Merzig</text>
<text x="549.5" y="528.4" font-size="12.2" textLength="36.5" lengthAdjust="spacingAndGlyphs">Lebach</text>
<text x="549.5" y="528.4" font-size="12.2" textLength="36.5" lengthAdjust="spacingAndGlyphs" stroke="#484848" stroke-width="0.12">Lebach</text>
<text x="761.3" y="514.1" font-size="14" textLength="86.7" lengthAdjust="spacingAndGlyphs">Kaiserslautern</text>
<text x="761.3" y="514.1" font-size="14" textLength="86.7" lengthAdjust="spacingAndGlyphs" stroke="#484848" stroke-width="0.12">Kaiserslautern</text>
<text x="660.3" y="568.9" font-size="12.2" textLength="49.2" lengthAdjust="spacingAndGlyphs">Homburg</text>
<text x="660.3" y="568.9" font-size="12.2" textLength="49.2" lengthAdjust="spacingAndGlyphs" stroke="#484848" stroke-width="0.12">Homburg</text>
<text x="553.4" y="602.5" font-size="14" textLength="76.3" lengthAdjust="spacingAndGlyphs">Saarbrücken</text>
<text x="553.4" y="602.5" font-size="14" textLength="76.3" lengthAdjust="spacingAndGlyphs" stroke="#484848" stroke-width="0.12">Saarbrücken</text>
<text x="733" y="618.6" font-size="12.2" textLength="55.5" lengthAdjust="spacingAndGlyphs">Pirmasens</text>
<text x="733" y="618.6" font-size="12.2" textLength="55.5" lengthAdjust="spacingAndGlyphs" stroke="#484848" stroke-width="0.12">Pirmasens</text>
<text x="833.7" y="602.4" font-size="12.2" textLength="48.3" lengthAdjust="spacingAndGlyphs">Annweiler</text>
<text x="833.7" y="602.4" font-size="12.2" textLength="48.3" lengthAdjust="spacingAndGlyphs" stroke="#484848" stroke-width="0.12">Annweiler</text>
<text x="833.7" y="617.3" font-size="12.2" textLength="48.3" lengthAdjust="spacingAndGlyphs">am Trifels</text>
<text x="833.7" y="617.3" font-size="12.2" textLength="48.3" lengthAdjust="spacingAndGlyphs" stroke="#484848" stroke-width="0.12">am Trifels</text>
<text x="482.5" y="658.6" font-size="12.2" textLength="58.8" lengthAdjust="spacingAndGlyphs">Saint-Avold</text>
<text x="482.5" y="658.6" font-size="12.2" textLength="58.8" lengthAdjust="spacingAndGlyphs" stroke="#484848" stroke-width="0.12">Saint-Avold</text>
<text x="572.2" y="656.8" font-size="12.2" textLength="80.3" lengthAdjust="spacingAndGlyphs">Sarreguemines</text>
<text x="572.2" y="656.8" font-size="12.2" textLength="80.3" lengthAdjust="spacingAndGlyphs" stroke="#484848" stroke-width="0.12">Sarreguemines</text>
<text x="794.5" y="639.8" font-size="12.2" textLength="26.9" lengthAdjust="spacingAndGlyphs">Dahn</text>
<text x="794.5" y="639.8" font-size="12.2" textLength="26.9" lengthAdjust="spacingAndGlyphs" stroke="#484848" stroke-width="0.12">Dahn</text>
<text x="694.3" y="681.4" font-size="12.2" textLength="32.2" lengthAdjust="spacingAndGlyphs">Bitche</text>
<text x="694.3" y="681.4" font-size="12.2" textLength="32.2" lengthAdjust="spacingAndGlyphs" stroke="#484848" stroke-width="0.12">Bitche</text>
<text x="865" y="538.9" font-size="12.2" textLength="81.7" lengthAdjust="spacingAndGlyphs">Neustadt an der</text>
<text x="865" y="538.9" font-size="12.2" textLength="81.7" lengthAdjust="spacingAndGlyphs" stroke="#484848" stroke-width="0.12">Neustadt an der</text>
<text x="877" y="553.5" font-size="12.2" textLength="58.4" lengthAdjust="spacingAndGlyphs">Weinstraße</text>
<text x="877" y="553.5" font-size="12.2" textLength="58.4" lengthAdjust="spacingAndGlyphs" stroke="#484848" stroke-width="0.12">Weinstraße</text>
<text x="966.3" y="494.5" font-size="14" textLength="62.7" lengthAdjust="spacingAndGlyphs">Mannheim</text>
<text x="966.3" y="494.5" font-size="14" textLength="62.7" lengthAdjust="spacingAndGlyphs" stroke="#484848" stroke-width="0.12">Mannheim</text>
<text x="878" y="507.0" font-size="12.2" textLength="74.7" lengthAdjust="spacingAndGlyphs">Bad Dürkheim</text>
<text x="878" y="507.0" font-size="12.2" textLength="74.7" lengthAdjust="spacingAndGlyphs" stroke="#484848" stroke-width="0.12">Bad Dürkheim</text>
<text x="1214.7" y="482.2" font-size="12.2" textLength="38.3" lengthAdjust="spacingAndGlyphs">Buchen</text>
<text x="1214.7" y="482.2" font-size="12.2" textLength="38.3" lengthAdjust="spacingAndGlyphs" stroke="#484848" stroke-width="0.12">Buchen</text>
<text x="1322.5" y="480.8" font-size="12.2" textLength="22.5" lengthAdjust="spacingAndGlyphs">Bad</text>
<text x="1322.5" y="480.8" font-size="12.2" textLength="22.5" lengthAdjust="spacingAndGlyphs" stroke="#484848" stroke-width="0.12">Bad</text>
<text x="1322.5" y="495.7" font-size="12.2" textLength="69.5" lengthAdjust="spacingAndGlyphs">Mergentheim</text>
<text x="1322.5" y="495.7" font-size="12.2" textLength="69.5" lengthAdjust="spacingAndGlyphs" stroke="#484848" stroke-width="0.12">Mergentheim</text>
<text x="1115.4" y="507.0" font-size="12.2" textLength="49.1" lengthAdjust="spacingAndGlyphs">Eberbach</text>
<text x="1115.4" y="507.0" font-size="12.2" textLength="49.1" lengthAdjust="spacingAndGlyphs" stroke="#484848" stroke-width="0.12">Eberbach</text>
<text x="1161.6" y="554.0" font-size="12.2" textLength="45.4" lengthAdjust="spacingAndGlyphs">Mosbach</text>
<text x="1161.6" y="554.0" font-size="12.2" textLength="45.4" lengthAdjust="spacingAndGlyphs" stroke="#484848" stroke-width="0.12">Mosbach</text>
<text x="984" y="598.5" font-size="12.2" textLength="55.0" lengthAdjust="spacingAndGlyphs">Waghäusel</text>
<text x="984" y="598.5" font-size="12.2" textLength="55.0" lengthAdjust="spacingAndGlyphs" stroke="#484848" stroke-width="0.12">Waghäusel</text>
<text x="1086" y="595.4" font-size="12.2" textLength="47.7" lengthAdjust="spacingAndGlyphs">Sinsheim</text>
<text x="1086" y="595.4" font-size="12.2" textLength="47.7" lengthAdjust="spacingAndGlyphs" stroke="#484848" stroke-width="0.12">Sinsheim</text>
<text x="1258.7" y="618.2" font-size="12.2" textLength="47.6" lengthAdjust="spacingAndGlyphs">Öhringen</text>
<text x="1258.7" y="618.2" font-size="12.2" textLength="47.6" lengthAdjust="spacingAndGlyphs" stroke="#484848" stroke-width="0.12">Öhringen</text>
<text x="1010.2" y="650.8" font-size="12.2" textLength="47.1" lengthAdjust="spacingAndGlyphs">Bruchsal</text>
<text x="1010.2" y="650.8" font-size="12.2" textLength="47.1" lengthAdjust="spacingAndGlyphs" stroke="#484848" stroke-width="0.12">Bruchsal</text>
<text x="1094.4" y="645.6" font-size="12.2" textLength="49.2" lengthAdjust="spacingAndGlyphs">Eppingen</text>
<text x="1094.4" y="645.6" font-size="12.2" textLength="49.2" lengthAdjust="spacingAndGlyphs" stroke="#484848" stroke-width="0.12">Eppingen</text>
<text x="1175" y="641.5" font-size="14" textLength="58.6" lengthAdjust="spacingAndGlyphs">Heilbronn</text>
<text x="1175" y="641.5" font-size="14" textLength="58.6" lengthAdjust="spacingAndGlyphs" stroke="#484848" stroke-width="0.12">Heilbronn</text>
<text x="1305" y="655.5" font-size="12.2" textLength="84.0" lengthAdjust="spacingAndGlyphs">Schwäbisch Hall</text>
<text x="1305" y="655.5" font-size="12.2" textLength="84.0" lengthAdjust="spacingAndGlyphs" stroke="#484848" stroke-width="0.12">Schwäbisch Hall</text>
<text x="946" y="698.5" font-size="14" textLength="63.4" lengthAdjust="spacingAndGlyphs">Karlsruhe</text>
<text x="946" y="698.5" font-size="14" textLength="63.4" lengthAdjust="spacingAndGlyphs" stroke="#484848" stroke-width="0.12">Karlsruhe</text>
<text x="1494" y="491.2" font-size="12.2" textLength="81.5" lengthAdjust="spacingAndGlyphs">Bad Windsheim</text>
<text x="1494" y="491.2" font-size="12.2" textLength="81.5" lengthAdjust="spacingAndGlyphs" stroke="#484848" stroke-width="0.12">Bad Windsheim</text>
<text x="1744.5" y="471.9" font-size="12.2" textLength="57.5" lengthAdjust="spacingAndGlyphs">Lauf an der</text>
<text x="1744.5" y="471.9" font-size="12.2" textLength="57.5" lengthAdjust="spacingAndGlyphs" stroke="#484848" stroke-width="0.12">Lauf an der</text>
<text x="1753.7" y="486.5" font-size="12.2" textLength="38.3" lengthAdjust="spacingAndGlyphs">Pegnitz</text>
<text x="1753.7" y="486.5" font-size="12.2" textLength="38.3" lengthAdjust="spacingAndGlyphs" stroke="#484848" stroke-width="0.12">Pegnitz</text>
<text x="1682" y="509.5" font-size="14" textLength="69.6" lengthAdjust="spacingAndGlyphs">Nuremberg</text>
<text x="1682" y="509.5" font-size="14" textLength="69.6" lengthAdjust="spacingAndGlyphs" stroke="#484848" stroke-width="0.12">Nuremberg</text>
<text x="1438.6" y="529.2" font-size="12.2" textLength="60.8" lengthAdjust="spacingAndGlyphs">Rothenburg</text>
<text x="1438.6" y="529.2" font-size="12.2" textLength="60.8" lengthAdjust="spacingAndGlyphs" stroke="#484848" stroke-width="0.12">Rothenburg</text>
<text x="1432.8" y="544.0" font-size="12.2" textLength="71.9" lengthAdjust="spacingAndGlyphs">ob der Tauber</text>
<text x="1432.8" y="544.0" font-size="12.2" textLength="71.9" lengthAdjust="spacingAndGlyphs" stroke="#484848" stroke-width="0.12">ob der Tauber</text>
<text x="1671.3" y="563.9" font-size="12.2" textLength="58.2" lengthAdjust="spacingAndGlyphs">Schwabach</text>
<text x="1671.3" y="563.9" font-size="12.2" textLength="58.2" lengthAdjust="spacingAndGlyphs" stroke="#484848" stroke-width="0.12">Schwabach</text>
<text x="1555.6" y="574.9" font-size="12.2" textLength="43.6" lengthAdjust="spacingAndGlyphs">Ansbach</text>
<text x="1555.6" y="574.9" font-size="12.2" textLength="43.6" lengthAdjust="spacingAndGlyphs" stroke="#484848" stroke-width="0.12">Ansbach</text>
<text x="1790" y="570.5" font-size="12.2" textLength="64.0" lengthAdjust="spacingAndGlyphs">Neumarkt in</text>
<text x="1790" y="570.5" font-size="12.2" textLength="64.0" lengthAdjust="spacingAndGlyphs" stroke="#484848" stroke-width="0.12">Neumarkt in</text>
<text x="1786.8" y="584.7" font-size="12.2" textLength="70.0" lengthAdjust="spacingAndGlyphs">der Oberpfalz</text>
<text x="1786.8" y="584.7" font-size="12.2" textLength="70.0" lengthAdjust="spacingAndGlyphs" stroke="#484848" stroke-width="0.12">der Oberpfalz</text>
<text x="1473.8" y="632.2" font-size="12.2" textLength="74.4" lengthAdjust="spacingAndGlyphs">Feuchtwangen</text>
<text x="1473.8" y="632.2" font-size="12.2" textLength="74.4" lengthAdjust="spacingAndGlyphs" stroke="#484848" stroke-width="0.12">Feuchtwangen</text>
<text x="1411" y="645.5" font-size="12.2" textLength="56.0" lengthAdjust="spacingAndGlyphs">Crailsheim</text>
<text x="1411" y="645.5" font-size="12.2" textLength="56.0" lengthAdjust="spacingAndGlyphs" stroke="#484848" stroke-width="0.12">Crailsheim</text>
<text x="1590" y="654.7" font-size="12.2" textLength="75.3" lengthAdjust="spacingAndGlyphs">Gunzenhausen</text>
<text x="1590" y="654.7" font-size="12.2" textLength="75.3" lengthAdjust="spacingAndGlyphs" stroke="#484848" stroke-width="0.12">Gunzenhausen</text>
<text x="1478.3" y="673.5" font-size="12.2" textLength="61.5" lengthAdjust="spacingAndGlyphs">Dinkelsbühl</text>
<text x="1478.3" y="673.5" font-size="12.2" textLength="61.5" lengthAdjust="spacingAndGlyphs" stroke="#484848" stroke-width="0.12">Dinkelsbühl</text>
<text x="1656" y="675.8" font-size="12.2" textLength="62.6" lengthAdjust="spacingAndGlyphs">Weißenburg</text>
<text x="1656" y="675.8" font-size="12.2" textLength="62.6" lengthAdjust="spacingAndGlyphs" stroke="#484848" stroke-width="0.12">Weißenburg</text>
<text x="1663.4" y="689.8" font-size="12.2" textLength="48.9" lengthAdjust="spacingAndGlyphs">in Bayern</text>
<text x="1663.4" y="689.8" font-size="12.2" textLength="48.9" lengthAdjust="spacingAndGlyphs" stroke="#484848" stroke-width="0.12">in Bayern</text>
<text x="1799.4" y="687.7" font-size="12.2" textLength="53.4" lengthAdjust="spacingAndGlyphs">Beilngries</text>
<text x="1799.4" y="687.7" font-size="12.2" textLength="53.4" lengthAdjust="spacingAndGlyphs" stroke="#484848" stroke-width="0.12">Beilngries</text>
<text x="1870" y="635.7" font-size="12.2" textLength="46.0" lengthAdjust="spacingAndGlyphs">Parsberg</text>
<text x="1870" y="635.7" font-size="12.2" textLength="46.0" lengthAdjust="spacingAndGlyphs" stroke="#484848" stroke-width="0.12">Parsberg</text>
<text x="1854.6" y="718.9" font-size="12.2" textLength="59.4" lengthAdjust="spacingAndGlyphs">Riedenburg</text>
<text x="1854.6" y="718.9" font-size="12.2" textLength="59.4" lengthAdjust="spacingAndGlyphs" stroke="#484848" stroke-width="0.12">Riedenburg</text>
<text x="784.6" y="779.4" font-size="12.2" textLength="51.8" lengthAdjust="spacingAndGlyphs">Haguenau</text>
<text x="784.6" y="779.4" font-size="12.2" textLength="51.8" lengthAdjust="spacingAndGlyphs" stroke="#484848" stroke-width="0.12">Haguenau</text>
<text x="577" y="814.0" font-size="12.2" textLength="59.2" lengthAdjust="spacingAndGlyphs">Sarrebourg</text>
<text x="577" y="814.0" font-size="12.2" textLength="59.2" lengthAdjust="spacingAndGlyphs" stroke="#484848" stroke-width="0.12">Sarrebourg</text>
<text x="430" y="873.7" font-size="12.2" textLength="45.9" lengthAdjust="spacingAndGlyphs">Lunéville</text>
<text x="430" y="873.7" font-size="12.2" textLength="45.9" lengthAdjust="spacingAndGlyphs" stroke="#484848" stroke-width="0.12">Lunéville</text>
<text x="766.2" y="875.1" font-size="14" textLength="66.2" lengthAdjust="spacingAndGlyphs">Strasbourg</text>
<text x="766.2" y="875.1" font-size="14" textLength="66.2" lengthAdjust="spacingAndGlyphs" stroke="#484848" stroke-width="0.12">Strasbourg</text>
<text x="705.8" y="927.5" font-size="12.2" textLength="39.4" lengthAdjust="spacingAndGlyphs">Obernai</text>
<text x="705.8" y="927.5" font-size="12.2" textLength="39.4" lengthAdjust="spacingAndGlyphs" stroke="#484848" stroke-width="0.12">Obernai</text>
<text x="376" y="965.2" font-size="12.2" textLength="45.5" lengthAdjust="spacingAndGlyphs">Charmes</text>
<text x="376" y="965.2" font-size="12.2" textLength="45.5" lengthAdjust="spacingAndGlyphs" stroke="#484848" stroke-width="0.12">Charmes</text>
<text x="819.3" y="964.3" font-size="12.2" textLength="27.9" lengthAdjust="spacingAndGlyphs">Lahr/</text>
<text x="819.3" y="964.3" font-size="12.2" textLength="27.9" lengthAdjust="spacingAndGlyphs" stroke="#484848" stroke-width="0.12">Lahr/</text>
<text x="800" y="978.2" font-size="12.2" textLength="67.4" lengthAdjust="spacingAndGlyphs">Schwarzwald</text>
<text x="800" y="978.2" font-size="12.2" textLength="67.4" lengthAdjust="spacingAndGlyphs" stroke="#484848" stroke-width="0.12">Schwarzwald</text>
<text x="551.3" y="986.2" font-size="12.2" textLength="53.3" lengthAdjust="spacingAndGlyphs">Saint-Dié-</text>
<text x="551.3" y="986.2" font-size="12.2" textLength="53.3" lengthAdjust="spacingAndGlyphs" stroke="#484848" stroke-width="0.12">Saint-Dié-</text>
<text x="552" y="1000.7" font-size="12.2" textLength="52.0" lengthAdjust="spacingAndGlyphs">des-Vosges</text>
<text x="552" y="1000.7" font-size="12.2" textLength="52.0" lengthAdjust="spacingAndGlyphs" stroke="#484848" stroke-width="0.12">des-Vosges</text>
<text x="355" y="830.4" font-size="14" textLength="32.0" lengthAdjust="spacingAndGlyphs">Nancy</text>
<text x="355" y="830.4" font-size="14" textLength="32.0" lengthAdjust="spacingAndGlyphs" stroke="#484848" stroke-width="0.12">Nancy</text>
<text x="899.7" y="804.3" font-size="12.2" textLength="70.9" lengthAdjust="spacingAndGlyphs">Baden-Baden</text>
<text x="899.7" y="804.3" font-size="12.2" textLength="70.9" lengthAdjust="spacingAndGlyphs" stroke="#484848" stroke-width="0.12">Baden-Baden</text>
<text x="1167.7" y="794.1" font-size="14" textLength="59.3" lengthAdjust="spacingAndGlyphs">Stuttgart</text>
<text x="1167.7" y="794.1" font-size="14" textLength="59.3" lengthAdjust="spacingAndGlyphs" stroke="#484848" stroke-width="0.12">Stuttgart</text>
<text x="1112.5" y="825.1" font-size="12.2" textLength="64.9" lengthAdjust="spacingAndGlyphs">Sindelfingen</text>
<text x="1112.5" y="825.1" font-size="12.2" textLength="64.9" lengthAdjust="spacingAndGlyphs" stroke="#484848" stroke-width="0.12">Sindelfingen</text>
<text x="1333" y="771.5" font-size="12.2" textLength="61.0" lengthAdjust="spacingAndGlyphs">Schwäbisch</text>
<text x="1333" y="771.5" font-size="12.2" textLength="61.0" lengthAdjust="spacingAndGlyphs" stroke="#484848" stroke-width="0.12">Schwäbisch</text>
<text x="1345" y="786.5" font-size="12.2" textLength="37.0" lengthAdjust="spacingAndGlyphs">Gmünd</text>
<text x="1345" y="786.5" font-size="12.2" textLength="37.0" lengthAdjust="spacingAndGlyphs" stroke="#484848" stroke-width="0.12">Gmünd</text>
<text x="1077.6" y="871.8" font-size="12.2" textLength="59.9" lengthAdjust="spacingAndGlyphs">Herrenberg</text>
<text x="1077.6" y="871.8" font-size="12.2" textLength="59.9" lengthAdjust="spacingAndGlyphs" stroke="#484848" stroke-width="0.12">Herrenberg</text>
<text x="1347.7" y="846.2" font-size="12.2" textLength="54.3" lengthAdjust="spacingAndGlyphs">Geislingen</text>
<text x="1347.7" y="846.2" font-size="12.2" textLength="54.3" lengthAdjust="spacingAndGlyphs" stroke="#484848" stroke-width="0.12">Geislingen</text>
<text x="1341" y="860.8" font-size="12.2" textLength="68.0" lengthAdjust="spacingAndGlyphs">an der Steige</text>
<text x="1341" y="860.8" font-size="12.2" textLength="68.0" lengthAdjust="spacingAndGlyphs" stroke="#484848" stroke-width="0.12">an der Steige</text>
<text x="1170.3" y="913.7" font-size="14" textLength="63.9" lengthAdjust="spacingAndGlyphs">Reutlingen</text>
<text x="1170.3" y="913.7" font-size="14" textLength="63.9" lengthAdjust="spacingAndGlyphs" stroke="#484848" stroke-width="0.12">Reutlingen</text>
<text x="947.8" y="926.5" font-size="12.2" textLength="68.2" lengthAdjust="spacingAndGlyphs">Freudenstadt</text>
<text x="947.8" y="926.5" font-size="12.2" textLength="68.2" lengthAdjust="spacingAndGlyphs" stroke="#484848" stroke-width="0.12">Freudenstadt</text>
<text x="1174.3" y="991.4" font-size="12.2" textLength="74.3" lengthAdjust="spacingAndGlyphs">Trochtelfingen</text>
<text x="1174.3" y="991.4" font-size="12.2" textLength="74.3" lengthAdjust="spacingAndGlyphs" stroke="#484848" stroke-width="0.12">Trochtelfingen</text>
<text x="1525.3" y="764.9" font-size="12.2" textLength="58.1" lengthAdjust="spacingAndGlyphs">Nördlingen</text>
<text x="1525.3" y="764.9" font-size="12.2" textLength="58.1" lengthAdjust="spacingAndGlyphs" stroke="#484848" stroke-width="0.12">Nördlingen</text>
<text x="1430.7" y="771.5" font-size="12.2" textLength="29.1" lengthAdjust="spacingAndGlyphs">Aalen</text>
<text x="1430.7" y="771.5" font-size="12.2" textLength="29.1" lengthAdjust="spacingAndGlyphs" stroke="#484848" stroke-width="0.12">Aalen</text>
<text x="1714.7" y="798.7" font-size="12.2" textLength="60.7" lengthAdjust="spacingAndGlyphs">Neuburg an</text>
<text x="1714.7" y="798.7" font-size="12.2" textLength="60.7" lengthAdjust="spacingAndGlyphs" stroke="#484848" stroke-width="0.12">Neuburg an</text>
<text x="1718.6" y="813.2" font-size="12.2" textLength="52.8" lengthAdjust="spacingAndGlyphs">der Donau</text>
<text x="1718.6" y="813.2" font-size="12.2" textLength="52.8" lengthAdjust="spacingAndGlyphs" stroke="#484848" stroke-width="0.12">der Donau</text>
<text x="1783.3" y="800.6" font-size="14" textLength="58.9" lengthAdjust="spacingAndGlyphs">Ingolstadt</text>
<text x="1783.3" y="800.6" font-size="14" textLength="58.9" lengthAdjust="spacingAndGlyphs" stroke="#484848" stroke-width="0.12">Ingolstadt</text>
<text x="1431" y="823.3" font-size="12.2" textLength="61.3" lengthAdjust="spacingAndGlyphs">Heidenheim</text>
<text x="1431" y="823.3" font-size="12.2" textLength="61.3" lengthAdjust="spacingAndGlyphs" stroke="#484848" stroke-width="0.12">Heidenheim</text>
<text x="1428.3" y="837.8" font-size="12.2" textLength="66.6" lengthAdjust="spacingAndGlyphs">an der Brenz</text>
<text x="1428.3" y="837.8" font-size="12.2" textLength="66.6" lengthAdjust="spacingAndGlyphs" stroke="#484848" stroke-width="0.12">an der Brenz</text>
<text x="1604" y="820.6" font-size="12.2" textLength="62.0" lengthAdjust="spacingAndGlyphs">Donauwörth</text>
<text x="1604" y="820.6" font-size="12.2" textLength="62.0" lengthAdjust="spacingAndGlyphs" stroke="#484848" stroke-width="0.12">Donauwörth</text>
<text x="1525.3" y="864.0" font-size="12.2" textLength="62.0" lengthAdjust="spacingAndGlyphs">Dillingen an</text>
<text x="1525.3" y="864.0" font-size="12.2" textLength="62.0" lengthAdjust="spacingAndGlyphs" stroke="#484848" stroke-width="0.12">Dillingen an</text>
<text x="1529.8" y="878.0" font-size="12.2" textLength="53.1" lengthAdjust="spacingAndGlyphs">der Donau</text>
<text x="1529.8" y="878.0" font-size="12.2" textLength="53.1" lengthAdjust="spacingAndGlyphs" stroke="#484848" stroke-width="0.12">der Donau</text>
<text x="1628.8" y="891.2" font-size="12.2" textLength="50.5" lengthAdjust="spacingAndGlyphs">Meitingen</text>
<text x="1628.8" y="891.2" font-size="12.2" textLength="50.5" lengthAdjust="spacingAndGlyphs" stroke="#484848" stroke-width="0.12">Meitingen</text>
<text x="1802.6" y="885.1" font-size="12.2" textLength="64.7" lengthAdjust="spacingAndGlyphs">Pfaffenhofen</text>
<text x="1802.6" y="885.1" font-size="12.2" textLength="64.7" lengthAdjust="spacingAndGlyphs" stroke="#484848" stroke-width="0.12">Pfaffenhofen</text>
<text x="1809.2" y="899.6" font-size="12.2" textLength="51.5" lengthAdjust="spacingAndGlyphs">an der Ilm</text>
<text x="1809.2" y="899.6" font-size="12.2" textLength="51.5" lengthAdjust="spacingAndGlyphs" stroke="#484848" stroke-width="0.12">an der Ilm</text>
<text x="1471" y="931.3" font-size="12.2" textLength="50.3" lengthAdjust="spacingAndGlyphs">Günzburg</text>
<text x="1471" y="931.3" font-size="12.2" textLength="50.3" lengthAdjust="spacingAndGlyphs" stroke="#484848" stroke-width="0.12">Günzburg</text>
<text x="1711.5" y="928.7" font-size="12.2" textLength="39.5" lengthAdjust="spacingAndGlyphs">Aichach</text>
<text x="1711.5" y="928.7" font-size="12.2" textLength="39.5" lengthAdjust="spacingAndGlyphs" stroke="#484848" stroke-width="0.12">Aichach</text>
<text x="1405" y="953.0" font-size="14" textLength="25.7" lengthAdjust="spacingAndGlyphs">Ulm</text>
<text x="1405" y="953.0" font-size="14" textLength="25.7" lengthAdjust="spacingAndGlyphs" stroke="#484848" stroke-width="0.12">Ulm</text>
<text x="1638.3" y="965.8" font-size="14" textLength="57.3" lengthAdjust="spacingAndGlyphs">Augsburg</text>
<text x="1638.3" y="965.8" font-size="14" textLength="57.3" lengthAdjust="spacingAndGlyphs" stroke="#484848" stroke-width="0.12">Augsburg</text>
<text x="1879" y="951.9" font-size="12.2" textLength="46.0" lengthAdjust="spacingAndGlyphs">Freising</text>
<text x="1879" y="951.9" font-size="12.2" textLength="46.0" lengthAdjust="spacingAndGlyphs" stroke="#484848" stroke-width="0.12">Freising</text>
<text x="275" y="389.0" font-size="19" textLength="119.4" lengthAdjust="spacingAndGlyphs" font-weight="700" fill="#222">Luxembourg</text>
<text x="275" y="389.0" font-size="19" textLength="119.4" lengthAdjust="spacingAndGlyphs" stroke="#484848" stroke-width="0.12" font-weight="700" fill="#222">Luxembourg</text>
<text x="330" y="442.9" font-size="12.2" textLength="60.0" lengthAdjust="spacingAndGlyphs">Wasserburg</text>
<text x="330" y="442.9" font-size="12.2" textLength="60.0" lengthAdjust="spacingAndGlyphs" stroke="#484848" stroke-width="0.12">Wasserburg</text>
</g>
<rect x="482.5" y="447" width="24.7" height="12.8" rx="2" fill="#f3d98a" stroke="#5d6275" stroke-width="1"/>
<text x="494.9" y="456.7" font-size="9.5" font-weight="700" text-anchor="middle" fill="#4a4a4a" font-family="Liberation Sans, sans-serif">407</text>
<path d="M868 426.3 H884.1 L886.1 429.84000000000003 V434.56 L876.05 439.1 L866 434.56 V429.84000000000003 Z" fill="#6b79c7"/>
<text x="876.0" y="435.5" font-size="9.5" font-weight="700" text-anchor="middle" fill="#fff" font-family="Liberation Sans, sans-serif">63</text>
<path d="M1015.3 453.9 H1030.6 L1032.6 457.44 V462.15999999999997 L1022.9499999999999 466.7 L1013.3 462.15999999999997 V457.44 Z" fill="#6b79c7"/>
<text x="1022.9" y="463.1" font-size="9.5" font-weight="700" text-anchor="middle" fill="#fff" font-family="Liberation Sans, sans-serif">67</text>
<rect x="1343.4" y="280.5" width="19.1" height="13.1" rx="2" fill="#f3d98a" stroke="#5d6275" stroke-width="1"/>
<text x="1353.0" y="290.4" font-size="9.5" font-weight="700" text-anchor="middle" fill="#4a4a4a" font-family="Liberation Sans, sans-serif">26</text>
<path d="M1460 211 H1475.7 L1477.7 214.75 V219.75 L1467.85 224.5 L1458 219.75 V214.75 Z" fill="#6b79c7"/>
<text x="1467.8" y="220.6" font-size="9.5" font-weight="700" text-anchor="middle" fill="#fff" font-family="Liberation Sans, sans-serif">71</text>
<rect x="597" y="705.4" width="25.7" height="13.1" rx="2" fill="#fff" stroke="#5d6a9a" stroke-width="1"/>
<text x="609.9" y="715.2" font-size="9.5" font-weight="700" text-anchor="middle" fill="#4a5070" font-family="Liberation Sans, sans-serif">A 4</text>
<path d="M881.2 827.5 H896.6 L898.6 831.34 V836.4599999999999 L888.9000000000001 841.3 L879.2 836.4599999999999 V831.34 Z" fill="#6b79c7"/>
<text x="888.9" y="837.2" font-size="9.5" font-weight="700" text-anchor="middle" fill="#fff" font-family="Liberation Sans, sans-serif">5</text>
<rect x="1708.8" y="718.7" width="18.5" height="12.4" rx="2" fill="#f3d98a" stroke="#5d6275" stroke-width="1"/>
<text x="1718.0" y="728.2" font-size="9.5" font-weight="700" text-anchor="middle" fill="#4a4a4a" font-family="Liberation Sans, sans-serif">13</text>
<rect x="1640.2" y="850.8" width="19.3" height="12.4" rx="2" fill="#f3d98a" stroke="#5d6275" stroke-width="1"/>
<text x="1649.8" y="860.3" font-size="9.5" font-weight="700" text-anchor="middle" fill="#4a4a4a" font-family="Liberation Sans, sans-serif">2</text>
<circle cx="771" cy="166.5" r="17.7" fill="#3366cc"/>
<circle cx="755.9" cy="183.2" r="17.7" fill="#3366cc"/>
<circle cx="789" cy="217.3" r="17.7" fill="#3366cc"/>
<circle cx="803.5" cy="246.5" r="17.7" fill="#3366cc"/>
<circle cx="840.8" cy="296.2" r="17.7" fill="#3366cc"/>
<circle cx="876.9" cy="281.8" r="17.7" fill="#3366cc"/>
<circle cx="944" cy="281.3" r="17.7" fill="#3366cc"/>
<circle cx="963.2" cy="310.6" r="17.7" fill="#3366cc"/>
<circle cx="965.5" cy="340.7" r="17.7" fill="#3366cc"/>
<circle cx="972.5" cy="440.5" r="17.7" fill="#3366cc"/>
<circle cx="993.8" cy="502.8" r="17.7" fill="#3366cc"/>
<circle cx="991.9" cy="570.8" r="17.7" fill="#3366cc"/>
<circle cx="986.7" cy="600" r="17.7" fill="#3366cc"/>
<circle cx="952.7" cy="691.6" r="17.7" fill="#3366cc"/>
<circle cx="905.7" cy="755.2" r="17.7" fill="#3366cc"/>
<circle cx="900.5" cy="769.9" r="17.7" fill="#3366cc"/>
<circle cx="815.4" cy="890.5" r="17.7" fill="#3366cc"/>
<circle cx="794.6" cy="964.3" r="17.7" fill="#3366cc"/>
<circle cx="715.7" cy="175.8" r="17.7" fill="#dd4477"/>
<circle cx="685.9" cy="204.9" r="17.7" fill="#dd4477"/>
<circle cx="638.9" cy="220.4" r="17.7" fill="#dd4477"/>
<circle cx="655.1" cy="228.2" r="17.7" fill="#dd4477"/>
<circle cx="629.7" cy="245.2" r="17.7" fill="#dd4477"/>
<circle cx="626.3" cy="292.8" r="17.7" fill="#dd4477"/>
<circle cx="597" cy="304" r="17.7" fill="#dd4477"/>
<circle cx="578" cy="336.2" r="17.7" fill="#dd4477"/>
<circle cx="550" cy="360.8" r="17.7" fill="#dd4477"/>
<circle cx="511.3" cy="376" r="17.7" fill="#dd4477"/>
<circle cx="489.8" cy="397.6" r="17.7" fill="#dd4477"/>
<circle cx="438" cy="422.5" r="17.7" fill="#dd4477"/>
<circle cx="428.5" cy="451.2" r="17.7" fill="#dd4477"/>
<circle cx="418.7" cy="508" r="17.7" fill="#dd4477"/>
<circle cx="479.5" cy="468.8" r="17.7" fill="#0099c6"/>
<circle cx="495.8" cy="534.9" r="17.7" fill="#0099c6"/>
<circle cx="599.1" cy="617.3" r="17.7" fill="#0099c6"/>
<circle cx="991.9" cy="276.1" r="17.7" fill="#66aa00"/>
<circle cx="1065.7" cy="237.9" r="17.7" fill="#66aa00"/>
<circle cx="1121.5" cy="232.2" r="17.7" fill="#66aa00"/>
<circle cx="1125.5" cy="235" r="17.7" fill="#66aa00"/>
<circle cx="1131.3" cy="249" r="17.7" fill="#66aa00"/>
<circle cx="1154" cy="279.3" r="17.7" fill="#66aa00"/>
<circle cx="1180" cy="311.9" r="17.7" fill="#66aa00"/>
<circle cx="1206.1" cy="404.7" r="17.7" fill="#66aa00"/>
<circle cx="1264.4" cy="374.7" r="17.7" fill="#66aa00"/>
<circle cx="1286.6" cy="385.1" r="17.7" fill="#66aa00"/>
<circle cx="1310.2" cy="277.9" r="17.7" fill="#66aa00"/>
<circle cx="1480.9" cy="270.3" r="17.7" fill="#66aa00"/>
<circle cx="1479.8" cy="343.7" r="17.7" fill="#66aa00"/>
<circle cx="1399" cy="370.6" r="17.7" fill="#66aa00"/>
<circle cx="1627.8" cy="313.3" r="17.7" fill="#66aa00"/>
<circle cx="997.7" cy="498.8" r="17.7" fill="#109618"/>
<circle cx="1065.7" cy="532.8" r="17.7" fill="#109618"/>
<circle cx="1082.7" cy="534.1" r="17.7" fill="#109618"/>
<circle cx="1145.4" cy="523.2" r="17.7" fill="#109618"/>
<circle cx="1186.5" cy="589" r="17.7" fill="#109618"/>
<circle cx="1188.1" cy="677.4" r="17.7" fill="#109618"/>
<circle cx="1186" cy="708" r="17.7" fill="#109618"/>
<circle cx="1198" cy="711" r="17.7" fill="#109618"/>
<circle cx="1210" cy="738" r="17.7" fill="#109618"/>
<circle cx="1211" cy="800.6" r="17.7" fill="#109618"/>
<circle cx="1259.1" cy="830.3" r="17.7" fill="#109618"/>
<circle cx="1669.8" cy="333.6" r="17.7" fill="#990099"/>
<circle cx="1879.2" cy="718" r="17.7" fill="#990099"/>
<circle cx="1812.6" cy="809.5" r="17.7" fill="#ff9900"/>
<g opacity="0.9"><circle cx="397.3" cy="976.3" r="8.6" fill="#fff" fill-opacity="0.9" stroke="#777" stroke-opacity="0.6" stroke-width="1.3"/><path d="M393 980 L394.2 974.5 L399.5 972.8 L398.5 978 Z" fill="#8a8a8a"/>
<text x="409.6" y="983.6" font-size="15.5" font-weight="700" textLength="63" lengthAdjust="spacingAndGlyphs" fill="#fff" stroke="#6f6f6f" stroke-opacity="0.55" stroke-width="1.6" paint-order="stroke" font-family="Liberation Sans, sans-serif">mapbox</text></g>
<rect x="1574" y="974.3" width="311" height="19.7" fill="#fff" fill-opacity="0.5"/>
</svg>
<div class="t " style="left:1580.00px;top:977.74px;font-size:13.89px;line-height:13.89px;font-weight:400;color:#404040;letter-spacing:-0.205px;font-family:'Liberation Sans', sans-serif;">© Mapbox © OpenStreetMap</div>
<div class="t " style="left:1761.50px;top:977.56px;font-size:14.1px;line-height:14.1px;font-weight:700;color:#404040;letter-spacing:0.077px;font-family:'Liberation Sans', sans-serif;">Improve this map</div>
<div class="b" style="left:959px;top:700px;width:510px;height:55px;background:#000;"></div>
<div class="t " style="left:967.40px;top:709.85px;font-size:14.83px;line-height:14.83px;font-weight:400;color:#fff;letter-spacing:0.499px;font-family:'Liberation Sans', sans-serif;">Longitude and Latitude:</div>
<div class="t " style="left:1139.10px;top:709.85px;font-size:14.83px;line-height:14.83px;font-weight:700;color:#fff;letter-spacing:1.473px;font-family:'Liberation Sans', sans-serif;">8.305563766511732, 49.0389774795334</div>
<div class="t " style="left:967.40px;top:729.55px;font-size:14.83px;line-height:14.83px;font-weight:400;color:#fff;letter-spacing:0.363px;font-family:'Liberation Sans', sans-serif;">Category:</div>
<div class="t " style="left:1039.40px;top:729.55px;font-size:14.83px;line-height:14.83px;font-weight:700;color:#fff;letter-spacing:0.465px;font-family:'Liberation Sans', sans-serif;">RHEIN</div></body></html>
